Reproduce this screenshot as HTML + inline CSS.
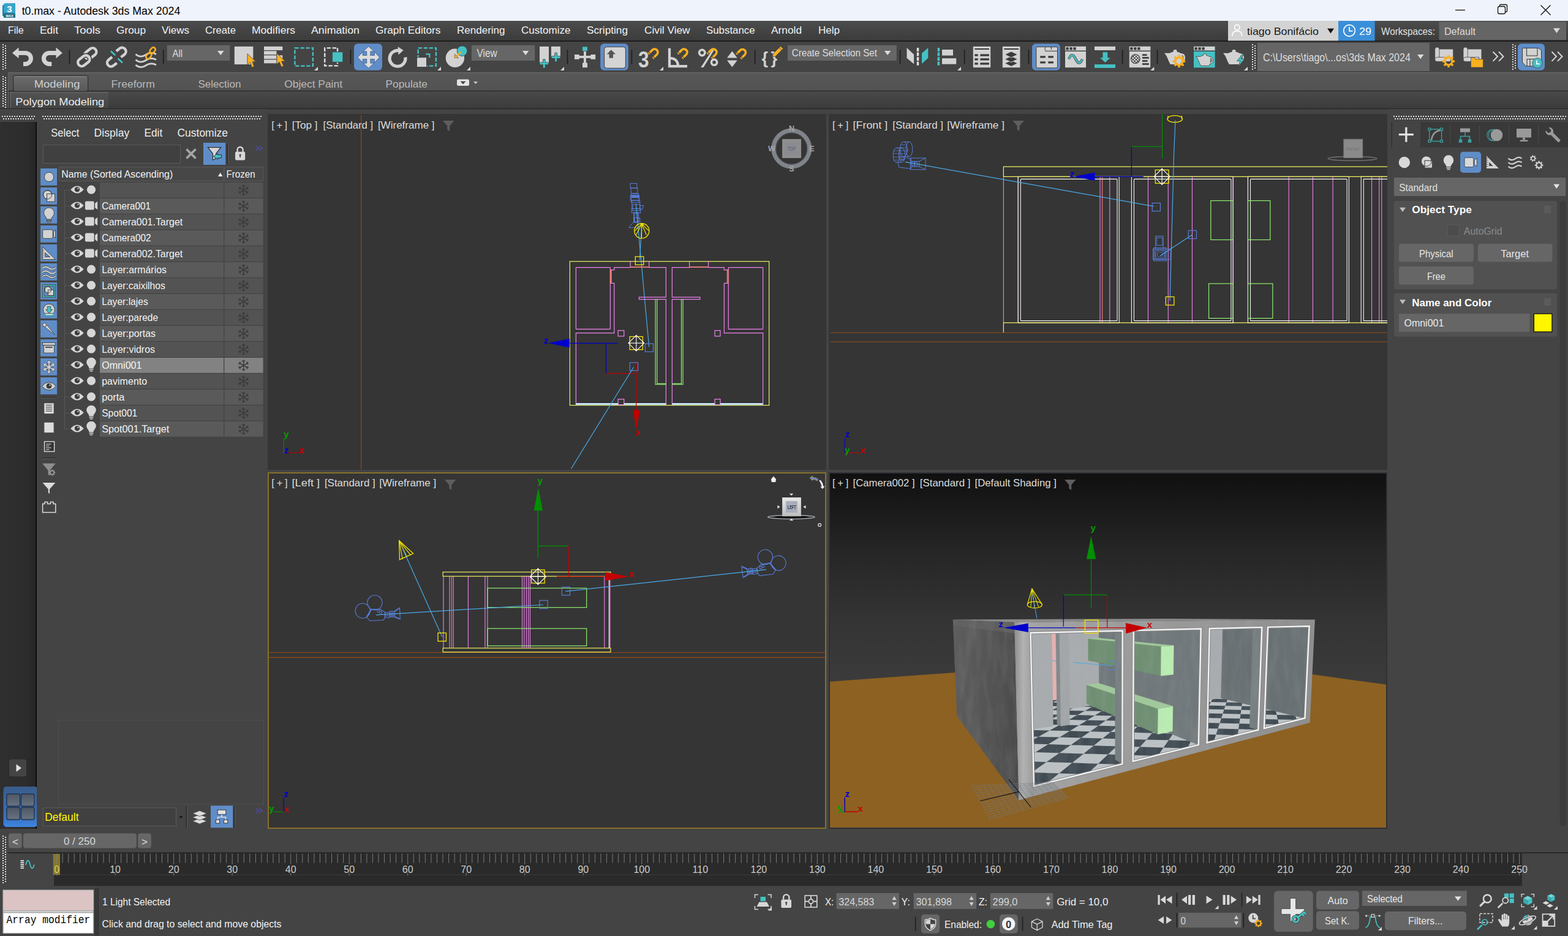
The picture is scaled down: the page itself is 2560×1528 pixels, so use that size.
<!DOCTYPE html>
<html lang="en"><head><meta charset="utf-8"><title>t0.max - Autodesk 3ds Max 2024</title>
<style>
html,body{margin:0;padding:0;background:#444444;overflow:hidden}
body{width:2560px;height:1528px;position:relative;font-family:'Liberation Sans',sans-serif}
.p{position:absolute;overflow:hidden}
.p svg{display:block;position:absolute;left:0;top:0}
svg text{font-family:'Liberation Sans',sans-serif;white-space:pre}
svg text.mono{font-family:'Liberation Mono',monospace}
</style></head><body>
<div id="titlebar" class="p" style="left:0px;top:0px;width:2560px;height:34px;"><svg width="2560" height="34" viewBox="0 0 2560 34"><rect x="0" y="0" width="2560" height="34" fill="#eff3fb"/><path d="M4 9 L9 5.5 L25 5.5 L25 29 L9 29 L4 25.5 Z" fill="#2a7e9a"/><rect x="6" y="5.5" width="19" height="17" rx="1.5" fill="#37a5cc"/><rect x="6" y="21.5" width="19" height="7.5" rx="1" fill="#1f6f8a"/><text x="15.5" y="19.5" font-size="15" fill="#ffffff" font-weight="bold" text-anchor="middle">3</text><text x="15.5" y="27.6" font-size="5.5" fill="#ffffff" textLength="12" lengthAdjust="spacingAndGlyphs" font-weight="bold" text-anchor="middle">MAX</text><text x="35.7" y="24.2" font-size="18" fill="#000000" textLength="258.6" lengthAdjust="spacingAndGlyphs">t0.max - Autodesk 3ds Max 2024</text><line x1="2376" y1="16.5" x2="2392" y2="16.5" stroke="#111" stroke-width="1.3"/><rect x="2445.5" y="10.5" width="12" height="12" rx="2.5" fill="none" stroke="#111" stroke-width="1.3"/><path d="M2448.5 10 L2448.5 9.5 Q2448.5 7.5 2450.5 7.5 L2458.5 7.5 Q2460.5 7.5 2460.5 9.5 L2460.5 17.5 Q2460.5 19.5 2458.5 19.5 L2458 19.5" fill="none" stroke="#111" stroke-width="1.3"/><path d="M2515.5 8.5 L2531.5 24.5 M2531.5 8.5 L2515.5 24.5" fill="none" stroke="#111" stroke-width="1.4"/></svg></div>
<div id="menubar" class="p" style="left:0px;top:34px;width:2560px;height:33px;"><svg width="2560" height="33" viewBox="0 34 2560 33"><defs><linearGradient id="mg" x1="0" y1="0" x2="0" y2="1"><stop offset="0" stop-color="#4c4c4c"/><stop offset="1" stop-color="#3b3b3b"/></linearGradient></defs><rect x="0" y="34" width="2560" height="33" fill="url(#mg)"/><rect x="0" y="66" width="2560" height="1.5" fill="#1e1e1e"/><text x="12.9" y="55" font-size="17" fill="#f2f2f2" textLength="25.7" lengthAdjust="spacingAndGlyphs">File</text><text x="65" y="55" font-size="17" fill="#f2f2f2" textLength="30" lengthAdjust="spacingAndGlyphs">Edit</text><text x="121" y="55" font-size="17" fill="#f2f2f2" textLength="43" lengthAdjust="spacingAndGlyphs">Tools</text><text x="190" y="55" font-size="17" fill="#f2f2f2" textLength="48" lengthAdjust="spacingAndGlyphs">Group</text><text x="264" y="55" font-size="17" fill="#f2f2f2" textLength="45" lengthAdjust="spacingAndGlyphs">Views</text><text x="335" y="55" font-size="17" fill="#f2f2f2" textLength="50" lengthAdjust="spacingAndGlyphs">Create</text><text x="411" y="55" font-size="17" fill="#f2f2f2" textLength="71" lengthAdjust="spacingAndGlyphs">Modifiers</text><text x="508" y="55" font-size="17" fill="#f2f2f2" textLength="79" lengthAdjust="spacingAndGlyphs">Animation</text><text x="613" y="55" font-size="17" fill="#f2f2f2" textLength="106.5" lengthAdjust="spacingAndGlyphs">Graph Editors</text><text x="746" y="55" font-size="17" fill="#f2f2f2" textLength="78.5" lengthAdjust="spacingAndGlyphs">Rendering</text><text x="851" y="55" font-size="17" fill="#f2f2f2" textLength="80.5" lengthAdjust="spacingAndGlyphs">Customize</text><text x="958" y="55" font-size="17" fill="#f2f2f2" textLength="67" lengthAdjust="spacingAndGlyphs">Scripting</text><text x="1052" y="55" font-size="17" fill="#f2f2f2" textLength="74.6" lengthAdjust="spacingAndGlyphs">Civil View</text><text x="1153" y="55" font-size="17" fill="#f2f2f2" textLength="79.6" lengthAdjust="spacingAndGlyphs">Substance</text><text x="1259" y="55" font-size="17" fill="#f2f2f2" textLength="50" lengthAdjust="spacingAndGlyphs">Arnold</text><text x="1336" y="55" font-size="17" fill="#f2f2f2" textLength="35" lengthAdjust="spacingAndGlyphs">Help</text><rect x="2005" y="34" width="180" height="32.5" fill="#d3d3d3"/><circle cx="2019.8" cy="44.6" r="4.2" fill="none" stroke="#fdfdfd" stroke-width="1.7"/><path d="M2011.8 59 Q2011.8 50.6 2019.8 50.6 Q2027.8 50.6 2027.8 59" fill="none" stroke="#fdfdfd" stroke-width="1.7"/><text x="2036" y="57" font-size="17" fill="#1a1a1a" textLength="117" lengthAdjust="spacingAndGlyphs">tiago Bonifácio</text><path d="M2167 46.5 L2178 46.5 L2172.5 54.5 Z" fill="#111"/><rect x="2185" y="34" width="59.6" height="32.5" fill="#3b8fd8"/><circle cx="2203" cy="50" r="9.3" fill="none" stroke="#fff" stroke-width="1.7"/><path d="M2203 44 L2203 50.6 L2208.6 50.6" fill="none" stroke="#fff" stroke-width="1.7"/><text x="2219" y="57" font-size="17" fill="#ffffff" textLength="20" lengthAdjust="spacingAndGlyphs">29</text><text x="2255" y="57" font-size="16.5" fill="#e0e0e0" textLength="88" lengthAdjust="spacingAndGlyphs">Workspaces:</text><rect x="2349.5" y="35.5" width="207.5" height="29.5" fill="#656565"/><text x="2358" y="57" font-size="16.5" fill="#dcdcdc" textLength="51" lengthAdjust="spacingAndGlyphs">Default</text><path d="M2536 46 L2547 46 L2541.5 54 Z" fill="#d8d8d8"/></svg></div>
<div id="toolbar" class="p" style="left:0px;top:67px;width:2560px;height:51px;"><svg width="2560" height="51" viewBox="0 67 2560 51"><rect x="0" y="67" width="2560" height="51" fill="#444444"/><rect x="0" y="66" width="2560" height="2" fill="#1c1c1c"/><line x1="5" y1="72" x2="5" y2="114" stroke="#dcdcdc" stroke-width="2" stroke-dasharray="2 2"/><line x1="9" y1="74" x2="9" y2="114" stroke="#dcdcdc" stroke-width="2" stroke-dasharray="2 2"/><path d="M30 86.4 L41.4 86.4 A9.05 9.05 0 0 1 41.4 104.5 L38 104.5" fill="none" stroke="#d2d2d2" stroke-width="7"/><path d="M20 86.4 L30.5 77.6 L30.5 95.2 Z" fill="#d2d2d2"/><path d="M92 86.4 L80.5 86.4 A9.05 9.05 0 0 0 80.5 104.5 L84.3 104.5" fill="none" stroke="#d2d2d2" stroke-width="7"/><path d="M101.8 86.4 L91.5 77.6 L91.5 95.2 Z" fill="#d2d2d2"/><line x1="113.5" y1="81.3" x2="113.5" y2="104.5" stroke="#1b1b1b" stroke-width="1.5"/><g transform="translate(147.8 87.2) rotate(-38)"><rect x="-10.5" y="-6.25" width="21" height="12.5" rx="6.25" fill="none" stroke="#d2d2d2" stroke-width="4.4"/></g><g transform="translate(136.8 99.3) rotate(-38)"><rect x="-10.5" y="-6.25" width="21" height="12.5" rx="6.25" fill="none" stroke="#444" stroke-width="7.4"/></g><g transform="translate(136.8 99.3) rotate(-38)"><rect x="-10.5" y="-6.25" width="21" height="12.5" rx="6.25" fill="none" stroke="#d2d2d2" stroke-width="4.4"/></g><g transform="translate(184.6 99.8) rotate(-38)"><path d="M3 -6.25 L-4.2 -6.25 A6.25 6.25 0 0 0 -4.2 6.25 L3 6.25" fill="none" stroke="#d2d2d2" stroke-width="4.4"/></g><g transform="translate(196 86.6) rotate(-38)"><path d="M-3 -6.25 L4.2 -6.25 A6.25 6.25 0 0 1 4.2 6.25 L-3 6.25" fill="none" stroke="#d2d2d2" stroke-width="4.4"/></g><line x1="181" y1="83.5" x2="188.3" y2="90.2" stroke="#45c1c4" stroke-width="2.6"/><line x1="192.5" y1="95.5" x2="200" y2="102.5" stroke="#45c1c4" stroke-width="2.6"/><path d="M221.5 88.5 q7 6.5 15.5 1.5 q9 -6.5 18 -1.5" fill="none" stroke="#d2d2d2" stroke-width="2.8"/><path d="M221.5 97.5 q7 6.5 15.5 1.5 q9 -6.5 18 -1.5" fill="none" stroke="#d2d2d2" stroke-width="2.8"/><path d="M221.5 106 q7 6.5 15.5 1.5 q9 -6.5 18 -1.5" fill="none" stroke="#d2d2d2" stroke-width="2.8"/><g transform="translate(242.8 91.2) rotate(-50)"><rect x="-5.25" y="-3.4" width="10.5" height="6.8" rx="3.4" fill="none" stroke="#fbb020" stroke-width="2.6"/></g><g transform="translate(249.2 82.2) rotate(-50)"><rect x="-5.25" y="-3.4" width="10.5" height="6.8" rx="3.4" fill="none" stroke="#fbb020" stroke-width="2.6"/></g><line x1="266.7" y1="81.3" x2="266.7" y2="104.5" stroke="#1b1b1b" stroke-width="1.5"/><rect x="272.8" y="73.8" width="102.5" height="25.2" fill="#666666"/><text x="281.6" y="92.8" font-size="17" fill="#dedede" textLength="16.6" lengthAdjust="spacingAndGlyphs">All</text><path d="M355 82.9 L365.5 82.9 L360.25 90.1 Z" fill="#dcdcdc"/><rect x="382.8" y="75.9" width="30.5" height="29.2" fill="#d2d2d2"/><path d="M403.9 87.7 L403.9 105.68 L408.08 101.85 L411.56 109.97 L415.04 108.46 L411.67 100.69 L417.59 100.69 Z" fill="#fbb020" stroke="#444" stroke-width="0.8"/><rect x="431" y="75.9" width="30.3" height="6.1" fill="#d2d2d2"/><rect x="431" y="83.2" width="20.5" height="5.9" fill="#d2d2d2"/><rect x="431" y="90.3" width="20.5" height="5.9" fill="#d2d2d2"/><rect x="431" y="97.4" width="20.5" height="5.9" fill="#d2d2d2"/><rect x="454" y="90.3" width="7.3" height="5.9" fill="#d2d2d2"/><path d="M451.9 87 L451.9 104.98 L456.08 101.15 L459.56 109.27 L463.04 107.76 L459.67 99.99 L465.59 99.99 Z" fill="#fbb020" stroke="#444" stroke-width="0.8"/><rect x="481.4" y="78.4" width="29.5" height="29.2" fill="none" stroke="#45c1c4" stroke-width="2.4" stroke-dasharray="6.4 2.6"/><path d="M519 109 L519 115 L513 115 Z" fill="#d8d8d8"/><path d="M549 78.4 L530.2 78.4 L530.2 107.4 L551 107.4 L551 102" fill="none" stroke="#e0e0e0" stroke-width="2.4" stroke-dasharray="6.4 2.6"/><line x1="551" y1="78.4" x2="551" y2="84" stroke="#e0e0e0" stroke-width="2.4"/><rect x="542.9" y="85.2" width="16.4" height="15.7" fill="#45c1c4"/><line x1="572.4" y1="81.3" x2="572.4" y2="104.5" stroke="#1b1b1b" stroke-width="1.5"/><rect x="578" y="71.3" width="46" height="43.5" rx="6" fill="#5f8dc8"/><g transform="rotate(0 601.8 93.5)"><path d="M598.7 93.5 L598.7 83.9 L593 83.9 L601.8 75.7 L610.6 83.9 L604.9 83.9 L604.9 93.5 Z" fill="#dcdcdc" stroke="#3d5f8f" stroke-width="0.9"/></g><g transform="rotate(90 601.8 93.5)"><path d="M598.7 93.5 L598.7 83.9 L593 83.9 L601.8 75.7 L610.6 83.9 L604.9 83.9 L604.9 93.5 Z" fill="#dcdcdc" stroke="#3d5f8f" stroke-width="0.9"/></g><g transform="rotate(180 601.8 93.5)"><path d="M598.7 93.5 L598.7 83.9 L593 83.9 L601.8 75.7 L610.6 83.9 L604.9 83.9 L604.9 93.5 Z" fill="#dcdcdc" stroke="#3d5f8f" stroke-width="0.9"/></g><g transform="rotate(270 601.8 93.5)"><path d="M598.7 93.5 L598.7 83.9 L593 83.9 L601.8 75.7 L610.6 83.9 L604.9 83.9 L604.9 93.5 Z" fill="#dcdcdc" stroke="#3d5f8f" stroke-width="0.9"/></g><rect x="599.2" y="89.9" width="5.2" height="7.2" fill="#dcdcdc"/><rect x="598.2" y="90.9" width="7.2" height="5.2" fill="#dcdcdc"/><path d="M655.5 84.2 A12.9 12.9 0 1 0 661.8 93.5" fill="none" stroke="#d2d2d2" stroke-width="5.2"/><path d="M649.6 76.2 L658.6 82 L650.5 89.6 Z" fill="#d2d2d2"/><rect x="682.6" y="78.4" width="29.3" height="29.2" fill="none" stroke="#45c1c4" stroke-width="2.4" stroke-dasharray="6.4 2.6"/><rect x="680" y="93" width="17" height="17" fill="#444"/><rect x="681" y="94.2" width="15" height="14.8" fill="#d2d2d2"/><path d="M695.3 88.3 L701.3 88.3 L701.3 94.3" fill="none" stroke="#45c1c4" stroke-width="2.2"/><path d="M720 109 L720 115 L714 115 Z" fill="#d8d8d8"/><circle cx="742.9" cy="94.8" r="15.2" fill="#d2d2d2"/><circle cx="754.5" cy="83.2" r="8.3" fill="#45c1c4" stroke="#444" stroke-width="0.9"/><line x1="752.8" y1="84.6" x2="745.5" y2="91.7" stroke="#fbb020" stroke-width="2.4"/><path d="M742.2 88.2 L742.2 94.6 L748.8 94.6 Z" fill="#fbb020" stroke="#444" stroke-width="0.6"/><path d="M768 109 L768 115 L762 115 Z" fill="#d8d8d8"/><rect x="769.9" y="73.8" width="103.3" height="25.2" fill="#666666"/><text x="778.5" y="92.9" font-size="17.5" fill="#dedede" textLength="33.2" lengthAdjust="spacingAndGlyphs">View</text><path d="M852.9 82.9 L863.4 82.9 L858.15 90.1 Z" fill="#dcdcdc"/><rect x="881" y="75.9" width="15" height="27.3" fill="#d2d2d2"/><rect x="899.9" y="75.9" width="15" height="17" fill="#d2d2d2"/><line x1="882.7" y1="103.8" x2="893.9" y2="103.8" stroke="#444" stroke-width="4.6" stroke-linecap="round"/><line x1="888.3" y1="98.2" x2="888.3" y2="109.4" stroke="#444" stroke-width="4.6" stroke-linecap="round"/><line x1="882.7" y1="103.8" x2="893.9" y2="103.8" stroke="#45c1c4" stroke-width="3" stroke-linecap="round"/><line x1="888.3" y1="98.2" x2="888.3" y2="109.4" stroke="#45c1c4" stroke-width="3" stroke-linecap="round"/><line x1="902" y1="93.5" x2="913.2" y2="93.5" stroke="#444" stroke-width="4.6" stroke-linecap="round"/><line x1="907.6" y1="87.9" x2="907.6" y2="99.1" stroke="#444" stroke-width="4.6" stroke-linecap="round"/><line x1="902" y1="93.5" x2="913.2" y2="93.5" stroke="#45c1c4" stroke-width="3" stroke-linecap="round"/><line x1="907.6" y1="87.9" x2="907.6" y2="99.1" stroke="#45c1c4" stroke-width="3" stroke-linecap="round"/><path d="M921 109 L921 115 L915 115 Z" fill="#d8d8d8"/><line x1="926.5" y1="81.3" x2="926.5" y2="104.5" stroke="#1b1b1b" stroke-width="1.5"/><rect x="938" y="91" width="34.1" height="3.9" fill="#d2d2d2"/><rect x="953" y="83" width="3.9" height="20" fill="#d2d2d2"/><rect x="938" y="89" width="7.7" height="7.8" fill="#d2d2d2"/><rect x="964.4" y="89" width="7.7" height="7.8" fill="#d2d2d2"/><rect x="951" y="102.6" width="8" height="7.6" fill="#d2d2d2"/><rect x="950.7" y="76" width="8.5" height="7.4" fill="#45c1c4" stroke="#444" stroke-width="0.8"/><rect x="980.2" y="71.3" width="45.6" height="43.5" rx="6" fill="#5f8dc8"/><rect x="986.6" y="76.6" width="34.8" height="34.7" rx="4" fill="#d4d4d4" stroke="#3b3b3b" stroke-width="1"/><path d="M997.8 81.3 L1005 88.4 L1001 88.4 L1001 94.8 L994.6 94.8 L994.6 88.4 L990.7 88.4 Z" fill="#555555"/><line x1="1031.4" y1="81.3" x2="1031.4" y2="104.5" stroke="#1b1b1b" stroke-width="1.5"/><text x="1042" y="110.3" font-size="36" fill="#d2d2d2" textLength="17.6" lengthAdjust="spacingAndGlyphs" font-weight="bold">3</text><g transform="translate(1068 86) rotate(45)"><path d="M-5.2 8 L-5.2 -1 A5.2 5.2 0 0 1 5.2 -1 L5.2 8" fill="none" stroke="#fbb020" stroke-width="3.6"/><line x1="-7" y1="5.6" x2="-3.4" y2="5.6" stroke="#444" stroke-width="1.2"/><line x1="3.4" y1="5.6" x2="7" y2="5.6" stroke="#444" stroke-width="1.2"/></g><path d="M1083 109 L1083 115 L1077 115 Z" fill="#d8d8d8"/><path d="M1093 78.7 L1093 108.2 L1122 108.2" fill="none" stroke="#d2d2d2" stroke-width="4.2"/><path d="M1094 94.8 Q1106.5 95.6 1107.3 108" fill="none" stroke="#d2d2d2" stroke-width="4"/><g transform="translate(1116 86) rotate(45)"><path d="M-5.2 8 L-5.2 -1 A5.2 5.2 0 0 1 5.2 -1 L5.2 8" fill="none" stroke="#fbb020" stroke-width="3.6"/><line x1="-7" y1="5.6" x2="-3.4" y2="5.6" stroke="#444" stroke-width="1.2"/><line x1="3.4" y1="5.6" x2="7" y2="5.6" stroke="#444" stroke-width="1.2"/></g><circle cx="1146.2" cy="86" r="4.6" fill="none" stroke="#d2d2d2" stroke-width="3.6"/><circle cx="1166" cy="101.7" r="4.6" fill="none" stroke="#d2d2d2" stroke-width="3.6"/><path d="M1163.5 80.6 L1166.5 80.6 L1148.6 110 L1144.2 110 Z" fill="#d2d2d2"/><g transform="translate(1164 86) rotate(45)"><path d="M-5.2 8 L-5.2 -1 A5.2 5.2 0 0 1 5.2 -1 L5.2 8" fill="none" stroke="#fbb020" stroke-width="3.6"/><line x1="-7" y1="5.6" x2="-3.4" y2="5.6" stroke="#444" stroke-width="1.2"/><line x1="3.4" y1="5.6" x2="7" y2="5.6" stroke="#444" stroke-width="1.2"/></g><path d="M1187 94.5 L1203.7 94.5 L1195.3 83.6 Z" fill="#d2d2d2"/><path d="M1187 98.6 L1203.7 98.6 L1195.3 109.6 Z" fill="#d2d2d2"/><g transform="translate(1211.5 86.5) rotate(45)"><path d="M-5.2 8 L-5.2 -1 A5.2 5.2 0 0 1 5.2 -1 L5.2 8" fill="none" stroke="#fbb020" stroke-width="3.6"/><line x1="-7" y1="5.6" x2="-3.4" y2="5.6" stroke="#444" stroke-width="1.2"/><line x1="3.4" y1="5.6" x2="7" y2="5.6" stroke="#444" stroke-width="1.2"/></g><line x1="1232.6" y1="81.3" x2="1232.6" y2="104.5" stroke="#1b1b1b" stroke-width="1.5"/><text x="1243.5" y="104.2" font-size="28" fill="#d2d2d2" textLength="10.5" lengthAdjust="spacingAndGlyphs" font-weight="bold">{</text><text x="1258.5" y="104.2" font-size="28" fill="#d2d2d2" textLength="10.5" lengthAdjust="spacingAndGlyphs" font-weight="bold">}</text><g transform="translate(1261 93) rotate(-45)"><path d="M0 0 L4.6 -2.9 L22 -2.9 L22 2.9 L4.6 2.9 Z" fill="#fbb020" stroke="#444" stroke-width="0.7"/><line x1="18.6" y1="-2.9" x2="18.6" y2="2.9" stroke="#444" stroke-width="0.9"/></g><rect x="1285.9" y="73.8" width="177.9" height="25.2" fill="#666666"/><text x="1292.7" y="91.9" font-size="17" fill="#dedede" textLength="139.3" lengthAdjust="spacingAndGlyphs">Create Selection Set</text><path d="M1443.9 82.9 L1454.4 82.9 L1449.15 90.1 Z" fill="#dcdcdc"/><line x1="1469.6" y1="81.3" x2="1469.6" y2="104.5" stroke="#1b1b1b" stroke-width="1.5"/><path d="M1480.5 78 L1492.1 89 L1492.1 104.5 L1480.5 94.8 Z" fill="#d2d2d2"/><line x1="1498.5" y1="78" x2="1498.5" y2="108" stroke="#e0e0e0" stroke-width="3.4" stroke-dasharray="6 1.6"/><path d="M1515.3 78 L1505 87 L1505 104 L1515.3 94.8 Z" fill="#45c1c4"/><line x1="1532.4" y1="78" x2="1532.4" y2="108" stroke="#45c1c4" stroke-width="3.6" stroke-dasharray="6 1.6"/><rect x="1538" y="81" width="18" height="9.6" fill="#d2d2d2"/><rect x="1538" y="95.2" width="23.2" height="9.5" fill="#d2d2d2"/><path d="M1569 109 L1569 115 L1563 115 Z" fill="#d8d8d8"/><line x1="1574.6" y1="81.3" x2="1574.6" y2="104.5" stroke="#1b1b1b" stroke-width="1.5"/><rect x="1588.8" y="75.9" width="28.4" height="34.3" fill="#d2d2d2"/><rect x="1591.3" y="79" width="23.6" height="2" fill="#3a3a3a"/><rect x="1591.3" y="88.4" width="5.4" height="3.3" fill="#3a3a3a"/><rect x="1600.4" y="88.4" width="14.5" height="3.3" fill="#3a3a3a"/><rect x="1591.3" y="95.2" width="5.4" height="3.3" fill="#3a3a3a"/><rect x="1600.4" y="95.2" width="14.5" height="3.3" fill="#3a3a3a"/><rect x="1591.3" y="102.3" width="5.4" height="3.3" fill="#3a3a3a"/><rect x="1600.4" y="102.3" width="14.5" height="3.3" fill="#3a3a3a"/><rect x="1636.8" y="75.9" width="28.6" height="34.3" fill="#d2d2d2"/><rect x="1639.3" y="79" width="23.6" height="2" fill="#3a3a3a"/><path d="M1651 98.4 L1661.5 103.4 L1651 108.4 L1640.5 103.4 Z" fill="#3a3a3a" stroke="#d2d2d2" stroke-width="0.9"/><path d="M1651 91.6 L1661.5 96.6 L1651 101.6 L1640.5 96.6 Z" fill="#3a3a3a" stroke="#d2d2d2" stroke-width="0.9"/><path d="M1651 84 L1661.5 89 L1651 94 L1640.5 89 Z" fill="#3a3a3a" stroke="#d2d2d2" stroke-width="0.9"/><line x1="1679.5" y1="81.3" x2="1679.5" y2="104.5" stroke="#1b1b1b" stroke-width="1.5"/><rect x="1685" y="71.3" width="45.8" height="43.5" rx="6" fill="#5f8dc8"/><rect x="1691.8" y="76.6" width="34.7" height="34.3" rx="2" fill="#d2d2d2" stroke="#3b3b3b" stroke-width="1"/><rect x="1706.2" y="76.6" width="10.2" height="6.6" rx="2" fill="#d2d2d2" stroke="#3b3b3b" stroke-width="1"/><rect x="1716.4" y="76.6" width="10.1" height="6.6" rx="2" fill="#d2d2d2" stroke="#3b3b3b" stroke-width="1"/><rect x="1706.8" y="81" width="19.2" height="3" fill="#d2d2d2"/><line x1="1706.2" y1="83.4" x2="1726.5" y2="83.4" stroke="#3b3b3b" stroke-width="1"/><rect x="1698.2" y="91.3" width="8.6" height="3.2" fill="#3a3a3a"/><rect x="1698.2" y="100.3" width="8.6" height="3.2" fill="#3a3a3a"/><rect x="1711.3" y="91.3" width="8.6" height="3.2" fill="#3a3a3a"/><rect x="1711.3" y="100.3" width="8.6" height="3.2" fill="#3a3a3a"/><rect x="1739" y="75.9" width="34" height="34.3" fill="#d2d2d2"/><rect x="1739" y="75.9" width="34" height="6.7" fill="#d2d2d2"/><rect x="1740.4" y="77.2" width="4.3" height="4.3" fill="#3a3a3a"/><rect x="1746.4" y="77.2" width="4.3" height="4.3" fill="#3a3a3a"/><rect x="1752.4" y="77.2" width="4.3" height="4.3" fill="#3a3a3a"/><rect x="1739" y="82.6" width="34" height="1.4" fill="#3a3a3a"/><path d="M1745 96.5 Q1750 84 1756 96 Q1762 109 1767 96.5" fill="none" stroke="#444" stroke-width="4.2"/><path d="M1745 96.5 Q1750 84 1756 96 Q1762 109 1767 96.5" fill="none" stroke="#45c1c4" stroke-width="2.6"/><rect x="1787" y="75.9" width="34" height="6.1" fill="#d2d2d2"/><rect x="1787" y="105.1" width="34" height="5.8" fill="#45c1c4"/><path d="M1800.5 85.2 L1808.2 85.2 L1808.2 94.2 L1812.7 94.2 L1804.4 102 L1796 94.2 L1800.5 94.2 Z" fill="#45c1c4"/><line x1="1832.6" y1="81.3" x2="1832.6" y2="104.5" stroke="#1b1b1b" stroke-width="1.5"/><rect x="1843.8" y="75.9" width="34.4" height="34.3" fill="#d2d2d2"/><rect x="1843.8" y="75.9" width="34.4" height="6.7" fill="#d2d2d2"/><rect x="1845.2" y="77.2" width="4.3" height="4.3" fill="#3a3a3a"/><rect x="1851.2" y="77.2" width="4.3" height="4.3" fill="#3a3a3a"/><rect x="1857.2" y="77.2" width="4.3" height="4.3" fill="#3a3a3a"/><rect x="1843.8" y="82.6" width="34.4" height="1.4" fill="#3a3a3a"/><circle cx="1853.7" cy="96.1" r="7.3" fill="#e6e6e6" stroke="#3a3a3a" stroke-width="1.1"/><clipPath id="ckc"><circle cx="1853.7" cy="96.1" r="6.8"/></clipPath><g clip-path="url(#ckc)"><rect x="1846.2" y="88.6" width="2.5" height="2.5" fill="#3a3a3a"/><rect x="1846.2" y="93.6" width="2.5" height="2.5" fill="#3a3a3a"/><rect x="1846.2" y="98.6" width="2.5" height="2.5" fill="#3a3a3a"/><rect x="1848.7" y="91.1" width="2.5" height="2.5" fill="#3a3a3a"/><rect x="1848.7" y="96.1" width="2.5" height="2.5" fill="#3a3a3a"/><rect x="1848.7" y="101.1" width="2.5" height="2.5" fill="#3a3a3a"/><rect x="1851.2" y="88.6" width="2.5" height="2.5" fill="#3a3a3a"/><rect x="1851.2" y="93.6" width="2.5" height="2.5" fill="#3a3a3a"/><rect x="1851.2" y="98.6" width="2.5" height="2.5" fill="#3a3a3a"/><rect x="1853.7" y="91.1" width="2.5" height="2.5" fill="#3a3a3a"/><rect x="1853.7" y="96.1" width="2.5" height="2.5" fill="#3a3a3a"/><rect x="1853.7" y="101.1" width="2.5" height="2.5" fill="#3a3a3a"/><rect x="1856.2" y="88.6" width="2.5" height="2.5" fill="#3a3a3a"/><rect x="1856.2" y="93.6" width="2.5" height="2.5" fill="#3a3a3a"/><rect x="1856.2" y="98.6" width="2.5" height="2.5" fill="#3a3a3a"/><rect x="1858.7" y="91.1" width="2.5" height="2.5" fill="#3a3a3a"/><rect x="1858.7" y="96.1" width="2.5" height="2.5" fill="#3a3a3a"/><rect x="1858.7" y="101.1" width="2.5" height="2.5" fill="#3a3a3a"/></g><rect x="1865" y="88.4" width="7.5" height="2.7" fill="#3a3a3a"/><rect x="1865" y="93" width="10.8" height="2.7" fill="#3a3a3a"/><rect x="1865" y="98.2" width="8.5" height="2.7" fill="#3a3a3a"/><rect x="1865" y="103.2" width="10.8" height="2.7" fill="#3a3a3a"/><path d="M1884.3 109 L1884.3 115 L1878.3 115 Z" fill="#d8d8d8"/><line x1="1889.5" y1="81.3" x2="1889.5" y2="104.5" stroke="#1b1b1b" stroke-width="1.5"/><g transform="translate(1901 81) scale(1)"><path d="M0 5.8 L8.8 5.8 Q10.4 4.2 14.6 3.7 Q14 0 17.6 0 Q21.2 0 20.6 3.7 Q24.8 4.2 26.6 6 Q34 6.2 34 13 Q34 19.8 27.6 20.4 Q26.8 22.4 25.6 24 L9.8 24 Q7 19.6 5.4 14.6 Q3.6 9.4 0 5.8 Z M28.6 9.2 Q31.6 9.8 31.6 13 Q31.6 16.6 28.4 17.6 Q29.2 13 28.6 9.2 Z" fill="#d2d2d2" fill-rule="evenodd"/></g><path d="M1935.05 98.26 L1935.05 101.74 L1932.32 101.74 L1931.38 104.02 L1933.31 105.95 L1930.85 108.41 L1928.92 106.48 L1926.64 107.42 L1926.64 110.15 L1923.16 110.15 L1923.16 107.42 L1920.88 106.48 L1918.95 108.41 L1916.49 105.95 L1918.42 104.02 L1917.48 101.74 L1914.75 101.74 L1914.75 98.26 L1917.48 98.26 L1918.42 95.98 L1916.49 94.05 L1918.95 91.59 L1920.88 93.52 L1923.16 92.58 L1923.16 89.85 L1926.64 89.85 L1926.64 92.58 L1928.92 93.52 L1930.85 91.59 L1933.31 94.05 L1931.38 95.98 L1932.32 98.26 Z M1920.5 100 a4.4 4.4 0 1 0 8.8 0 a4.4 4.4 0 1 0 -8.8 0 Z" fill="#fbb020" fill-rule="evenodd"/><rect x="1949" y="75.9" width="34.4" height="34.3" fill="#45c1c4"/><rect x="1949" y="75.9" width="34.4" height="6.7" fill="#d2d2d2"/><rect x="1950.4" y="77.2" width="4.3" height="4.3" fill="#3a3a3a"/><rect x="1956.4" y="77.2" width="4.3" height="4.3" fill="#3a3a3a"/><rect x="1962.4" y="77.2" width="4.3" height="4.3" fill="#3a3a3a"/><rect x="1949" y="82.6" width="34.4" height="1.4" fill="#3a3a3a"/><rect x="1949" y="84" width="34.4" height="26.2" fill="#45c1c4"/><g stroke="#444" stroke-width="1"><g transform="translate(1952.5 87.5) scale(0.83)"><path d="M0 5.8 L8.8 5.8 Q10.4 4.2 14.6 3.7 Q14 0 17.6 0 Q21.2 0 20.6 3.7 Q24.8 4.2 26.6 6 Q34 6.2 34 13 Q34 19.8 27.6 20.4 Q26.8 22.4 25.6 24 L9.8 24 Q7 19.6 5.4 14.6 Q3.6 9.4 0 5.8 Z M28.6 9.2 Q31.6 9.8 31.6 13 Q31.6 16.6 28.4 17.6 Q29.2 13 28.6 9.2 Z" fill="#d2d2d2" fill-rule="evenodd"/></g></g><g transform="translate(1997 81) scale(1)"><path d="M0 5.8 L8.8 5.8 Q10.4 4.2 14.6 3.7 Q14 0 17.6 0 Q21.2 0 20.6 3.7 Q24.8 4.2 26.6 6 Q34 6.2 34 13 Q34 19.8 27.6 20.4 Q26.8 22.4 25.6 24 L9.8 24 Q7 19.6 5.4 14.6 Q3.6 9.4 0 5.8 Z M28.6 9.2 Q31.6 9.8 31.6 13 Q31.6 16.6 28.4 17.6 Q29.2 13 28.6 9.2 Z" fill="#d2d2d2" fill-rule="evenodd"/></g><path d="M2029.5 87.5 L2019.5 99.5 L2025 99.5 L2021.5 109.5 L2032 96 L2026.5 96 L2031 87.5 Z" fill="#45c1c4" stroke="#444" stroke-width="0.8"/><path d="M2037 109 L2037 115 L2031 115 Z" fill="#d8d8d8"/><line x1="2045" y1="72" x2="2045" y2="114" stroke="#dcdcdc" stroke-width="2" stroke-dasharray="2 2"/><line x1="2049" y1="74" x2="2049" y2="114" stroke="#dcdcdc" stroke-width="2" stroke-dasharray="2 2"/><rect x="2052.9" y="70" width="281" height="46" fill="#666666"/><text x="2061.9" y="100" font-size="17.5" fill="#dedede" textLength="240.9" lengthAdjust="spacingAndGlyphs">C:\Users\tiago\...os\3ds Max 2024</text><path d="M2314 89 L2324.5 89 L2319.2 96.2 Z" fill="#dcdcdc"/><rect x="2349.7" y="80.5" width="22.5" height="16" fill="#d2d2d2"/><path d="M2342.7 80.6 q0 -3.6 3.6 -3.6 q3.6 0 3.6 3.6 l0 16 q0 3.6 -3.6 3.6 q-3.6 0 -3.6 -3.6 Z" fill="#d2d2d2" stroke="#444" stroke-width="0.8"/><path d="M2346.3 93.4 q-3.6 0 -3.6 3.4 q0 3.6 3.6 3.6 l22 0 l0 -7 Z" fill="#d2d2d2" stroke="#444" stroke-width="0.8"/><path d="M2375.05 98.27 L2375.05 101.73 L2372.35 101.72 L2371.41 103.98 L2373.33 105.89 L2370.89 108.33 L2368.98 106.41 L2366.72 107.35 L2366.73 110.05 L2363.27 110.05 L2363.28 107.35 L2361.02 106.41 L2359.11 108.33 L2356.67 105.89 L2358.59 103.98 L2357.65 101.72 L2354.95 101.73 L2354.95 98.27 L2357.65 98.28 L2358.59 96.02 L2356.67 94.11 L2359.11 91.67 L2361.02 93.59 L2363.28 92.65 L2363.27 89.95 L2366.73 89.95 L2366.72 92.65 L2368.98 93.59 L2370.89 91.67 L2373.33 94.11 L2371.41 96.02 L2372.35 98.28 Z M2360.6 100 a4.4 4.4 0 1 0 8.8 0 a4.4 4.4 0 1 0 -8.8 0 Z" fill="#fbb020" fill-rule="evenodd"/><rect x="2396" y="80.5" width="22.5" height="16" fill="#d2d2d2"/><path d="M2389 80.6 q0 -3.6 3.6 -3.6 q3.6 0 3.6 3.6 l0 16 q0 3.6 -3.6 3.6 q-3.6 0 -3.6 -3.6 Z" fill="#d2d2d2" stroke="#444" stroke-width="0.8"/><path d="M2392.6 93.4 q-3.6 0 -3.6 3.4 q0 3.6 3.6 3.6 l22 0 l0 -7 Z" fill="#d2d2d2" stroke="#444" stroke-width="0.8"/><path d="M2401.5 110 L2401.5 94 L2407 94 L2408.5 96.5 L2421.4 96.5 L2421.4 110 Z" fill="#fbb020" stroke="#444" stroke-width="0.7"/><path d="M2437.5 84.5 l7.5 7.7 l-7.5 7.7 M2447 84.5 l7.5 7.7 l-7.5 7.7" fill="none" stroke="#d6d6d6" stroke-width="2"/><line x1="2470" y1="72" x2="2470" y2="114" stroke="#dcdcdc" stroke-width="2" stroke-dasharray="2 2"/><line x1="2474" y1="74" x2="2474" y2="114" stroke="#dcdcdc" stroke-width="2" stroke-dasharray="2 2"/><rect x="2478" y="71.3" width="44" height="43.5" rx="6" fill="#5f8dc8"/><path d="M2487 78.5 L2512 78.5 L2516.5 82.5 L2516.5 108 L2491.5 108 L2485.5 102 L2485.5 80 Q2485.5 78.5 2487 78.5 Z" fill="#d2d2d2" stroke="#3b3b3b" stroke-width="1"/><path d="M2492.5 78.5 L2492.5 91 L2510 91 L2510 78.5 M2493 108 L2493 96.5 L2509 96.5 L2509 108 M2498 96.5 L2498 108" fill="none" stroke="#3b3b3b" stroke-width="1.1"/><circle cx="2510" cy="103" r="8.2" fill="#45c1c4" stroke="#444" stroke-width="0.8"/><path d="M2509 98.5 L2509 104.3 L2513.6 104.3" fill="none" stroke="#fff" stroke-width="1.7"/><path d="M2533.5 84.5 l7.5 7.7 l-7.5 7.7 M2543 84.5 l7.5 7.7 l-7.5 7.7" fill="none" stroke="#d6d6d6" stroke-width="2"/></svg></div>
<div id="ribbon" class="p" style="left:0px;top:118px;width:2560px;height:61px;"><svg width="2560" height="61" viewBox="0 118 2560 61"><defs><linearGradient id="rg1" x1="0" y1="0" x2="0" y2="1"><stop offset="0" stop-color="#585858"/><stop offset="1" stop-color="#525252"/></linearGradient><linearGradient id="rg2" x1="0" y1="0" x2="0" y2="1"><stop offset="0" stop-color="#4a4a4a"/><stop offset="1" stop-color="#3b3b3b"/></linearGradient><linearGradient id="rg3" x1="0" y1="0" x2="0" y2="1"><stop offset="0" stop-color="#6c6c6c"/><stop offset="1" stop-color="#585858"/></linearGradient><linearGradient id="rg4" x1="0" y1="0" x2="0" y2="1"><stop offset="0" stop-color="#535353"/><stop offset="1" stop-color="#444444"/></linearGradient></defs><rect x="0" y="118" width="2560" height="60" fill="#444444"/><rect x="13" y="118" width="2547" height="31" fill="url(#rg1)"/><rect x="13" y="118" width="2547" height="1.2" fill="#6a6a6a"/><rect x="13" y="118" width="1.2" height="59" fill="#606060"/><rect x="14" y="148.5" width="2546" height="28.5" fill="url(#rg2)"/><rect x="14" y="147.8" width="2546" height="1.4" fill="#2b2b2b"/><rect x="0" y="176.8" width="2560" height="1.6" fill="#2a2a2a"/><line x1="5" y1="124" x2="5" y2="176" stroke="#dcdcdc" stroke-width="2" stroke-dasharray="2 2"/><line x1="9" y1="126" x2="9" y2="176" stroke="#dcdcdc" stroke-width="2" stroke-dasharray="2 2"/><rect x="21.6" y="123.3" width="122" height="26" rx="3" fill="url(#rg3)" stroke="#303030" stroke-width="1.2"/><rect x="22.8" y="124.4" width="119.6" height="1.1" fill="#868686"/><text x="55.7" y="142.8" font-size="16.5" fill="#cfcfcf" textLength="74.7" lengthAdjust="spacingAndGlyphs">Modeling</text><text x="181.6" y="142.8" font-size="16.5" fill="#b9b9b9" textLength="71.2" lengthAdjust="spacingAndGlyphs">Freeform</text><text x="323.4" y="142.8" font-size="16.5" fill="#b9b9b9" textLength="70.1" lengthAdjust="spacingAndGlyphs">Selection</text><text x="464.2" y="142.8" font-size="16.5" fill="#b9b9b9" textLength="94.8" lengthAdjust="spacingAndGlyphs">Object Paint</text><text x="629.4" y="142.8" font-size="16.5" fill="#b9b9b9" textLength="68.6" lengthAdjust="spacingAndGlyphs">Populate</text><rect x="746" y="129.5" width="20" height="10.5" rx="2.5" fill="#e4e4e4"/><path d="M751.5 132.8 L760.5 132.8 L756 137.6 Z" fill="#444"/><path d="M773 133.2 L780 133.2 L776.5 137 Z" fill="#cfcfcf"/><rect x="16.9" y="150.4" width="160.1" height="26.2" fill="url(#rg4)"/><rect x="16.9" y="150.4" width="160.1" height="1.1" fill="#6b6b6b"/><rect x="16.9" y="150.4" width="1.1" height="26.2" fill="#6b6b6b"/><text x="25.3" y="171.5" font-size="17" fill="#ececec" textLength="144.9" lengthAdjust="spacingAndGlyphs">Polygon Modeling</text></svg></div>
<div id="leftbar" class="p" style="left:0px;top:178px;width:60px;height:1176px;"><svg width="60" height="1176" viewBox="0 178 60 1176"><defs><linearGradient id="lbg" x1="0" y1="0" x2="1" y2="0"><stop offset="0" stop-color="#2f2f2f"/><stop offset="0.75" stop-color="#2c2c2c"/><stop offset="1" stop-color="#252525"/></linearGradient><linearGradient id="vlb" x1="0" y1="0" x2="0" y2="1"><stop offset="0" stop-color="#3a5c8a"/><stop offset="0.75" stop-color="#3a70c0"/><stop offset="1" stop-color="#3d86e0"/></linearGradient><linearGradient id="vlc" x1="0" y1="0" x2="0" y2="1"><stop offset="0" stop-color="#4e5764"/><stop offset="1" stop-color="#677383"/></linearGradient></defs><rect x="0" y="178" width="60" height="22" fill="#444444"/><line x1="3" y1="190" x2="58" y2="190" stroke="#dcdcdc" stroke-width="2" stroke-dasharray="2 2"/><line x1="5" y1="194" x2="56" y2="194" stroke="#dcdcdc" stroke-width="2" stroke-dasharray="2 2"/><rect x="0" y="199" width="60" height="1154" fill="url(#lbg)"/><rect x="58.4" y="199" width="1.6" height="1154" fill="#080808"/><rect x="14.5" y="1239" width="29" height="29" rx="4" fill="#444444" stroke="#2a2a2a" stroke-width="1"/><path d="M26.5 1247.5 L26.5 1260 L35 1253.7 Z" fill="#e2e2e2"/><rect x="5.5" y="1284" width="56" height="66" rx="5" fill="url(#vlb)"/><rect x="11" y="1296" width="21.5" height="20" rx="2.5" fill="url(#vlc)" stroke="#23344c" stroke-width="1.4"/><rect x="11" y="1318" width="21.5" height="20" rx="2.5" fill="url(#vlc)" stroke="#23344c" stroke-width="1.4"/><rect x="34.5" y="1296" width="21.5" height="20" rx="2.5" fill="url(#vlc)" stroke="#23344c" stroke-width="1.4"/><rect x="34.5" y="1318" width="21.5" height="20" rx="2.5" fill="url(#vlc)" stroke="#23344c" stroke-width="1.4"/></svg></div>
<div id="explorer" class="p" style="left:60px;top:178px;width:377px;height:1176px;"><svg width="377" height="1176" viewBox="60 178 377 1176"><rect x="60" y="178" width="377" height="1176" fill="#444444"/><line x1="69" y1="190" x2="428" y2="190" stroke="#dcdcdc" stroke-width="2" stroke-dasharray="2 2"/><line x1="71" y1="194" x2="426" y2="194" stroke="#dcdcdc" stroke-width="2" stroke-dasharray="2 2"/><text x="83.3" y="222.8" font-size="17.5" fill="#ececec" textLength="46.1" lengthAdjust="spacingAndGlyphs">Select</text><text x="153.6" y="222.8" font-size="17.5" fill="#ececec" textLength="57.6" lengthAdjust="spacingAndGlyphs">Display</text><text x="235.5" y="222.8" font-size="17.5" fill="#ececec" textLength="29.7" lengthAdjust="spacingAndGlyphs">Edit</text><text x="289.5" y="222.8" font-size="17.5" fill="#ececec" textLength="82.5" lengthAdjust="spacingAndGlyphs">Customize</text><rect x="70.5" y="236.7" width="224" height="29.8" fill="#404040" stroke="#5a5a5a" stroke-width="1"/><path d="M304.5 243.5 L319.5 258.5 M319.5 243.5 L304.5 258.5" fill="none" stroke="#a4a4a4" stroke-width="3.8"/><rect x="332" y="233" width="36.2" height="36" fill="#5f8dc8"/><path d="M339.4 240.6 L360.6 240.6 L352.6 250.8 L352.6 258.6 L347.4 261.2 L347.4 250.8 Z" fill="#d6d6d6" stroke="#2e2e2e" stroke-width="1.2"/><path d="M348.4 255.4 L355.6 250.6 L355.6 252.8 L361.6 252.8 L361.6 257.8 L355.6 257.8 L355.6 260.2 Z" fill="#45c1c4" stroke="#2e2e2e" stroke-width="1"/><line x1="371.3" y1="235" x2="371.3" y2="268" stroke="#262626" stroke-width="1.4"/><line x1="372.7" y1="235" x2="372.7" y2="268" stroke="#5c5c5c" stroke-width="1"/><rect x="384" y="247.8" width="16.2" height="13.6" rx="1.8" fill="#d8d8d8"/><path d="M387.6 248 L387.6 244.5 A4.5 4.5 0 0 1 396.6 244.5 L396.6 248" fill="none" stroke="#d8d8d8" stroke-width="2.4"/><circle cx="392.1" cy="253" r="1.6" fill="#444"/><rect x="391.3" y="253" width="1.6" height="4.2" fill="#444"/><path d="M418 238.5 l4.3 3.7 l-4.3 3.7 M423.6 238.5 l4.3 3.7 l-4.3 3.7" fill="none" stroke="#4a4a92" stroke-width="2.2"/><rect x="96.6" y="272.6" width="268.4" height="23" fill="#474747" stroke="#5b5b5b" stroke-width="1"/><rect x="366.3" y="272.6" width="63" height="23" fill="#474747" stroke="#5b5b5b" stroke-width="1"/><text x="100.2" y="290" font-size="16.5" fill="#f2f2f2" textLength="182" lengthAdjust="spacingAndGlyphs">Name (Sorted Ascending)</text><path d="M356 288 L363.4 288 L359.7 281.8 Z" fill="#f0f0f0"/><text x="369.6" y="290" font-size="16.5" fill="#f2f2f2" textLength="47" lengthAdjust="spacingAndGlyphs">Frozen</text><rect x="163" y="298" width="202" height="24.8" fill="#535353"/><rect x="366.3" y="298" width="63.3" height="24.8" fill="#535353"/><line x1="105.5" y1="310.5" x2="114" y2="310.5" stroke="#6e6e6e" stroke-width="1" stroke-dasharray="1 1.5"/><path d="M115.3 309.5 Q126 297.29 136.7 309.5 Q126 321.71 115.3 309.5 Z" fill="#d6d6d6"/><circle cx="126" cy="309.3" r="4.1" fill="#3c3c3c"/><circle cx="127.5" cy="307.9" r="1.15" fill="#d6d6d6"/><circle cx="149" cy="309.7" r="7.1" fill="#d6d6d6"/><line x1="397.6" y1="301.5" x2="397.6" y2="319.5" stroke="#3d3d3d" stroke-width="1.5"/><line x1="397.6" y1="316.08" x2="395.28" y2="318.57" stroke="#3d3d3d" stroke-width="1.35"/><line x1="397.6" y1="316.08" x2="399.92" y2="318.57" stroke="#3d3d3d" stroke-width="1.35"/><line x1="397.6" y1="304.92" x2="399.92" y2="302.43" stroke="#3d3d3d" stroke-width="1.35"/><line x1="397.6" y1="304.92" x2="395.28" y2="302.43" stroke="#3d3d3d" stroke-width="1.35"/><line x1="405.39" y1="306" x2="389.81" y2="315" stroke="#3d3d3d" stroke-width="1.5"/><line x1="392.77" y1="313.29" x2="389.45" y2="312.53" stroke="#3d3d3d" stroke-width="1.35"/><line x1="392.77" y1="313.29" x2="391.77" y2="316.54" stroke="#3d3d3d" stroke-width="1.35"/><line x1="402.43" y1="307.71" x2="405.75" y2="308.47" stroke="#3d3d3d" stroke-width="1.35"/><line x1="402.43" y1="307.71" x2="403.43" y2="304.46" stroke="#3d3d3d" stroke-width="1.35"/><line x1="405.39" y1="315" x2="389.81" y2="306" stroke="#3d3d3d" stroke-width="1.5"/><line x1="392.77" y1="307.71" x2="391.77" y2="304.46" stroke="#3d3d3d" stroke-width="1.35"/><line x1="392.77" y1="307.71" x2="389.45" y2="308.47" stroke="#3d3d3d" stroke-width="1.35"/><line x1="402.43" y1="313.29" x2="403.43" y2="316.54" stroke="#3d3d3d" stroke-width="1.35"/><line x1="402.43" y1="313.29" x2="405.75" y2="312.53" stroke="#3d3d3d" stroke-width="1.35"/><rect x="163" y="324" width="202" height="24.8" fill="#5a5a5a"/><rect x="366.3" y="324" width="63.3" height="24.8" fill="#5a5a5a"/><line x1="105.5" y1="336.5" x2="114" y2="336.5" stroke="#6e6e6e" stroke-width="1" stroke-dasharray="1 1.5"/><path d="M115.3 335.5 Q126 323.29 136.7 335.5 Q126 347.71 115.3 335.5 Z" fill="#d6d6d6"/><circle cx="126" cy="335.3" r="4.1" fill="#3c3c3c"/><circle cx="127.5" cy="333.9" r="1.15" fill="#d6d6d6"/><rect x="138.9" y="328.6" width="14.8" height="13.8" rx="2.2" fill="#d6d6d6"/><path d="M155.1 331.9 L159.2 328.7 L159.2 342.3 L155.1 339.1 Z" fill="#d6d6d6"/><text x="166.2" y="342" font-size="17" fill="#f4f4f4" textLength="79.8" lengthAdjust="spacingAndGlyphs">Camera001</text><line x1="397.6" y1="327.5" x2="397.6" y2="345.5" stroke="#3d3d3d" stroke-width="1.5"/><line x1="397.6" y1="342.08" x2="395.28" y2="344.57" stroke="#3d3d3d" stroke-width="1.35"/><line x1="397.6" y1="342.08" x2="399.92" y2="344.57" stroke="#3d3d3d" stroke-width="1.35"/><line x1="397.6" y1="330.92" x2="399.92" y2="328.43" stroke="#3d3d3d" stroke-width="1.35"/><line x1="397.6" y1="330.92" x2="395.28" y2="328.43" stroke="#3d3d3d" stroke-width="1.35"/><line x1="405.39" y1="332" x2="389.81" y2="341" stroke="#3d3d3d" stroke-width="1.5"/><line x1="392.77" y1="339.29" x2="389.45" y2="338.53" stroke="#3d3d3d" stroke-width="1.35"/><line x1="392.77" y1="339.29" x2="391.77" y2="342.54" stroke="#3d3d3d" stroke-width="1.35"/><line x1="402.43" y1="333.71" x2="405.75" y2="334.47" stroke="#3d3d3d" stroke-width="1.35"/><line x1="402.43" y1="333.71" x2="403.43" y2="330.46" stroke="#3d3d3d" stroke-width="1.35"/><line x1="405.39" y1="341" x2="389.81" y2="332" stroke="#3d3d3d" stroke-width="1.5"/><line x1="392.77" y1="333.71" x2="391.77" y2="330.46" stroke="#3d3d3d" stroke-width="1.35"/><line x1="392.77" y1="333.71" x2="389.45" y2="334.47" stroke="#3d3d3d" stroke-width="1.35"/><line x1="402.43" y1="339.29" x2="403.43" y2="342.54" stroke="#3d3d3d" stroke-width="1.35"/><line x1="402.43" y1="339.29" x2="405.75" y2="338.53" stroke="#3d3d3d" stroke-width="1.35"/><rect x="163" y="350" width="202" height="24.8" fill="#535353"/><rect x="366.3" y="350" width="63.3" height="24.8" fill="#535353"/><line x1="105.5" y1="362.5" x2="114" y2="362.5" stroke="#6e6e6e" stroke-width="1" stroke-dasharray="1 1.5"/><path d="M115.3 361.5 Q126 349.29 136.7 361.5 Q126 373.71 115.3 361.5 Z" fill="#d6d6d6"/><circle cx="126" cy="361.3" r="4.1" fill="#3c3c3c"/><circle cx="127.5" cy="359.9" r="1.15" fill="#d6d6d6"/><rect x="138.9" y="354.6" width="14.8" height="13.8" rx="2.2" fill="#d6d6d6"/><path d="M155.1 357.9 L159.2 354.7 L159.2 368.3 L155.1 365.1 Z" fill="#d6d6d6"/><text x="166.2" y="368" font-size="17" fill="#f4f4f4" textLength="132" lengthAdjust="spacingAndGlyphs">Camera001.Target</text><line x1="397.6" y1="353.5" x2="397.6" y2="371.5" stroke="#3d3d3d" stroke-width="1.5"/><line x1="397.6" y1="368.08" x2="395.28" y2="370.57" stroke="#3d3d3d" stroke-width="1.35"/><line x1="397.6" y1="368.08" x2="399.92" y2="370.57" stroke="#3d3d3d" stroke-width="1.35"/><line x1="397.6" y1="356.92" x2="399.92" y2="354.43" stroke="#3d3d3d" stroke-width="1.35"/><line x1="397.6" y1="356.92" x2="395.28" y2="354.43" stroke="#3d3d3d" stroke-width="1.35"/><line x1="405.39" y1="358" x2="389.81" y2="367" stroke="#3d3d3d" stroke-width="1.5"/><line x1="392.77" y1="365.29" x2="389.45" y2="364.53" stroke="#3d3d3d" stroke-width="1.35"/><line x1="392.77" y1="365.29" x2="391.77" y2="368.54" stroke="#3d3d3d" stroke-width="1.35"/><line x1="402.43" y1="359.71" x2="405.75" y2="360.47" stroke="#3d3d3d" stroke-width="1.35"/><line x1="402.43" y1="359.71" x2="403.43" y2="356.46" stroke="#3d3d3d" stroke-width="1.35"/><line x1="405.39" y1="367" x2="389.81" y2="358" stroke="#3d3d3d" stroke-width="1.5"/><line x1="392.77" y1="359.71" x2="391.77" y2="356.46" stroke="#3d3d3d" stroke-width="1.35"/><line x1="392.77" y1="359.71" x2="389.45" y2="360.47" stroke="#3d3d3d" stroke-width="1.35"/><line x1="402.43" y1="365.29" x2="403.43" y2="368.54" stroke="#3d3d3d" stroke-width="1.35"/><line x1="402.43" y1="365.29" x2="405.75" y2="364.53" stroke="#3d3d3d" stroke-width="1.35"/><rect x="163" y="376" width="202" height="24.8" fill="#5a5a5a"/><rect x="366.3" y="376" width="63.3" height="24.8" fill="#5a5a5a"/><line x1="105.5" y1="388.5" x2="114" y2="388.5" stroke="#6e6e6e" stroke-width="1" stroke-dasharray="1 1.5"/><path d="M115.3 387.5 Q126 375.29 136.7 387.5 Q126 399.71 115.3 387.5 Z" fill="#d6d6d6"/><circle cx="126" cy="387.3" r="4.1" fill="#3c3c3c"/><circle cx="127.5" cy="385.9" r="1.15" fill="#d6d6d6"/><rect x="138.9" y="380.6" width="14.8" height="13.8" rx="2.2" fill="#d6d6d6"/><path d="M155.1 383.9 L159.2 380.7 L159.2 394.3 L155.1 391.1 Z" fill="#d6d6d6"/><text x="166.2" y="394" font-size="17" fill="#f4f4f4" textLength="80.5" lengthAdjust="spacingAndGlyphs">Camera002</text><line x1="397.6" y1="379.5" x2="397.6" y2="397.5" stroke="#3d3d3d" stroke-width="1.5"/><line x1="397.6" y1="394.08" x2="395.28" y2="396.57" stroke="#3d3d3d" stroke-width="1.35"/><line x1="397.6" y1="394.08" x2="399.92" y2="396.57" stroke="#3d3d3d" stroke-width="1.35"/><line x1="397.6" y1="382.92" x2="399.92" y2="380.43" stroke="#3d3d3d" stroke-width="1.35"/><line x1="397.6" y1="382.92" x2="395.28" y2="380.43" stroke="#3d3d3d" stroke-width="1.35"/><line x1="405.39" y1="384" x2="389.81" y2="393" stroke="#3d3d3d" stroke-width="1.5"/><line x1="392.77" y1="391.29" x2="389.45" y2="390.53" stroke="#3d3d3d" stroke-width="1.35"/><line x1="392.77" y1="391.29" x2="391.77" y2="394.54" stroke="#3d3d3d" stroke-width="1.35"/><line x1="402.43" y1="385.71" x2="405.75" y2="386.47" stroke="#3d3d3d" stroke-width="1.35"/><line x1="402.43" y1="385.71" x2="403.43" y2="382.46" stroke="#3d3d3d" stroke-width="1.35"/><line x1="405.39" y1="393" x2="389.81" y2="384" stroke="#3d3d3d" stroke-width="1.5"/><line x1="392.77" y1="385.71" x2="391.77" y2="382.46" stroke="#3d3d3d" stroke-width="1.35"/><line x1="392.77" y1="385.71" x2="389.45" y2="386.47" stroke="#3d3d3d" stroke-width="1.35"/><line x1="402.43" y1="391.29" x2="403.43" y2="394.54" stroke="#3d3d3d" stroke-width="1.35"/><line x1="402.43" y1="391.29" x2="405.75" y2="390.53" stroke="#3d3d3d" stroke-width="1.35"/><rect x="163" y="402" width="202" height="24.8" fill="#535353"/><rect x="366.3" y="402" width="63.3" height="24.8" fill="#535353"/><line x1="105.5" y1="414.5" x2="114" y2="414.5" stroke="#6e6e6e" stroke-width="1" stroke-dasharray="1 1.5"/><path d="M115.3 413.5 Q126 401.29 136.7 413.5 Q126 425.71 115.3 413.5 Z" fill="#d6d6d6"/><circle cx="126" cy="413.3" r="4.1" fill="#3c3c3c"/><circle cx="127.5" cy="411.9" r="1.15" fill="#d6d6d6"/><rect x="138.9" y="406.6" width="14.8" height="13.8" rx="2.2" fill="#d6d6d6"/><path d="M155.1 409.9 L159.2 406.7 L159.2 420.3 L155.1 417.1 Z" fill="#d6d6d6"/><text x="166.2" y="420" font-size="17" fill="#f4f4f4" textLength="132" lengthAdjust="spacingAndGlyphs">Camera002.Target</text><line x1="397.6" y1="405.5" x2="397.6" y2="423.5" stroke="#3d3d3d" stroke-width="1.5"/><line x1="397.6" y1="420.08" x2="395.28" y2="422.57" stroke="#3d3d3d" stroke-width="1.35"/><line x1="397.6" y1="420.08" x2="399.92" y2="422.57" stroke="#3d3d3d" stroke-width="1.35"/><line x1="397.6" y1="408.92" x2="399.92" y2="406.43" stroke="#3d3d3d" stroke-width="1.35"/><line x1="397.6" y1="408.92" x2="395.28" y2="406.43" stroke="#3d3d3d" stroke-width="1.35"/><line x1="405.39" y1="410" x2="389.81" y2="419" stroke="#3d3d3d" stroke-width="1.5"/><line x1="392.77" y1="417.29" x2="389.45" y2="416.53" stroke="#3d3d3d" stroke-width="1.35"/><line x1="392.77" y1="417.29" x2="391.77" y2="420.54" stroke="#3d3d3d" stroke-width="1.35"/><line x1="402.43" y1="411.71" x2="405.75" y2="412.47" stroke="#3d3d3d" stroke-width="1.35"/><line x1="402.43" y1="411.71" x2="403.43" y2="408.46" stroke="#3d3d3d" stroke-width="1.35"/><line x1="405.39" y1="419" x2="389.81" y2="410" stroke="#3d3d3d" stroke-width="1.5"/><line x1="392.77" y1="411.71" x2="391.77" y2="408.46" stroke="#3d3d3d" stroke-width="1.35"/><line x1="392.77" y1="411.71" x2="389.45" y2="412.47" stroke="#3d3d3d" stroke-width="1.35"/><line x1="402.43" y1="417.29" x2="403.43" y2="420.54" stroke="#3d3d3d" stroke-width="1.35"/><line x1="402.43" y1="417.29" x2="405.75" y2="416.53" stroke="#3d3d3d" stroke-width="1.35"/><rect x="163" y="428" width="202" height="24.8" fill="#5a5a5a"/><rect x="366.3" y="428" width="63.3" height="24.8" fill="#5a5a5a"/><line x1="105.5" y1="440.5" x2="114" y2="440.5" stroke="#6e6e6e" stroke-width="1" stroke-dasharray="1 1.5"/><path d="M115.3 439.5 Q126 427.29 136.7 439.5 Q126 451.71 115.3 439.5 Z" fill="#d6d6d6"/><circle cx="126" cy="439.3" r="4.1" fill="#3c3c3c"/><circle cx="127.5" cy="437.9" r="1.15" fill="#d6d6d6"/><circle cx="149" cy="439.7" r="7.1" fill="#d6d6d6"/><text x="166.2" y="446" font-size="17" fill="#f4f4f4" textLength="105.7" lengthAdjust="spacingAndGlyphs">Layer:armários</text><line x1="397.6" y1="431.5" x2="397.6" y2="449.5" stroke="#3d3d3d" stroke-width="1.5"/><line x1="397.6" y1="446.08" x2="395.28" y2="448.57" stroke="#3d3d3d" stroke-width="1.35"/><line x1="397.6" y1="446.08" x2="399.92" y2="448.57" stroke="#3d3d3d" stroke-width="1.35"/><line x1="397.6" y1="434.92" x2="399.92" y2="432.43" stroke="#3d3d3d" stroke-width="1.35"/><line x1="397.6" y1="434.92" x2="395.28" y2="432.43" stroke="#3d3d3d" stroke-width="1.35"/><line x1="405.39" y1="436" x2="389.81" y2="445" stroke="#3d3d3d" stroke-width="1.5"/><line x1="392.77" y1="443.29" x2="389.45" y2="442.53" stroke="#3d3d3d" stroke-width="1.35"/><line x1="392.77" y1="443.29" x2="391.77" y2="446.54" stroke="#3d3d3d" stroke-width="1.35"/><line x1="402.43" y1="437.71" x2="405.75" y2="438.47" stroke="#3d3d3d" stroke-width="1.35"/><line x1="402.43" y1="437.71" x2="403.43" y2="434.46" stroke="#3d3d3d" stroke-width="1.35"/><line x1="405.39" y1="445" x2="389.81" y2="436" stroke="#3d3d3d" stroke-width="1.5"/><line x1="392.77" y1="437.71" x2="391.77" y2="434.46" stroke="#3d3d3d" stroke-width="1.35"/><line x1="392.77" y1="437.71" x2="389.45" y2="438.47" stroke="#3d3d3d" stroke-width="1.35"/><line x1="402.43" y1="443.29" x2="403.43" y2="446.54" stroke="#3d3d3d" stroke-width="1.35"/><line x1="402.43" y1="443.29" x2="405.75" y2="442.53" stroke="#3d3d3d" stroke-width="1.35"/><rect x="163" y="454" width="202" height="24.8" fill="#535353"/><rect x="366.3" y="454" width="63.3" height="24.8" fill="#535353"/><line x1="105.5" y1="466.5" x2="114" y2="466.5" stroke="#6e6e6e" stroke-width="1" stroke-dasharray="1 1.5"/><path d="M115.3 465.5 Q126 453.29 136.7 465.5 Q126 477.71 115.3 465.5 Z" fill="#d6d6d6"/><circle cx="126" cy="465.3" r="4.1" fill="#3c3c3c"/><circle cx="127.5" cy="463.9" r="1.15" fill="#d6d6d6"/><circle cx="149" cy="465.7" r="7.1" fill="#d6d6d6"/><text x="166.2" y="472" font-size="17" fill="#f4f4f4" textLength="103.7" lengthAdjust="spacingAndGlyphs">Layer:caixilhos</text><line x1="397.6" y1="457.5" x2="397.6" y2="475.5" stroke="#3d3d3d" stroke-width="1.5"/><line x1="397.6" y1="472.08" x2="395.28" y2="474.57" stroke="#3d3d3d" stroke-width="1.35"/><line x1="397.6" y1="472.08" x2="399.92" y2="474.57" stroke="#3d3d3d" stroke-width="1.35"/><line x1="397.6" y1="460.92" x2="399.92" y2="458.43" stroke="#3d3d3d" stroke-width="1.35"/><line x1="397.6" y1="460.92" x2="395.28" y2="458.43" stroke="#3d3d3d" stroke-width="1.35"/><line x1="405.39" y1="462" x2="389.81" y2="471" stroke="#3d3d3d" stroke-width="1.5"/><line x1="392.77" y1="469.29" x2="389.45" y2="468.53" stroke="#3d3d3d" stroke-width="1.35"/><line x1="392.77" y1="469.29" x2="391.77" y2="472.54" stroke="#3d3d3d" stroke-width="1.35"/><line x1="402.43" y1="463.71" x2="405.75" y2="464.47" stroke="#3d3d3d" stroke-width="1.35"/><line x1="402.43" y1="463.71" x2="403.43" y2="460.46" stroke="#3d3d3d" stroke-width="1.35"/><line x1="405.39" y1="471" x2="389.81" y2="462" stroke="#3d3d3d" stroke-width="1.5"/><line x1="392.77" y1="463.71" x2="391.77" y2="460.46" stroke="#3d3d3d" stroke-width="1.35"/><line x1="392.77" y1="463.71" x2="389.45" y2="464.47" stroke="#3d3d3d" stroke-width="1.35"/><line x1="402.43" y1="469.29" x2="403.43" y2="472.54" stroke="#3d3d3d" stroke-width="1.35"/><line x1="402.43" y1="469.29" x2="405.75" y2="468.53" stroke="#3d3d3d" stroke-width="1.35"/><rect x="163" y="480" width="202" height="24.8" fill="#5a5a5a"/><rect x="366.3" y="480" width="63.3" height="24.8" fill="#5a5a5a"/><line x1="105.5" y1="492.5" x2="114" y2="492.5" stroke="#6e6e6e" stroke-width="1" stroke-dasharray="1 1.5"/><path d="M115.3 491.5 Q126 479.29 136.7 491.5 Q126 503.71 115.3 491.5 Z" fill="#d6d6d6"/><circle cx="126" cy="491.3" r="4.1" fill="#3c3c3c"/><circle cx="127.5" cy="489.9" r="1.15" fill="#d6d6d6"/><circle cx="149" cy="491.7" r="7.1" fill="#d6d6d6"/><text x="166.2" y="498" font-size="17" fill="#f4f4f4" textLength="75.6" lengthAdjust="spacingAndGlyphs">Layer:lajes</text><line x1="397.6" y1="483.5" x2="397.6" y2="501.5" stroke="#3d3d3d" stroke-width="1.5"/><line x1="397.6" y1="498.08" x2="395.28" y2="500.57" stroke="#3d3d3d" stroke-width="1.35"/><line x1="397.6" y1="498.08" x2="399.92" y2="500.57" stroke="#3d3d3d" stroke-width="1.35"/><line x1="397.6" y1="486.92" x2="399.92" y2="484.43" stroke="#3d3d3d" stroke-width="1.35"/><line x1="397.6" y1="486.92" x2="395.28" y2="484.43" stroke="#3d3d3d" stroke-width="1.35"/><line x1="405.39" y1="488" x2="389.81" y2="497" stroke="#3d3d3d" stroke-width="1.5"/><line x1="392.77" y1="495.29" x2="389.45" y2="494.53" stroke="#3d3d3d" stroke-width="1.35"/><line x1="392.77" y1="495.29" x2="391.77" y2="498.54" stroke="#3d3d3d" stroke-width="1.35"/><line x1="402.43" y1="489.71" x2="405.75" y2="490.47" stroke="#3d3d3d" stroke-width="1.35"/><line x1="402.43" y1="489.71" x2="403.43" y2="486.46" stroke="#3d3d3d" stroke-width="1.35"/><line x1="405.39" y1="497" x2="389.81" y2="488" stroke="#3d3d3d" stroke-width="1.5"/><line x1="392.77" y1="489.71" x2="391.77" y2="486.46" stroke="#3d3d3d" stroke-width="1.35"/><line x1="392.77" y1="489.71" x2="389.45" y2="490.47" stroke="#3d3d3d" stroke-width="1.35"/><line x1="402.43" y1="495.29" x2="403.43" y2="498.54" stroke="#3d3d3d" stroke-width="1.35"/><line x1="402.43" y1="495.29" x2="405.75" y2="494.53" stroke="#3d3d3d" stroke-width="1.35"/><rect x="163" y="506" width="202" height="24.8" fill="#535353"/><rect x="366.3" y="506" width="63.3" height="24.8" fill="#535353"/><line x1="105.5" y1="518.5" x2="114" y2="518.5" stroke="#6e6e6e" stroke-width="1" stroke-dasharray="1 1.5"/><path d="M115.3 517.5 Q126 505.29 136.7 517.5 Q126 529.71 115.3 517.5 Z" fill="#d6d6d6"/><circle cx="126" cy="517.3" r="4.1" fill="#3c3c3c"/><circle cx="127.5" cy="515.9" r="1.15" fill="#d6d6d6"/><circle cx="149" cy="517.7" r="7.1" fill="#d6d6d6"/><text x="166.2" y="524" font-size="17" fill="#f4f4f4" textLength="92" lengthAdjust="spacingAndGlyphs">Layer:parede</text><line x1="397.6" y1="509.5" x2="397.6" y2="527.5" stroke="#3d3d3d" stroke-width="1.5"/><line x1="397.6" y1="524.08" x2="395.28" y2="526.57" stroke="#3d3d3d" stroke-width="1.35"/><line x1="397.6" y1="524.08" x2="399.92" y2="526.57" stroke="#3d3d3d" stroke-width="1.35"/><line x1="397.6" y1="512.92" x2="399.92" y2="510.43" stroke="#3d3d3d" stroke-width="1.35"/><line x1="397.6" y1="512.92" x2="395.28" y2="510.43" stroke="#3d3d3d" stroke-width="1.35"/><line x1="405.39" y1="514" x2="389.81" y2="523" stroke="#3d3d3d" stroke-width="1.5"/><line x1="392.77" y1="521.29" x2="389.45" y2="520.53" stroke="#3d3d3d" stroke-width="1.35"/><line x1="392.77" y1="521.29" x2="391.77" y2="524.54" stroke="#3d3d3d" stroke-width="1.35"/><line x1="402.43" y1="515.71" x2="405.75" y2="516.47" stroke="#3d3d3d" stroke-width="1.35"/><line x1="402.43" y1="515.71" x2="403.43" y2="512.46" stroke="#3d3d3d" stroke-width="1.35"/><line x1="405.39" y1="523" x2="389.81" y2="514" stroke="#3d3d3d" stroke-width="1.5"/><line x1="392.77" y1="515.71" x2="391.77" y2="512.46" stroke="#3d3d3d" stroke-width="1.35"/><line x1="392.77" y1="515.71" x2="389.45" y2="516.47" stroke="#3d3d3d" stroke-width="1.35"/><line x1="402.43" y1="521.29" x2="403.43" y2="524.54" stroke="#3d3d3d" stroke-width="1.35"/><line x1="402.43" y1="521.29" x2="405.75" y2="520.53" stroke="#3d3d3d" stroke-width="1.35"/><rect x="163" y="532" width="202" height="24.8" fill="#5a5a5a"/><rect x="366.3" y="532" width="63.3" height="24.8" fill="#5a5a5a"/><line x1="105.5" y1="544.5" x2="114" y2="544.5" stroke="#6e6e6e" stroke-width="1" stroke-dasharray="1 1.5"/><path d="M115.3 543.5 Q126 531.29 136.7 543.5 Q126 555.71 115.3 543.5 Z" fill="#d6d6d6"/><circle cx="126" cy="543.3" r="4.1" fill="#3c3c3c"/><circle cx="127.5" cy="541.9" r="1.15" fill="#d6d6d6"/><circle cx="149" cy="543.7" r="7.1" fill="#d6d6d6"/><text x="166.2" y="550" font-size="17" fill="#f4f4f4" textLength="87.6" lengthAdjust="spacingAndGlyphs">Layer:portas</text><line x1="397.6" y1="535.5" x2="397.6" y2="553.5" stroke="#3d3d3d" stroke-width="1.5"/><line x1="397.6" y1="550.08" x2="395.28" y2="552.57" stroke="#3d3d3d" stroke-width="1.35"/><line x1="397.6" y1="550.08" x2="399.92" y2="552.57" stroke="#3d3d3d" stroke-width="1.35"/><line x1="397.6" y1="538.92" x2="399.92" y2="536.43" stroke="#3d3d3d" stroke-width="1.35"/><line x1="397.6" y1="538.92" x2="395.28" y2="536.43" stroke="#3d3d3d" stroke-width="1.35"/><line x1="405.39" y1="540" x2="389.81" y2="549" stroke="#3d3d3d" stroke-width="1.5"/><line x1="392.77" y1="547.29" x2="389.45" y2="546.53" stroke="#3d3d3d" stroke-width="1.35"/><line x1="392.77" y1="547.29" x2="391.77" y2="550.54" stroke="#3d3d3d" stroke-width="1.35"/><line x1="402.43" y1="541.71" x2="405.75" y2="542.47" stroke="#3d3d3d" stroke-width="1.35"/><line x1="402.43" y1="541.71" x2="403.43" y2="538.46" stroke="#3d3d3d" stroke-width="1.35"/><line x1="405.39" y1="549" x2="389.81" y2="540" stroke="#3d3d3d" stroke-width="1.5"/><line x1="392.77" y1="541.71" x2="391.77" y2="538.46" stroke="#3d3d3d" stroke-width="1.35"/><line x1="392.77" y1="541.71" x2="389.45" y2="542.47" stroke="#3d3d3d" stroke-width="1.35"/><line x1="402.43" y1="547.29" x2="403.43" y2="550.54" stroke="#3d3d3d" stroke-width="1.35"/><line x1="402.43" y1="547.29" x2="405.75" y2="546.53" stroke="#3d3d3d" stroke-width="1.35"/><rect x="163" y="558" width="202" height="24.8" fill="#535353"/><rect x="366.3" y="558" width="63.3" height="24.8" fill="#535353"/><line x1="105.5" y1="570.5" x2="114" y2="570.5" stroke="#6e6e6e" stroke-width="1" stroke-dasharray="1 1.5"/><path d="M115.3 569.5 Q126 557.29 136.7 569.5 Q126 581.71 115.3 569.5 Z" fill="#d6d6d6"/><circle cx="126" cy="569.3" r="4.1" fill="#3c3c3c"/><circle cx="127.5" cy="567.9" r="1.15" fill="#d6d6d6"/><circle cx="149" cy="569.7" r="7.1" fill="#d6d6d6"/><text x="166.2" y="576" font-size="17" fill="#f4f4f4" textLength="86.8" lengthAdjust="spacingAndGlyphs">Layer:vidros</text><line x1="397.6" y1="561.5" x2="397.6" y2="579.5" stroke="#3d3d3d" stroke-width="1.5"/><line x1="397.6" y1="576.08" x2="395.28" y2="578.57" stroke="#3d3d3d" stroke-width="1.35"/><line x1="397.6" y1="576.08" x2="399.92" y2="578.57" stroke="#3d3d3d" stroke-width="1.35"/><line x1="397.6" y1="564.92" x2="399.92" y2="562.43" stroke="#3d3d3d" stroke-width="1.35"/><line x1="397.6" y1="564.92" x2="395.28" y2="562.43" stroke="#3d3d3d" stroke-width="1.35"/><line x1="405.39" y1="566" x2="389.81" y2="575" stroke="#3d3d3d" stroke-width="1.5"/><line x1="392.77" y1="573.29" x2="389.45" y2="572.53" stroke="#3d3d3d" stroke-width="1.35"/><line x1="392.77" y1="573.29" x2="391.77" y2="576.54" stroke="#3d3d3d" stroke-width="1.35"/><line x1="402.43" y1="567.71" x2="405.75" y2="568.47" stroke="#3d3d3d" stroke-width="1.35"/><line x1="402.43" y1="567.71" x2="403.43" y2="564.46" stroke="#3d3d3d" stroke-width="1.35"/><line x1="405.39" y1="575" x2="389.81" y2="566" stroke="#3d3d3d" stroke-width="1.5"/><line x1="392.77" y1="567.71" x2="391.77" y2="564.46" stroke="#3d3d3d" stroke-width="1.35"/><line x1="392.77" y1="567.71" x2="389.45" y2="568.47" stroke="#3d3d3d" stroke-width="1.35"/><line x1="402.43" y1="573.29" x2="403.43" y2="576.54" stroke="#3d3d3d" stroke-width="1.35"/><line x1="402.43" y1="573.29" x2="405.75" y2="572.53" stroke="#3d3d3d" stroke-width="1.35"/><rect x="163" y="584" width="202" height="24.8" fill="#828282"/><rect x="366.3" y="584" width="63.3" height="24.8" fill="#828282"/><line x1="105.5" y1="596.5" x2="114" y2="596.5" stroke="#6e6e6e" stroke-width="1" stroke-dasharray="1 1.5"/><path d="M115.3 595.5 Q126 583.29 136.7 595.5 Q126 607.71 115.3 595.5 Z" fill="#d6d6d6"/><circle cx="126" cy="595.3" r="4.1" fill="#3c3c3c"/><circle cx="127.5" cy="593.9" r="1.15" fill="#d6d6d6"/><path d="M143.5 597.1 A7.8 7.8 0 1 1 154.5 597.1 Q152.6 599.2 152.4 601.4 L145.6 601.4 Q145.4 599.2 143.5 597.1 Z" fill="#d6d6d6"/><rect x="145.6" y="602.5" width="6.8" height="1.5" fill="#d6d6d6"/><rect x="146.4" y="604.9" width="5.2" height="1.5" rx="0.7" fill="#d6d6d6"/><text x="166.2" y="602" font-size="17" fill="#f4f4f4" textLength="65.3" lengthAdjust="spacingAndGlyphs">Omni001</text><line x1="397.6" y1="587.5" x2="397.6" y2="605.5" stroke="#3d3d3d" stroke-width="1.5"/><line x1="397.6" y1="602.08" x2="395.28" y2="604.57" stroke="#3d3d3d" stroke-width="1.35"/><line x1="397.6" y1="602.08" x2="399.92" y2="604.57" stroke="#3d3d3d" stroke-width="1.35"/><line x1="397.6" y1="590.92" x2="399.92" y2="588.43" stroke="#3d3d3d" stroke-width="1.35"/><line x1="397.6" y1="590.92" x2="395.28" y2="588.43" stroke="#3d3d3d" stroke-width="1.35"/><line x1="405.39" y1="592" x2="389.81" y2="601" stroke="#3d3d3d" stroke-width="1.5"/><line x1="392.77" y1="599.29" x2="389.45" y2="598.53" stroke="#3d3d3d" stroke-width="1.35"/><line x1="392.77" y1="599.29" x2="391.77" y2="602.54" stroke="#3d3d3d" stroke-width="1.35"/><line x1="402.43" y1="593.71" x2="405.75" y2="594.47" stroke="#3d3d3d" stroke-width="1.35"/><line x1="402.43" y1="593.71" x2="403.43" y2="590.46" stroke="#3d3d3d" stroke-width="1.35"/><line x1="405.39" y1="601" x2="389.81" y2="592" stroke="#3d3d3d" stroke-width="1.5"/><line x1="392.77" y1="593.71" x2="391.77" y2="590.46" stroke="#3d3d3d" stroke-width="1.35"/><line x1="392.77" y1="593.71" x2="389.45" y2="594.47" stroke="#3d3d3d" stroke-width="1.35"/><line x1="402.43" y1="599.29" x2="403.43" y2="602.54" stroke="#3d3d3d" stroke-width="1.35"/><line x1="402.43" y1="599.29" x2="405.75" y2="598.53" stroke="#3d3d3d" stroke-width="1.35"/><rect x="163" y="610" width="202" height="24.8" fill="#535353"/><rect x="366.3" y="610" width="63.3" height="24.8" fill="#535353"/><line x1="105.5" y1="622.5" x2="114" y2="622.5" stroke="#6e6e6e" stroke-width="1" stroke-dasharray="1 1.5"/><path d="M115.3 621.5 Q126 609.29 136.7 621.5 Q126 633.71 115.3 621.5 Z" fill="#d6d6d6"/><circle cx="126" cy="621.3" r="4.1" fill="#3c3c3c"/><circle cx="127.5" cy="619.9" r="1.15" fill="#d6d6d6"/><circle cx="149" cy="621.7" r="7.1" fill="#d6d6d6"/><text x="166.2" y="628" font-size="17" fill="#f4f4f4" textLength="74" lengthAdjust="spacingAndGlyphs">pavimento</text><line x1="397.6" y1="613.5" x2="397.6" y2="631.5" stroke="#3d3d3d" stroke-width="1.5"/><line x1="397.6" y1="628.08" x2="395.28" y2="630.57" stroke="#3d3d3d" stroke-width="1.35"/><line x1="397.6" y1="628.08" x2="399.92" y2="630.57" stroke="#3d3d3d" stroke-width="1.35"/><line x1="397.6" y1="616.92" x2="399.92" y2="614.43" stroke="#3d3d3d" stroke-width="1.35"/><line x1="397.6" y1="616.92" x2="395.28" y2="614.43" stroke="#3d3d3d" stroke-width="1.35"/><line x1="405.39" y1="618" x2="389.81" y2="627" stroke="#3d3d3d" stroke-width="1.5"/><line x1="392.77" y1="625.29" x2="389.45" y2="624.53" stroke="#3d3d3d" stroke-width="1.35"/><line x1="392.77" y1="625.29" x2="391.77" y2="628.54" stroke="#3d3d3d" stroke-width="1.35"/><line x1="402.43" y1="619.71" x2="405.75" y2="620.47" stroke="#3d3d3d" stroke-width="1.35"/><line x1="402.43" y1="619.71" x2="403.43" y2="616.46" stroke="#3d3d3d" stroke-width="1.35"/><line x1="405.39" y1="627" x2="389.81" y2="618" stroke="#3d3d3d" stroke-width="1.5"/><line x1="392.77" y1="619.71" x2="391.77" y2="616.46" stroke="#3d3d3d" stroke-width="1.35"/><line x1="392.77" y1="619.71" x2="389.45" y2="620.47" stroke="#3d3d3d" stroke-width="1.35"/><line x1="402.43" y1="625.29" x2="403.43" y2="628.54" stroke="#3d3d3d" stroke-width="1.35"/><line x1="402.43" y1="625.29" x2="405.75" y2="624.53" stroke="#3d3d3d" stroke-width="1.35"/><rect x="163" y="636" width="202" height="24.8" fill="#5a5a5a"/><rect x="366.3" y="636" width="63.3" height="24.8" fill="#5a5a5a"/><line x1="105.5" y1="648.5" x2="114" y2="648.5" stroke="#6e6e6e" stroke-width="1" stroke-dasharray="1 1.5"/><path d="M115.3 647.5 Q126 635.29 136.7 647.5 Q126 659.71 115.3 647.5 Z" fill="#d6d6d6"/><circle cx="126" cy="647.3" r="4.1" fill="#3c3c3c"/><circle cx="127.5" cy="645.9" r="1.15" fill="#d6d6d6"/><circle cx="149" cy="647.7" r="7.1" fill="#d6d6d6"/><text x="166.2" y="654" font-size="17" fill="#f4f4f4" textLength="37.1" lengthAdjust="spacingAndGlyphs">porta</text><line x1="397.6" y1="639.5" x2="397.6" y2="657.5" stroke="#3d3d3d" stroke-width="1.5"/><line x1="397.6" y1="654.08" x2="395.28" y2="656.57" stroke="#3d3d3d" stroke-width="1.35"/><line x1="397.6" y1="654.08" x2="399.92" y2="656.57" stroke="#3d3d3d" stroke-width="1.35"/><line x1="397.6" y1="642.92" x2="399.92" y2="640.43" stroke="#3d3d3d" stroke-width="1.35"/><line x1="397.6" y1="642.92" x2="395.28" y2="640.43" stroke="#3d3d3d" stroke-width="1.35"/><line x1="405.39" y1="644" x2="389.81" y2="653" stroke="#3d3d3d" stroke-width="1.5"/><line x1="392.77" y1="651.29" x2="389.45" y2="650.53" stroke="#3d3d3d" stroke-width="1.35"/><line x1="392.77" y1="651.29" x2="391.77" y2="654.54" stroke="#3d3d3d" stroke-width="1.35"/><line x1="402.43" y1="645.71" x2="405.75" y2="646.47" stroke="#3d3d3d" stroke-width="1.35"/><line x1="402.43" y1="645.71" x2="403.43" y2="642.46" stroke="#3d3d3d" stroke-width="1.35"/><line x1="405.39" y1="653" x2="389.81" y2="644" stroke="#3d3d3d" stroke-width="1.5"/><line x1="392.77" y1="645.71" x2="391.77" y2="642.46" stroke="#3d3d3d" stroke-width="1.35"/><line x1="392.77" y1="645.71" x2="389.45" y2="646.47" stroke="#3d3d3d" stroke-width="1.35"/><line x1="402.43" y1="651.29" x2="403.43" y2="654.54" stroke="#3d3d3d" stroke-width="1.35"/><line x1="402.43" y1="651.29" x2="405.75" y2="650.53" stroke="#3d3d3d" stroke-width="1.35"/><rect x="163" y="662" width="202" height="24.8" fill="#535353"/><rect x="366.3" y="662" width="63.3" height="24.8" fill="#535353"/><line x1="105.5" y1="674.5" x2="114" y2="674.5" stroke="#6e6e6e" stroke-width="1" stroke-dasharray="1 1.5"/><path d="M115.3 673.5 Q126 661.29 136.7 673.5 Q126 685.71 115.3 673.5 Z" fill="#d6d6d6"/><circle cx="126" cy="673.3" r="4.1" fill="#3c3c3c"/><circle cx="127.5" cy="671.9" r="1.15" fill="#d6d6d6"/><path d="M143.5 675.1 A7.8 7.8 0 1 1 154.5 675.1 Q152.6 677.2 152.4 679.4 L145.6 679.4 Q145.4 677.2 143.5 675.1 Z" fill="#d6d6d6"/><rect x="145.6" y="680.5" width="6.8" height="1.5" fill="#d6d6d6"/><rect x="146.4" y="682.9" width="5.2" height="1.5" rx="0.7" fill="#d6d6d6"/><text x="166.2" y="680" font-size="17" fill="#f4f4f4" textLength="58.1" lengthAdjust="spacingAndGlyphs">Spot001</text><line x1="397.6" y1="665.5" x2="397.6" y2="683.5" stroke="#3d3d3d" stroke-width="1.5"/><line x1="397.6" y1="680.08" x2="395.28" y2="682.57" stroke="#3d3d3d" stroke-width="1.35"/><line x1="397.6" y1="680.08" x2="399.92" y2="682.57" stroke="#3d3d3d" stroke-width="1.35"/><line x1="397.6" y1="668.92" x2="399.92" y2="666.43" stroke="#3d3d3d" stroke-width="1.35"/><line x1="397.6" y1="668.92" x2="395.28" y2="666.43" stroke="#3d3d3d" stroke-width="1.35"/><line x1="405.39" y1="670" x2="389.81" y2="679" stroke="#3d3d3d" stroke-width="1.5"/><line x1="392.77" y1="677.29" x2="389.45" y2="676.53" stroke="#3d3d3d" stroke-width="1.35"/><line x1="392.77" y1="677.29" x2="391.77" y2="680.54" stroke="#3d3d3d" stroke-width="1.35"/><line x1="402.43" y1="671.71" x2="405.75" y2="672.47" stroke="#3d3d3d" stroke-width="1.35"/><line x1="402.43" y1="671.71" x2="403.43" y2="668.46" stroke="#3d3d3d" stroke-width="1.35"/><line x1="405.39" y1="679" x2="389.81" y2="670" stroke="#3d3d3d" stroke-width="1.5"/><line x1="392.77" y1="671.71" x2="391.77" y2="668.46" stroke="#3d3d3d" stroke-width="1.35"/><line x1="392.77" y1="671.71" x2="389.45" y2="672.47" stroke="#3d3d3d" stroke-width="1.35"/><line x1="402.43" y1="677.29" x2="403.43" y2="680.54" stroke="#3d3d3d" stroke-width="1.35"/><line x1="402.43" y1="677.29" x2="405.75" y2="676.53" stroke="#3d3d3d" stroke-width="1.35"/><rect x="163" y="688" width="202" height="24.8" fill="#5a5a5a"/><rect x="366.3" y="688" width="63.3" height="24.8" fill="#5a5a5a"/><line x1="105.5" y1="700.5" x2="114" y2="700.5" stroke="#6e6e6e" stroke-width="1" stroke-dasharray="1 1.5"/><path d="M115.3 699.5 Q126 687.29 136.7 699.5 Q126 711.71 115.3 699.5 Z" fill="#d6d6d6"/><circle cx="126" cy="699.3" r="4.1" fill="#3c3c3c"/><circle cx="127.5" cy="697.9" r="1.15" fill="#d6d6d6"/><path d="M143.5 701.1 A7.8 7.8 0 1 1 154.5 701.1 Q152.6 703.2 152.4 705.4 L145.6 705.4 Q145.4 703.2 143.5 701.1 Z" fill="#d6d6d6"/><rect x="145.6" y="706.5" width="6.8" height="1.5" fill="#d6d6d6"/><rect x="146.4" y="708.9" width="5.2" height="1.5" rx="0.7" fill="#d6d6d6"/><text x="166.2" y="706" font-size="17" fill="#f4f4f4" textLength="110.1" lengthAdjust="spacingAndGlyphs">Spot001.Target</text><line x1="397.6" y1="691.5" x2="397.6" y2="709.5" stroke="#3d3d3d" stroke-width="1.5"/><line x1="397.6" y1="706.08" x2="395.28" y2="708.57" stroke="#3d3d3d" stroke-width="1.35"/><line x1="397.6" y1="706.08" x2="399.92" y2="708.57" stroke="#3d3d3d" stroke-width="1.35"/><line x1="397.6" y1="694.92" x2="399.92" y2="692.43" stroke="#3d3d3d" stroke-width="1.35"/><line x1="397.6" y1="694.92" x2="395.28" y2="692.43" stroke="#3d3d3d" stroke-width="1.35"/><line x1="405.39" y1="696" x2="389.81" y2="705" stroke="#3d3d3d" stroke-width="1.5"/><line x1="392.77" y1="703.29" x2="389.45" y2="702.53" stroke="#3d3d3d" stroke-width="1.35"/><line x1="392.77" y1="703.29" x2="391.77" y2="706.54" stroke="#3d3d3d" stroke-width="1.35"/><line x1="402.43" y1="697.71" x2="405.75" y2="698.47" stroke="#3d3d3d" stroke-width="1.35"/><line x1="402.43" y1="697.71" x2="403.43" y2="694.46" stroke="#3d3d3d" stroke-width="1.35"/><line x1="405.39" y1="705" x2="389.81" y2="696" stroke="#3d3d3d" stroke-width="1.5"/><line x1="392.77" y1="697.71" x2="391.77" y2="694.46" stroke="#3d3d3d" stroke-width="1.35"/><line x1="392.77" y1="697.71" x2="389.45" y2="698.47" stroke="#3d3d3d" stroke-width="1.35"/><line x1="402.43" y1="703.29" x2="403.43" y2="706.54" stroke="#3d3d3d" stroke-width="1.35"/><line x1="402.43" y1="703.29" x2="405.75" y2="702.53" stroke="#3d3d3d" stroke-width="1.35"/><line x1="105.5" y1="310" x2="105.5" y2="700.5" stroke="#6a6a6a" stroke-width="1" stroke-dasharray="1 1"/><rect x="66.1" y="275" width="27" height="27.8" fill="#5f8dc8"/><rect x="66.1" y="306" width="27" height="27.8" fill="#5f8dc8"/><rect x="66.1" y="337" width="27" height="27.8" fill="#5f8dc8"/><rect x="66.1" y="368" width="27" height="27.8" fill="#5f8dc8"/><rect x="66.1" y="399" width="27" height="27.8" fill="#5f8dc8"/><rect x="66.1" y="430" width="27" height="27.8" fill="#5f8dc8"/><rect x="66.1" y="461" width="27" height="27.8" fill="#5f8dc8"/><rect x="66.1" y="492" width="27" height="27.8" fill="#5f8dc8"/><rect x="66.1" y="523" width="27" height="27.8" fill="#5f8dc8"/><rect x="66.1" y="554" width="27" height="27.8" fill="#5f8dc8"/><rect x="66.1" y="585" width="27" height="27.8" fill="#5f8dc8"/><rect x="66.1" y="616" width="27" height="27.8" fill="#5f8dc8"/><circle cx="80" cy="288.9" r="7.7" fill="#d2d2d2" stroke="#3a3a3a" stroke-width="0.9"/><circle cx="77.6" cy="317.9" r="7" fill="#d2d2d2" stroke="#3a3a3a" stroke-width="0.9"/><rect x="76.6" y="316.4" width="12.8" height="12.8" fill="#d2d2d2" stroke="#3a3a3a" stroke-width="0.9"/><circle cx="77.6" cy="317.9" r="7" fill="none" stroke="#3a3a3a" stroke-width="0.9"/><g stroke="#3a3a3a" stroke-width="0.8" transform="translate(-6.4 -27.79) scale(1.08)"><path d="M74.5 352.9 A7.8 7.8 0 1 1 85.5 352.9 Q83.6 355 83.4 357.2 L76.6 357.2 Q76.4 355 74.5 352.9 Z" fill="#d2d2d2"/><rect x="76.6" y="358.3" width="6.8" height="1.5" fill="#d2d2d2"/><rect x="77.4" y="360.7" width="5.2" height="1.5" rx="0.7" fill="#d2d2d2"/></g><g stroke="#3a3a3a" stroke-width="0.9"><rect x="69.6" y="374.9" width="16.6" height="14.4" rx="2.4" fill="#d2d2d2"/><path d="M87.4 378.4 L90.6 375.2 L90.6 389 L87.4 385.8 Z" fill="#d2d2d2"/></g><path d="M69.2 402.8 L69.2 423.6 L90.4 423.6 Z M73.6 412.5 L73.6 419.4 L81.5 419.4 Z" fill="#d2d2d2" stroke="#3a3a3a" stroke-width="0.9" fill-rule="evenodd"/><line x1="69.4" y1="408" x2="71.6" y2="408" stroke="#3a3a3a" stroke-width="0.8"/><line x1="69.4" y1="411" x2="71.6" y2="411" stroke="#3a3a3a" stroke-width="0.8"/><line x1="69.4" y1="414" x2="71.6" y2="414" stroke="#3a3a3a" stroke-width="0.8"/><line x1="69.4" y1="417" x2="71.6" y2="417" stroke="#3a3a3a" stroke-width="0.8"/><line x1="69.4" y1="420" x2="71.6" y2="420" stroke="#3a3a3a" stroke-width="0.8"/><path d="M69 438 q5 -4.6 11 -0.4 q6 4.2 11 -0.6" fill="none" stroke="#3a3a3a" stroke-width="3.4"/><path d="M69 438 q5 -4.6 11 -0.4 q6 4.2 11 -0.6" fill="none" stroke="#d2d2d2" stroke-width="2"/><path d="M69 444.8 q5 -4.6 11 -0.4 q6 4.2 11 -0.6" fill="none" stroke="#3a3a3a" stroke-width="3.4"/><path d="M69 444.8 q5 -4.6 11 -0.4 q6 4.2 11 -0.6" fill="none" stroke="#d2d2d2" stroke-width="2"/><path d="M69 451.6 q5 -4.6 11 -0.4 q6 4.2 11 -0.6" fill="none" stroke="#3a3a3a" stroke-width="3.4"/><path d="M69 451.6 q5 -4.6 11 -0.4 q6 4.2 11 -0.6" fill="none" stroke="#d2d2d2" stroke-width="2"/><rect x="70.8" y="465.7" width="18.6" height="18.6" fill="none" stroke="#3a3a3a" stroke-width="3.2"/><rect x="70.8" y="465.7" width="18.6" height="18.6" fill="none" stroke="#45c1c4" stroke-width="1.6"/><circle cx="78.2" cy="473" r="5.2" fill="#d2d2d2" stroke="#3a3a3a" stroke-width="0.8"/><rect x="78.4" y="473.2" width="9" height="9" fill="#d2d2d2" stroke="#3a3a3a" stroke-width="0.8"/><circle cx="78.2" cy="473" r="5.2" fill="none" stroke="#3a3a3a" stroke-width="0.8"/><circle cx="80" cy="505.6" r="9.4" fill="#d2d2d2" stroke="#3a3a3a" stroke-width="0.9"/><rect x="73.6" y="511.6" width="13" height="4.2" fill="#d2d2d2" stroke="#3a3a3a" stroke-width="0.8"/><path d="M74 511.2 V515 H86.4 V511.2" fill="none" stroke="#45c1c4" stroke-width="1.6"/><path d="M77.4 500.2 L82.8 500.2 L82.8 505.6 L85.6 505.6 L80.1 511.4 L74.6 505.6 L77.4 505.6 Z" fill="#45c1c4" stroke="#3a3a3a" stroke-width="0.8"/><circle cx="72.6" cy="530.3" r="3" fill="#d2d2d2" stroke="#3a3a3a" stroke-width="0.8"/><path d="M73.4 534 L76.8 530.6 L89.8 546.8 Z" fill="#d2d2d2" stroke="#3a3a3a" stroke-width="0.8"/><rect x="69.5" y="559.6" width="21" height="3.7" fill="#d2d2d2" stroke="#3a3a3a" stroke-width="0.8"/><rect x="71.5" y="563.9" width="17" height="12.2" fill="#d2d2d2" stroke="#3a3a3a" stroke-width="0.8"/><rect x="74.2" y="566" width="11.4" height="1.7" fill="#3a3a3a"/><line x1="80" y1="588.6" x2="80" y2="609.8" stroke="#3a3a3a" stroke-width="3.4"/><line x1="80" y1="605.77" x2="77.68" y2="608.26" stroke="#3a3a3a" stroke-width="3.06"/><line x1="80" y1="605.77" x2="82.32" y2="608.26" stroke="#3a3a3a" stroke-width="3.06"/><line x1="80" y1="592.63" x2="82.32" y2="590.14" stroke="#3a3a3a" stroke-width="3.06"/><line x1="80" y1="592.63" x2="77.68" y2="590.14" stroke="#3a3a3a" stroke-width="3.06"/><line x1="89.18" y1="593.9" x2="70.82" y2="604.5" stroke="#3a3a3a" stroke-width="3.4"/><line x1="74.31" y1="602.49" x2="71" y2="601.72" stroke="#3a3a3a" stroke-width="3.06"/><line x1="74.31" y1="602.49" x2="73.31" y2="605.74" stroke="#3a3a3a" stroke-width="3.06"/><line x1="85.69" y1="595.91" x2="89" y2="596.68" stroke="#3a3a3a" stroke-width="3.06"/><line x1="85.69" y1="595.91" x2="86.69" y2="592.66" stroke="#3a3a3a" stroke-width="3.06"/><line x1="89.18" y1="604.5" x2="70.82" y2="593.9" stroke="#3a3a3a" stroke-width="3.4"/><line x1="74.31" y1="595.91" x2="73.31" y2="592.66" stroke="#3a3a3a" stroke-width="3.06"/><line x1="74.31" y1="595.91" x2="71" y2="596.68" stroke="#3a3a3a" stroke-width="3.06"/><line x1="85.69" y1="602.49" x2="86.69" y2="605.74" stroke="#3a3a3a" stroke-width="3.06"/><line x1="85.69" y1="602.49" x2="89" y2="601.72" stroke="#3a3a3a" stroke-width="3.06"/><line x1="80" y1="589" x2="80" y2="609.4" stroke="#d2d2d2" stroke-width="2"/><line x1="80" y1="605.52" x2="77.68" y2="608.01" stroke="#d2d2d2" stroke-width="1.8"/><line x1="80" y1="605.52" x2="82.32" y2="608.01" stroke="#d2d2d2" stroke-width="1.8"/><line x1="80" y1="592.88" x2="82.32" y2="590.39" stroke="#d2d2d2" stroke-width="1.8"/><line x1="80" y1="592.88" x2="77.68" y2="590.39" stroke="#d2d2d2" stroke-width="1.8"/><line x1="88.83" y1="594.1" x2="71.17" y2="604.3" stroke="#d2d2d2" stroke-width="2"/><line x1="74.52" y1="602.36" x2="71.21" y2="601.6" stroke="#d2d2d2" stroke-width="1.8"/><line x1="74.52" y1="602.36" x2="73.53" y2="605.61" stroke="#d2d2d2" stroke-width="1.8"/><line x1="85.48" y1="596.04" x2="88.79" y2="596.8" stroke="#d2d2d2" stroke-width="1.8"/><line x1="85.48" y1="596.04" x2="86.47" y2="592.79" stroke="#d2d2d2" stroke-width="1.8"/><line x1="88.83" y1="604.3" x2="71.17" y2="594.1" stroke="#d2d2d2" stroke-width="2"/><line x1="74.52" y1="596.04" x2="73.53" y2="592.79" stroke="#d2d2d2" stroke-width="1.8"/><line x1="74.52" y1="596.04" x2="71.21" y2="596.8" stroke="#d2d2d2" stroke-width="1.8"/><line x1="85.48" y1="602.36" x2="86.47" y2="605.61" stroke="#d2d2d2" stroke-width="1.8"/><line x1="85.48" y1="602.36" x2="88.79" y2="601.6" stroke="#d2d2d2" stroke-width="1.8"/><path d="M68.44 630.4 Q80 617.21 91.56 630.4 Q80 643.59 68.44 630.4 Z" fill="#d2d2d2" stroke="#3a3a3a" stroke-width="1"/><circle cx="80" cy="630.18" r="4.43" fill="#3a3a3a"/><circle cx="81.62" cy="628.67" r="1.24" fill="#d2d2d2"/><rect x="71.9" y="657.9" width="16.2" height="17.8" fill="#dcdcdc" stroke="#3a3a3a" stroke-width="0.8"/><line x1="74.8" y1="661.4" x2="85" y2="661.4" stroke="#3a3a3a" stroke-width="1.1"/><line x1="74.8" y1="664.6" x2="85" y2="664.6" stroke="#3a3a3a" stroke-width="1.1"/><line x1="74.8" y1="667.8" x2="85" y2="667.8" stroke="#3a3a3a" stroke-width="1.1"/><line x1="74.8" y1="671" x2="85" y2="671" stroke="#3a3a3a" stroke-width="1.1"/><rect x="71.9" y="689.2" width="16.2" height="17.5" fill="#dcdcdc" stroke="#3a3a3a" stroke-width="0.8"/><rect x="72.6" y="720.9" width="16" height="16.2" fill="#333" stroke="#dcdcdc" stroke-width="1.4"/><line x1="75" y1="725" x2="83.6" y2="725" stroke="#dcdcdc" stroke-width="1.1"/><line x1="75" y1="728" x2="80.6" y2="728" stroke="#dcdcdc" stroke-width="1.1"/><line x1="75" y1="731" x2="83.6" y2="731" stroke="#dcdcdc" stroke-width="1.1"/><line x1="75" y1="734" x2="80.6" y2="734" stroke="#dcdcdc" stroke-width="1.1"/><path d="M69.2 756.6 L90.8 756.6 L81.2 768 L81.2 776.5 L78.6 774.5 L78.6 768 Z" fill="#8e8e8e"/><path d="M90.13 770.62 L90.13 772.38 L88.75 772.38 L88.27 773.53 L89.25 774.5 L88 775.75 L87.03 774.77 L85.88 775.25 L85.88 776.63 L84.12 776.63 L84.12 775.25 L82.97 774.77 L82 775.75 L80.75 774.5 L81.73 773.53 L81.25 772.38 L79.87 772.38 L79.87 770.62 L81.25 770.62 L81.73 769.47 L80.75 768.5 L82 767.25 L82.97 768.23 L84.12 767.75 L84.12 766.37 L85.88 766.37 L85.88 767.75 L87.03 768.23 L88 767.25 L89.25 768.5 L88.27 769.47 L88.75 770.62 Z M82.8 771.5 a2.2 2.2 0 1 0 4.4 0 a2.2 2.2 0 1 0 -4.4 0 Z" fill="#9a9a9a" fill-rule="evenodd"/><path d="M69.5 788 L90.4 788 L81 798.5 L81 806 L78.8 804.4 L78.8 798.5 Z" fill="#dcdcdc"/><path d="M69.6 836.4 V822.6 H73 V819.6 H77.6 V822.6 H82.4 V819.6 H87 V822.6 H90.8 V836.4 Z" fill="none" stroke="#dcdcdc" stroke-width="1.5"/><line x1="68" y1="648.6" x2="91" y2="648.6" stroke="#2c2c2c" stroke-width="1.3"/><line x1="68" y1="649.9" x2="91" y2="649.9" stroke="#5c5c5c" stroke-width="1"/><line x1="68" y1="747.7" x2="91" y2="747.7" stroke="#2c2c2c" stroke-width="1.3"/><line x1="68" y1="749" x2="91" y2="749" stroke="#5c5c5c" stroke-width="1"/><rect x="95.5" y="1176" width="335" height="137" fill="none" stroke="#4e4e4e" stroke-width="1"/><rect x="70.5" y="1318.8" width="217" height="29.5" fill="#404040" stroke="#5c5c5c" stroke-width="1"/><text x="73.2" y="1339.8" font-size="17.8" fill="#fff700" textLength="55.3" lengthAdjust="spacingAndGlyphs">Default</text><path d="M292.5 1332.5 L298.5 1332.5 L295.5 1336 Z" fill="#101010"/><line x1="304.3" y1="1316.5" x2="304.3" y2="1351" stroke="#262626" stroke-width="1.4"/><line x1="305.7" y1="1316.5" x2="305.7" y2="1351" stroke="#5c5c5c" stroke-width="1"/><path d="M326 1335.9 L337.5 1340.5 L326 1345.1 L314.5 1340.5 Z" fill="#dcdcdc" stroke="#444" stroke-width="0.8"/><path d="M326 1329.7 L337.5 1334.3 L326 1338.9 L314.5 1334.3 Z" fill="#dcdcdc" stroke="#444" stroke-width="0.8"/><path d="M326 1323.4 L337.5 1328 L326 1332.6 L314.5 1328 Z" fill="#dcdcdc" stroke="#444" stroke-width="0.8"/><rect x="344" y="1315.2" width="36.2" height="36" fill="#5f8dc8"/><rect x="355.2" y="1322.2" width="13.6" height="7.5" fill="#e2e2e2" stroke="#333" stroke-width="0.9"/><path d="M362 1330 L362 1334 M355.5 1338.5 L355.5 1334 L368.5 1334 L368.5 1338.5" fill="none" stroke="#e2e2e2" stroke-width="1.5"/><rect x="352.3" y="1338.3" width="6.3" height="5.6" fill="#e2e2e2" stroke="#333" stroke-width="0.9"/><rect x="365.5" y="1338.3" width="6.3" height="5.6" fill="#e2e2e2" stroke="#333" stroke-width="0.9"/><line x1="382.3" y1="1316.5" x2="382.3" y2="1351" stroke="#262626" stroke-width="1.4"/><line x1="383.7" y1="1316.5" x2="383.7" y2="1351" stroke="#5c5c5c" stroke-width="1"/><path d="M418 1319.8 l4.3 3.7 l-4.3 3.7 M423.6 1319.8 l4.3 3.7 l-4.3 3.7" fill="none" stroke="#4a4a92" stroke-width="2.2"/></svg></div>
<div id="vp_top" class="p" style="left:437px;top:186px;width:912px;height:581px;"><svg width="912" height="581" viewBox="437 186 912 581"><rect x="437" y="186" width="912" height="581" fill="#353535"/><line x1="589.7" y1="188" x2="589.7" y2="766" stroke="#9a4e14" stroke-width="1.1"/><text x="443.2" y="210" font-size="16.5" fill="#dcdcdc" textLength="26" lengthAdjust="spacing">[+]</text><text x="476.7" y="210" font-size="16.5" fill="#dcdcdc" textLength="41.8" lengthAdjust="spacingAndGlyphs">[Top ]</text><text x="527.6" y="210" font-size="16.5" fill="#dcdcdc" textLength="81.5" lengthAdjust="spacingAndGlyphs">[Standard ]</text><text x="616.9" y="210" font-size="16.5" fill="#dcdcdc" textLength="92.7" lengthAdjust="spacingAndGlyphs">[Wireframe ]</text><path d="M723 197 L741.5 197 L734.2 205.6 L734.2 214 L730.3 211.4 L730.3 205.6 Z" fill="#5e5e5e"/><circle cx="1292.3" cy="242.5" r="29.45" fill="none" stroke="#80848a" stroke-width="7"/><circle cx="1292.3" cy="242.5" r="25.3" fill="none" stroke="#4c5058" stroke-width="0.9"/><rect x="1277.1" y="227" width="30.9" height="31" fill="#8e8e8e"/><rect x="1283" y="233.3" width="18.8" height="18.4" fill="#898b93"/><text x="1292.5" y="245.8" font-size="9.5" fill="#595d69" textLength="12.8" lengthAdjust="spacingAndGlyphs" text-anchor="middle">TOP</text><text x="1292.5" y="214.2" font-size="12.5" fill="#a4a4a4" font-weight="bold" text-anchor="middle">N</text><text x="1292.5" y="279.8" font-size="12.5" fill="#a4a4a4" font-weight="bold" text-anchor="middle">S</text><text x="1260" y="247.2" font-size="12.5" fill="#a4a4a4" font-weight="bold" text-anchor="middle">W</text><text x="1325.5" y="247.2" font-size="12.5" fill="#a4a4a4" font-weight="bold" text-anchor="middle">E</text><rect x="1029.08" y="299.42" width="10.79" height="7.55" fill="none" stroke="#587cd8" stroke-width="1"/><rect x="1030.16" y="306.97" width="10.79" height="8.63" fill="none" stroke="#587cd8" stroke-width="1"/><rect x="1030.7" y="316.13" width="11.86" height="2.7" fill="none" stroke="#587cd8" stroke-width="1"/><rect x="1029.08" y="318.83" width="14.56" height="8.09" fill="none" stroke="#587cd8" stroke-width="1"/><rect x="1030.7" y="320.99" width="12.4" height="9.71" fill="none" stroke="#587cd8" stroke-width="1"/><rect x="1031.77" y="327.46" width="12.94" height="12.94" fill="none" stroke="#587cd8" stroke-width="1"/><rect x="1032.85" y="333.93" width="11.86" height="9.71" fill="none" stroke="#587cd8" stroke-width="1"/><rect x="1031.24" y="340.4" width="14.56" height="7.01" fill="none" stroke="#587cd8" stroke-width="1"/><rect x="1034.47" y="346.88" width="8.09" height="16.18" fill="none" stroke="#587cd8" stroke-width="1"/><rect x="1036.09" y="347.95" width="4.85" height="14.02" fill="none" stroke="#587cd8" stroke-width="1"/><rect x="1035.55" y="355.5" width="9.17" height="7.01" fill="none" stroke="#587cd8" stroke-width="1"/><rect x="1030.7" y="319.37" width="11.86" height="3.24" fill="#587cd8" stroke="#587cd8" stroke-width="1"/><path d="M1044.72 335.55 L1050.65 335.55 L1049.03 341.48 L1045.26 342.02 Z" fill="none" stroke="#587cd8" stroke-width="1"/><path d="M1033.61 363.05 L1026.38 371.68 L1040.4 371.68" fill="none" stroke="#587cd8" stroke-width="1"/><path d="M1045.58 363.05 L1051.19 368.45" fill="none" stroke="#587cd8" stroke-width="1"/><path d="M1038.25 332.85 L1059.7 566.4" fill="none" stroke="#4aaae8" stroke-width="1.2"/><path d="M1047.74 366.29 L1044.5 424.54" fill="none" stroke="#4aaae8" stroke-width="1.2"/><circle cx="1047.74" cy="376.86" r="12.1" fill="none" stroke="#f5e500" stroke-width="1.3"/><line x1="1047.74" y1="365.43" x2="1036.09" y2="377.08" stroke="#f5e500" stroke-width="1.2"/><line x1="1047.74" y1="365.43" x2="1038.79" y2="383.01" stroke="#f5e500" stroke-width="1.2"/><line x1="1047.74" y1="365.43" x2="1047.41" y2="388.4" stroke="#f5e500" stroke-width="1.2"/><line x1="1047.74" y1="365.43" x2="1055.5" y2="383.55" stroke="#f5e500" stroke-width="1.2"/><line x1="1047.74" y1="365.43" x2="1059.6" y2="377.08" stroke="#f5e500" stroke-width="1.2"/><line x1="1047.74" y1="365.43" x2="1051.19" y2="366.29" stroke="#f5e500" stroke-width="1.2"/><rect x="1037.3" y="418.9" width="13.4" height="13.4" fill="none" stroke="#f5e500" stroke-width="1.3"/><rect x="930.37" y="426.74" width="325.27" height="234.86" fill="none" stroke="#f0f060" stroke-width="1.2"/><rect x="940.37" y="436.56" width="56.03" height="100.78" rx="0.8" fill="none" stroke="#ee82ee" stroke-width="1.2"/><rect x="1189.24" y="436.56" width="56.39" height="100.78" rx="0.8" fill="none" stroke="#ee82ee" stroke-width="1.2"/><path d="M997.31 440.56 L1002.77 440.56 L1002.77 436.56 L1029.15 436.56 L1029.15 426.74" fill="none" stroke="#ee82ee" stroke-width="1.2"/><path d="M1059.71 426.74 L1059.71 436.56 L1087.36 436.56 L1087.36 485.13 L1043.34 485.13 L1043.34 488.59 L1087.36 488.59 L1087.36 661.05" fill="none" stroke="#ee82ee" stroke-width="1.2"/><path d="M940.37 661.05 L940.37 543.71 L1002.77 543.71 L1002.77 462.39 L997.31 462.39" fill="none" stroke="#ee82ee" stroke-width="1.2"/><path d="M1097.37 661.05 L1097.37 488.59 L1142.85 488.59 L1142.85 485.13 L1097.37 485.13 L1097.37 436.56 L1125.57 436.56 L1125.57 426.74" fill="none" stroke="#ee82ee" stroke-width="1.2"/><path d="M1156.49 426.74 L1156.49 436.56 L1182.32 436.56 L1182.32 440.56 L1187.78 440.56" fill="none" stroke="#ee82ee" stroke-width="1.2"/><path d="M1187.78 462.39 L1182.32 462.39 L1182.32 543.71 L1245.63 543.71 L1245.63 661.05" fill="none" stroke="#ee82ee" stroke-width="1.2"/><rect x="1009.14" y="539.53" width="9.64" height="9.28" fill="none" stroke="#ee82ee" stroke-width="1.2"/><rect x="1167.04" y="539.53" width="8.91" height="9.28" fill="none" stroke="#ee82ee" stroke-width="1.2"/><rect x="1009.14" y="651.59" width="9.64" height="9.1" fill="none" stroke="#ee82ee" stroke-width="1.2"/><rect x="1167.04" y="651.59" width="8.91" height="9.1" fill="none" stroke="#ee82ee" stroke-width="1.2"/><line x1="1029.15" y1="436.01" x2="1059.71" y2="436.01" stroke="#f58080" stroke-width="1.8"/><line x1="1125.57" y1="436.01" x2="1156.49" y2="436.01" stroke="#f58080" stroke-width="1.8"/><rect x="996.41" y="440.56" width="1.64" height="21.83" fill="#f58080" stroke="#f58080" stroke-width="1.2"/><rect x="1187.42" y="440.56" width="1.82" height="21.83" fill="none" stroke="#f58080" stroke-width="1.2"/><path d="M1070.08 488.59 L1070.08 627.76 L1087.36 627.76" fill="none" stroke="#90ee70" stroke-width="1.2"/><path d="M1072.81 488.59 L1072.81 626.3 L1087.36 626.3" fill="none" stroke="#90ee70" stroke-width="1.2"/><path d="M1115.02 488.59 L1115.02 627.76 L1097.37 627.76" fill="none" stroke="#90ee70" stroke-width="1.2"/><path d="M1112.47 488.59 L1112.47 626.3 L1097.37 626.3" fill="none" stroke="#90ee70" stroke-width="1.2"/><line x1="940.37" y1="658.5" x2="1009.14" y2="658.5" stroke="#8ec8f0" stroke-width="1"/><line x1="940.37" y1="659.59" x2="1009.14" y2="659.59" stroke="#ffffff" stroke-width="1.5"/><line x1="940.37" y1="660.68" x2="1009.14" y2="660.68" stroke="#8ec8f0" stroke-width="1"/><line x1="1018.78" y1="658.5" x2="1087.36" y2="658.5" stroke="#8ec8f0" stroke-width="1"/><line x1="1018.78" y1="659.59" x2="1087.36" y2="659.59" stroke="#ffffff" stroke-width="1.5"/><line x1="1018.78" y1="660.68" x2="1087.36" y2="660.68" stroke="#8ec8f0" stroke-width="1"/><line x1="1097.37" y1="658.5" x2="1167.04" y2="658.5" stroke="#8ec8f0" stroke-width="1"/><line x1="1097.37" y1="659.59" x2="1167.04" y2="659.59" stroke="#ffffff" stroke-width="1.5"/><line x1="1097.37" y1="660.68" x2="1167.04" y2="660.68" stroke="#8ec8f0" stroke-width="1"/><line x1="1175.96" y1="658.5" x2="1245.63" y2="658.5" stroke="#8ec8f0" stroke-width="1"/><line x1="1175.96" y1="659.59" x2="1245.63" y2="659.59" stroke="#ffffff" stroke-width="1.5"/><line x1="1175.96" y1="660.68" x2="1245.63" y2="660.68" stroke="#8ec8f0" stroke-width="1"/><line x1="930.37" y1="560.45" x2="1008.78" y2="560.45" stroke="#0000c8" stroke-width="1.2"/><path d="M989.49 560.45 L989.49 609.56" fill="none" stroke="#0000c8" stroke-width="1.2"/><path d="M989.49 609.56 L1038.79 609.56" fill="none" stroke="#c00000" stroke-width="1.2"/><line x1="1038.79" y1="590.1" x2="1038.79" y2="669.23" stroke="#c00000" stroke-width="1.2"/><path d="M895 560.1 L930.2 567.4 L930.2 552.8 Z" fill="#0000cc"/><path d="M1039 701.6 L1044.8 669.2 L1033.2 669.2 Z" fill="#c00000"/><text x="891.5" y="561" font-size="15" fill="#0000c8" font-weight="bold" text-anchor="middle">z</text><text x="1041.4" y="710.5" font-size="15" fill="#c80000" font-weight="bold" text-anchor="middle">x</text><rect x="1028.2" y="549.5" width="21.2" height="21.2" fill="none" stroke="#f5e500" stroke-width="1.3"/><path d="M1038.8 547.3 L1051.6 560.1 L1038.8 572.9 L1026 560.1 Z" fill="none" stroke="#ffffff" stroke-width="1.1"/><line x1="1026" y1="560.1" x2="1051.6" y2="560.1" stroke="#ffffff" stroke-width="1.1"/><line x1="1038.8" y1="547.3" x2="1038.8" y2="572.9" stroke="#ffffff" stroke-width="1.1"/><rect x="1053.4" y="561" width="13.2" height="13.2" fill="none" stroke="#587cd8" stroke-width="1.2"/><rect x="1028.4" y="591.9" width="13.2" height="13.2" fill="none" stroke="#587cd8" stroke-width="1.2"/><line x1="1034.6" y1="599.2" x2="932.6" y2="765" stroke="#4aaae8" stroke-width="1.2"/><line x1="463.2" y1="715.8" x2="463.2" y2="739.2" stroke="#009000" stroke-width="1.1"/><line x1="463.2" y1="739.2" x2="488.6" y2="739.2" stroke="#c00000" stroke-width="1.1"/><text x="467.5" y="714" font-size="15" fill="#00a000" font-weight="bold" text-anchor="middle">y</text><text x="467.5" y="739.5" font-size="15" fill="#0000c8" font-weight="bold" text-anchor="middle">z</text><text x="492" y="739.5" font-size="15" fill="#c80000" font-weight="bold" text-anchor="middle">x</text></svg></div>
<div id="vp_front" class="p" style="left:1353px;top:186px;width:912px;height:581px;"><svg width="912" height="581" viewBox="1353 186 912 581"><rect x="1353" y="186" width="912" height="581" fill="#353535"/><text x="1359" y="210" font-size="16.5" fill="#dcdcdc" textLength="26.3" lengthAdjust="spacing">[+]</text><text x="1392.6" y="210" font-size="16.5" fill="#dcdcdc" textLength="56.6" lengthAdjust="spacingAndGlyphs">[Front ]</text><text x="1457.2" y="210" font-size="16.5" fill="#dcdcdc" textLength="82.9" lengthAdjust="spacingAndGlyphs">[Standard ]</text><text x="1546.2" y="210" font-size="16.5" fill="#dcdcdc" textLength="93.8" lengthAdjust="spacingAndGlyphs">[Wireframe ]</text><path d="M1653.3 197 L1671.8 197 L1664.5 205.6 L1664.5 214 L1660.6 211.4 L1660.6 205.6 Z" fill="#5e5e5e"/><line x1="1355.36" y1="543.06" x2="2264.64" y2="543.06" stroke="#9a4e14" stroke-width="1.1"/><line x1="1355.36" y1="558.02" x2="2264.64" y2="558.02" stroke="#9a4e14" stroke-width="1.1"/><line x1="1638.37" y1="288.35" x2="1638.37" y2="526.89" stroke="#ee82ee" stroke-width="1.1"/><line x1="1662.23" y1="288.35" x2="1662.23" y2="526.89" stroke="#ee82ee" stroke-width="1.1"/><line x1="1796.05" y1="288.35" x2="1796.05" y2="526.89" stroke="#ee82ee" stroke-width="1.1"/><line x1="1811.82" y1="288.35" x2="1811.82" y2="526.89" stroke="#ee82ee" stroke-width="1.1"/><line x1="1874.49" y1="288.35" x2="1874.49" y2="526.89" stroke="#ee82ee" stroke-width="1.1"/><line x1="1907.24" y1="288.35" x2="1907.24" y2="526.89" stroke="#ee82ee" stroke-width="1.1"/><line x1="1946.45" y1="288.35" x2="1946.45" y2="526.89" stroke="#ee82ee" stroke-width="1.1"/><line x1="2013.16" y1="288.35" x2="2013.16" y2="526.89" stroke="#ee82ee" stroke-width="1.1"/><line x1="2037.42" y1="288.35" x2="2037.42" y2="526.89" stroke="#ee82ee" stroke-width="1.1"/><line x1="2104.13" y1="288.35" x2="2104.13" y2="526.89" stroke="#ee82ee" stroke-width="1.1"/><line x1="2143.35" y1="288.35" x2="2143.35" y2="526.89" stroke="#ee82ee" stroke-width="1.1"/><line x1="2176.1" y1="288.35" x2="2176.1" y2="526.89" stroke="#ee82ee" stroke-width="1.1"/><line x1="2239.57" y1="288.35" x2="2239.57" y2="526.89" stroke="#ee82ee" stroke-width="1.1"/><line x1="2251.7" y1="288.35" x2="2251.7" y2="526.89" stroke="#ee82ee" stroke-width="1.1"/><line x1="2255.74" y1="288.35" x2="2255.74" y2="526.89" stroke="#ee82ee" stroke-width="1.1"/><line x1="1799.69" y1="288.35" x2="1799.69" y2="526.89" stroke="#f58080" stroke-width="1.1"/><rect x="1662.23" y="288.35" width="164.96" height="238.54" fill="none" stroke="#f4f4f4" stroke-width="1.1"/><rect x="1666.27" y="292.4" width="157.68" height="231.26" rx="1" fill="none" stroke="#f4f4f4" stroke-width="1.1"/><rect x="1847.4" y="288.35" width="165.76" height="238.54" fill="none" stroke="#f4f4f4" stroke-width="1.1"/><rect x="1851.44" y="292.4" width="158.49" height="231.26" rx="1" fill="none" stroke="#f4f4f4" stroke-width="1.1"/><rect x="2037.42" y="288.35" width="164.96" height="238.54" fill="none" stroke="#f4f4f4" stroke-width="1.1"/><rect x="2041.46" y="292.4" width="157.68" height="231.26" rx="1" fill="none" stroke="#f4f4f4" stroke-width="1.1"/><path d="M2265.85 288.35 L2222.19 288.35 L2222.19 526.89 L2265.85 526.89" fill="none" stroke="#f4f4f4" stroke-width="1.1"/><path d="M2265.85 292.4 L2226.23 292.4 L2226.23 523.66 L2265.85 523.66" fill="none" stroke="#f4f4f4" stroke-width="1.1"/><path d="M2265.85 272.18 L1638.37 272.18 L1638.37 288.35 L2265.85 288.35" fill="none" stroke="#f0f060" stroke-width="1.2"/><path d="M2265.85 526.89 L1638.37 526.89 L1638.37 542.66" fill="none" stroke="#f0f060" stroke-width="1.2"/><rect x="1976.78" y="327.57" width="36.39" height="63.88" fill="none" stroke="#90ee70" stroke-width="1.2"/><rect x="2037.42" y="327.57" width="36.39" height="63.88" fill="none" stroke="#90ee70" stroke-width="1.2"/><rect x="1973.54" y="463.01" width="39.62" height="56.6" fill="none" stroke="#90ee70" stroke-width="1.2"/><rect x="2037.42" y="463.01" width="40.43" height="56.6" fill="none" stroke="#90ee70" stroke-width="1.2"/><line x1="1897.53" y1="186.06" x2="1897.53" y2="258.84" stroke="#009000" stroke-width="1.2"/><line x1="1847.4" y1="239.43" x2="1897.53" y2="239.43" stroke="#009000" stroke-width="1.2"/><line x1="1847.4" y1="239.43" x2="1847.4" y2="288.35" stroke="#0000c8" stroke-width="1.2"/><line x1="1784.73" y1="288.35" x2="1866.81" y2="288.35" stroke="#0000c8" stroke-width="1.2"/><path d="M1752.39 288.35 L1787.56 294.95 L1787.56 281.75 Z" fill="#0000cc"/><text x="1750.37" y="289.16" font-size="15" fill="#0000c8" font-weight="bold" text-anchor="middle">z</text><rect x="1886.23" y="277.45" width="21.8" height="21.8" fill="none" stroke="#f5e500" stroke-width="1.3"/><path d="M1897.13 275.35 L1910.13 288.35 L1897.13 301.35 L1884.13 288.35 Z" fill="none" stroke="#ffffff" stroke-width="1.1"/><line x1="1884.13" y1="288.35" x2="1910.13" y2="288.35" stroke="#ffffff" stroke-width="1.1"/><line x1="1897.13" y1="275.35" x2="1897.13" y2="301.35" stroke="#ffffff" stroke-width="1.1"/><ellipse cx="1918.15" cy="194.15" rx="12.2" ry="5.6" fill="none" stroke="#f5e500" stroke-width="1.3"/><line x1="1906.83" y1="188.89" x2="1906.83" y2="194.15" stroke="#f5e500" stroke-width="1.2"/><line x1="1929.47" y1="188.89" x2="1929.47" y2="194.15" stroke="#f5e500" stroke-width="1.2"/><path d="M1918.96 196.17 L1916.53 252.77 L1910.07 491.31" fill="none" stroke="#4aaae8" stroke-width="1.2"/><rect x="1903.27" y="484.51" width="13.6" height="13.6" fill="none" stroke="#f5e500" stroke-width="1.3"/><ellipse cx="1484.49" cy="243.56" rx="5.31" ry="12.06" fill="none" stroke="#587cd8" stroke-width="1"/><ellipse cx="1475.32" cy="243.56" rx="5.98" ry="12.06" fill="none" stroke="#587cd8" stroke-width="1"/><line x1="1475.32" y1="231.5" x2="1484.49" y2="231.5" stroke="#587cd8" stroke-width="1"/><line x1="1475.32" y1="255.62" x2="1484.49" y2="255.62" stroke="#587cd8" stroke-width="1"/><line x1="1481.79" y1="242.11" x2="1481.79" y2="247.9" stroke="#587cd8" stroke-width="1"/><ellipse cx="1463.74" cy="253.21" rx="5.6" ry="12.06" fill="none" stroke="#587cd8" stroke-width="1"/><ellipse cx="1472.42" cy="253.21" rx="5.31" ry="11.58" fill="none" stroke="#587cd8" stroke-width="1"/><line x1="1463.74" y1="241.15" x2="1472.42" y2="241.63" stroke="#587cd8" stroke-width="1"/><line x1="1463.74" y1="265.27" x2="1472.42" y2="264.79" stroke="#587cd8" stroke-width="1"/><line x1="1470.01" y1="236.32" x2="1478.21" y2="236.32" stroke="#587cd8" stroke-width="0.8"/><line x1="1470.01" y1="241.15" x2="1478.21" y2="241.15" stroke="#587cd8" stroke-width="0.8"/><line x1="1470.01" y1="245.97" x2="1478.21" y2="245.97" stroke="#587cd8" stroke-width="0.8"/><line x1="1470.01" y1="250.8" x2="1478.21" y2="250.8" stroke="#587cd8" stroke-width="0.8"/><line x1="1458.43" y1="245.97" x2="1466.63" y2="245.97" stroke="#587cd8" stroke-width="0.8"/><line x1="1458.43" y1="250.8" x2="1466.63" y2="250.8" stroke="#587cd8" stroke-width="0.8"/><line x1="1458.43" y1="256.59" x2="1466.63" y2="256.59" stroke="#587cd8" stroke-width="0.8"/><line x1="1458.43" y1="261.41" x2="1466.63" y2="261.41" stroke="#587cd8" stroke-width="0.8"/><path d="M1466.15 266.24 L1467.6 272.99 L1486.42 275.4 L1486.42 259.48 L1479.66 257.55" fill="none" stroke="#587cd8" stroke-width="1"/><ellipse cx="1472.91" cy="258.52" rx="4.34" ry="3.09" fill="none" stroke="#587cd8" stroke-width="1"/><ellipse cx="1473.39" cy="258.71" rx="2.7" ry="1.74" fill="none" stroke="#587cd8" stroke-width="1"/><rect x="1486.42" y="258.03" width="24.61" height="18.82" fill="none" stroke="#587cd8" stroke-width="1"/><rect x="1488.35" y="263.34" width="12.55" height="8.69" fill="none" stroke="#587cd8" stroke-width="1"/><line x1="1486.42" y1="258.03" x2="1488.35" y2="263.34" stroke="#587cd8" stroke-width="1"/><line x1="1511.03" y1="258.03" x2="1500.89" y2="263.34" stroke="#587cd8" stroke-width="1"/><line x1="1486.42" y1="276.85" x2="1488.35" y2="272.03" stroke="#587cd8" stroke-width="1"/><line x1="1511.03" y1="276.85" x2="1500.89" y2="272.03" stroke="#587cd8" stroke-width="1"/><ellipse cx="1491.24" cy="267.2" rx="2.9" ry="3.67" fill="none" stroke="#587cd8" stroke-width="1"/><ellipse cx="1495.1" cy="267.68" rx="2.9" ry="3.67" fill="none" stroke="#587cd8" stroke-width="1"/><line x1="1477.73" y1="264.31" x2="1883.79" y2="336.87" stroke="#4aaae8" stroke-width="1.2"/><rect x="1881.23" y="331.48" width="13.2" height="13.2" fill="none" stroke="#587cd8" stroke-width="1.2"/><rect x="1886.62" y="385.39" width="12.53" height="21.02" fill="none" stroke="#587cd8" stroke-width="1"/><rect x="1888.23" y="388.22" width="9.7" height="12.13" fill="none" stroke="#587cd8" stroke-width="1"/><rect x="1883.79" y="404.39" width="20.22" height="21.43" fill="none" stroke="#587cd8" stroke-width="1"/><rect x="1885.81" y="408.43" width="16.17" height="14.15" fill="none" stroke="#587cd8" stroke-width="1"/><rect x="1882.57" y="406.41" width="28.3" height="17.38" fill="none" stroke="#587cd8" stroke-width="1"/><circle cx="1893.89" cy="415.71" r="4.5" fill="none" stroke="#587cd8" stroke-width="1"/><circle cx="1893.89" cy="415.71" r="7.5" fill="none" stroke="#587cd8" stroke-width="1"/><line x1="1893.89" y1="417.73" x2="1946.45" y2="383.36" stroke="#4aaae8" stroke-width="1.2"/><rect x="1940.26" y="376.36" width="13.2" height="13.2" fill="none" stroke="#587cd8" stroke-width="1.2"/><ellipse cx="2208.04" cy="258.84" rx="40" ry="3.4" fill="none" stroke="#6e6e6e" stroke-width="1.6"/><rect x="2193.89" y="227.3" width="30.73" height="30.32" fill="#8a8a8a" stroke="#7c7c7c" stroke-width="1"/><text x="2209.25" y="245.9" font-size="7.5" fill="#6c7078" textLength="22" lengthAdjust="spacingAndGlyphs" text-anchor="middle">FRONT</text><line x1="1379.22" y1="715.7" x2="1379.22" y2="739.15" stroke="#0000c8" stroke-width="1.1"/><line x1="1379.22" y1="739.15" x2="1404.69" y2="739.15" stroke="#c00000" stroke-width="1.1"/><text x="1383.26" y="714.49" font-size="15" fill="#0000c8" font-weight="bold" text-anchor="middle">z</text><text x="1383.26" y="739.55" font-size="15" fill="#00a000" font-weight="bold" text-anchor="middle">y</text><text x="1408.73" y="739.55" font-size="15" fill="#c80000" font-weight="bold" text-anchor="middle">x</text></svg></div>
<div id="vp_left" class="p" style="left:437px;top:771px;width:912px;height:582px;"><svg width="912" height="582" viewBox="437 771 912 582"><rect x="437" y="771" width="912" height="582" fill="#86712a"/><rect x="439" y="773" width="908" height="578" fill="#353535"/><text x="443.3" y="794.4" font-size="16.5" fill="#dcdcdc" textLength="26.3" lengthAdjust="spacing">[+]</text><text x="476.5" y="794.4" font-size="16.5" fill="#dcdcdc" textLength="45.7" lengthAdjust="spacingAndGlyphs">[Left ]</text><text x="529.9" y="794.4" font-size="16.5" fill="#dcdcdc" textLength="82.9" lengthAdjust="spacingAndGlyphs">[Standard ]</text><text x="619.2" y="794.4" font-size="16.5" fill="#dcdcdc" textLength="93" lengthAdjust="spacingAndGlyphs">[Wireframe ]</text><path d="M726 783 L744.5 783 L737.2 791.6 L737.2 800 L733.3 797.4 L733.3 791.6 Z" fill="#5e5e5e"/><line x1="438.9" y1="1065.28" x2="1347.07" y2="1065.28" stroke="#9a4e14" stroke-width="1.1"/><line x1="438.9" y1="1073.37" x2="1347.07" y2="1073.37" stroke="#9a4e14" stroke-width="1.1"/><rect x="723.15" y="933.87" width="273.75" height="6.87" fill="none" stroke="#f0f060" stroke-width="1.2"/><rect x="723.15" y="1058.01" width="273.75" height="6.47" fill="none" stroke="#f0f060" stroke-width="1.2"/><line x1="723.96" y1="940.74" x2="723.96" y2="1058.01" stroke="#ee82ee" stroke-width="1.1"/><line x1="734.07" y1="940.74" x2="734.07" y2="1058.01" stroke="#ee82ee" stroke-width="1.1"/><line x1="740.14" y1="940.74" x2="740.14" y2="1058.01" stroke="#ee82ee" stroke-width="1.1"/><line x1="764.4" y1="940.74" x2="764.4" y2="1058.01" stroke="#ee82ee" stroke-width="1.1"/><line x1="791.89" y1="940.74" x2="791.89" y2="1058.01" stroke="#ee82ee" stroke-width="1.1"/><line x1="795.94" y1="940.74" x2="795.94" y2="1058.01" stroke="#ee82ee" stroke-width="1.1"/><line x1="852.55" y1="940.74" x2="852.55" y2="1058.01" stroke="#ee82ee" stroke-width="1.1"/><line x1="855.78" y1="940.74" x2="855.78" y2="1058.01" stroke="#ee82ee" stroke-width="1.1"/><line x1="859.42" y1="940.74" x2="859.42" y2="1058.01" stroke="#ee82ee" stroke-width="1.1"/><line x1="862.66" y1="940.74" x2="862.66" y2="1058.01" stroke="#ee82ee" stroke-width="1.1"/><line x1="865.49" y1="940.74" x2="865.49" y2="1058.01" stroke="#ee82ee" stroke-width="1.1"/><line x1="986.79" y1="940.74" x2="986.79" y2="1058.01" stroke="#ee82ee" stroke-width="1.1"/><line x1="996.09" y1="940.74" x2="996.09" y2="1058.01" stroke="#ee82ee" stroke-width="1.1"/><line x1="737.31" y1="940.74" x2="737.31" y2="1058.01" stroke="#f58080" stroke-width="1.1"/><line x1="994.47" y1="940.74" x2="994.47" y2="1058.01" stroke="#ffffff" stroke-width="1.2"/><rect x="795.94" y="960.15" width="161.74" height="31.54" fill="none" stroke="#90ee70" stroke-width="1.2"/><rect x="795.94" y="1026.06" width="161.74" height="28.3" fill="none" stroke="#90ee70" stroke-width="1.2"/><line x1="878.43" y1="832.78" x2="878.43" y2="910.42" stroke="#009000" stroke-width="1.2"/><line x1="878.43" y1="891.41" x2="928.16" y2="891.41" stroke="#009000" stroke-width="1.2"/><line x1="928.16" y1="891.41" x2="928.16" y2="941.15" stroke="#c00000" stroke-width="1.2"/><line x1="909.16" y1="941.15" x2="988" y2="941.15" stroke="#c00000" stroke-width="1.2"/><path d="M878.83 796.39 L871.63 833.59 L886.03 833.59 Z" fill="#009000"/><path d="M1026.82 941.15 L988 933.95 L988 948.35 Z" fill="#c40000"/><text x="881.66" y="789.52" font-size="15" fill="#00a000" font-weight="bold" text-anchor="middle">y</text><text x="1031.27" y="941.55" font-size="15" fill="#c80000" font-weight="bold" text-anchor="middle">x</text><rect x="867.63" y="930.35" width="21.6" height="21.6" fill="none" stroke="#f5e500" stroke-width="1.3"/><path d="M878.43 928.15 L891.43 941.15 L878.43 954.15 L865.43 941.15 Z" fill="none" stroke="#ffffff" stroke-width="1.1"/><line x1="865.43" y1="941.15" x2="891.43" y2="941.15" stroke="#ffffff" stroke-width="1.1"/><line x1="878.43" y1="928.15" x2="878.43" y2="954.15" stroke="#ffffff" stroke-width="1.1"/><path d="M651.58 882.52 L674.63 903.54 L652.39 913.65 Z" fill="none" stroke="#f5e500" stroke-width="1.3"/><path d="M651.58 882.52 L664.52 909.61" fill="none" stroke="#f5e500" stroke-width="1.2"/><path d="M651.58 882.52 L657.25 912.84" fill="none" stroke="#f5e500" stroke-width="1.2"/><path d="M651.58 882.52 L670.59 906.37" fill="none" stroke="#f5e500" stroke-width="1.2"/><line x1="657.25" y1="895.46" x2="721.94" y2="1039.81" stroke="#4aaae8" stroke-width="1.2"/><rect x="715.04" y="1033.31" width="13.4" height="13.4" fill="none" stroke="#f5e500" stroke-width="1.3"/><g transform="translate(613.1 1004.3) rotate(-3.45) scale(1 1) rotate(3.45)"><circle cx="-1.2" cy="-20.5" r="12.1" fill="none" stroke="#587cd8" stroke-width="1.1"/><circle cx="-20.9" cy="-7.2" r="12.1" fill="none" stroke="#587cd8" stroke-width="1.1"/><path d="M-14.5 3.2 L-9.2 9.2 L12.9 8 L15.3 4 L15.3 -4.8 L8 -9.7 L-6.8 -9.7 Z" fill="none" stroke="#587cd8" stroke-width="1.1"/><line x1="-6.8" y1="-9.7" x2="-14.5" y2="3.2" stroke="#587cd8" stroke-width="2"/><circle cx="4.8" cy="-6.4" r="2.1" fill="none" stroke="#587cd8" stroke-width="1"/><circle cx="8.8" cy="-4.8" r="2.1" fill="none" stroke="#587cd8" stroke-width="1"/><rect x="15.3" y="-4.8" width="8" height="8.8" fill="none" stroke="#587cd8" stroke-width="1"/><rect x="23.3" y="-6.4" width="8.1" height="9.2" fill="none" stroke="#587cd8" stroke-width="1"/><line x1="15.3" y1="-2" x2="31.4" y2="-2.6" stroke="#587cd8" stroke-width="1"/><line x1="15.3" y1="1.4" x2="31.4" y2="0.4" stroke="#587cd8" stroke-width="1"/><line x1="26" y1="-6.4" x2="26" y2="2.8" stroke="#587cd8" stroke-width="1"/><line x1="28.6" y1="-6.4" x2="28.6" y2="2.8" stroke="#587cd8" stroke-width="1"/><path d="M31.4 -6.4 L39.4 -12.1 L40.2 6.4 L31.4 2.8 Z" fill="none" stroke="#587cd8" stroke-width="1.1"/><line x1="31.4" y1="-6.4" x2="38" y2="-11" stroke="#587cd8" stroke-width="2"/><line x1="31.4" y1="2.8" x2="39" y2="5.8" stroke="#587cd8" stroke-width="2"/></g><line x1="613.98" y1="1003.82" x2="886.92" y2="987.25" stroke="#4aaae8" stroke-width="1.2"/><rect x="880.92" y="980.24" width="13.2" height="13.2" fill="none" stroke="#587cd8" stroke-width="1.2"/><g transform="translate(1251.64 929.83) rotate(-6.2) scale(-1 1) rotate(3.45)"><circle cx="-1.2" cy="-20.5" r="12.1" fill="none" stroke="#587cd8" stroke-width="1.1"/><circle cx="-20.9" cy="-7.2" r="12.1" fill="none" stroke="#587cd8" stroke-width="1.1"/><path d="M-14.5 3.2 L-9.2 9.2 L12.9 8 L15.3 4 L15.3 -4.8 L8 -9.7 L-6.8 -9.7 Z" fill="none" stroke="#587cd8" stroke-width="1.1"/><line x1="-6.8" y1="-9.7" x2="-14.5" y2="3.2" stroke="#587cd8" stroke-width="2"/><circle cx="4.8" cy="-6.4" r="2.1" fill="none" stroke="#587cd8" stroke-width="1"/><circle cx="8.8" cy="-4.8" r="2.1" fill="none" stroke="#587cd8" stroke-width="1"/><rect x="15.3" y="-4.8" width="8" height="8.8" fill="none" stroke="#587cd8" stroke-width="1"/><rect x="23.3" y="-6.4" width="8.1" height="9.2" fill="none" stroke="#587cd8" stroke-width="1"/><line x1="15.3" y1="-2" x2="31.4" y2="-2.6" stroke="#587cd8" stroke-width="1"/><line x1="15.3" y1="1.4" x2="31.4" y2="0.4" stroke="#587cd8" stroke-width="1"/><line x1="26" y1="-6.4" x2="26" y2="2.8" stroke="#587cd8" stroke-width="1"/><line x1="28.6" y1="-6.4" x2="28.6" y2="2.8" stroke="#587cd8" stroke-width="1"/><path d="M31.4 -6.4 L39.4 -12.1 L40.2 6.4 L31.4 2.8 Z" fill="none" stroke="#587cd8" stroke-width="1.1"/><line x1="31.4" y1="-6.4" x2="38" y2="-11" stroke="#587cd8" stroke-width="2"/><line x1="31.4" y1="2.8" x2="39" y2="5.8" stroke="#587cd8" stroke-width="2"/></g><line x1="1250.83" y1="929.83" x2="923.31" y2="965.41" stroke="#4aaae8" stroke-width="1.2"/><rect x="917.31" y="958.41" width="13.2" height="13.2" fill="none" stroke="#587cd8" stroke-width="1.2"/><defs><linearGradient id="vcg" x1="0" y1="0" x2="0" y2="1"><stop offset="0" stop-color="#e6e6e6"/><stop offset="1" stop-color="#bebebe"/></linearGradient></defs><ellipse cx="1291.9" cy="844.3" rx="28" ry="2.4" fill="#141414"/><ellipse cx="1291.9" cy="844.1" rx="38.6" ry="3.1" fill="none" stroke="#cfd5de" stroke-width="1"/><rect x="1277.1" y="812.1" width="30.8" height="30.7" fill="url(#vcg)"/><rect x="1283" y="818" width="19" height="18.9" fill="#a9aebb"/><text x="1292.7" y="831" font-size="9.2" fill="#2e3140" textLength="13.8" lengthAdjust="spacingAndGlyphs" font-weight="bold" text-anchor="middle">LEFT</text><path d="M1269.43 824.7 L1273.48 827.53 L1269.43 830.36 Z" fill="#e8e8e8"/><path d="M1315.53 824.7 L1311.48 827.53 L1315.53 830.36 Z" fill="#e8e8e8"/><path d="M1288.84 805.69 L1295.31 805.69 L1292.08 808.93 Z" fill="#e8e8e8"/><path d="M1288.84 849.77 L1295.31 849.77 L1292.08 846.53 Z" fill="#e8e8e8"/><path d="M1258.92 782.24 L1262.96 777.39 L1267.01 782.24 L1266.2 787.09 L1259.73 787.09 Z" fill="#f0f0f0"/><circle cx="1338.17" cy="857.04" r="2.4" fill="none" stroke="#e8e8e8" stroke-width="1.2"/><path d="M1322.3 780.5 l3.8 -3.4 l0.2 2 q6 0.4 9.5 3.6 l-1.6 2.2 q-3.4 -2.4 -7.9 -2.6 l0 2.2 Z" fill="#5b7ed0" stroke="#f6c63a" stroke-width="1" stroke-dasharray="1.4 1"/><path d="M1337.2 784.6 l2.6 -1.2 q4 5.4 4.6 10.6 l2.2 -0.3 l-3.6 4.6 l-3.6 -3.6 l2.2 -0.4 q-1 -5 -4.4 -9.7 Z" fill="#f0f0f8"/><line x1="463.16" y1="1301.83" x2="463.16" y2="1325.28" stroke="#0000c8" stroke-width="1.1"/><line x1="446.17" y1="1325.28" x2="463.16" y2="1325.28" stroke="#009000" stroke-width="1.1"/><text x="467.2" y="1300.62" font-size="15" fill="#0000c8" font-weight="bold" text-anchor="middle">z</text><text x="443.34" y="1325.28" font-size="15" fill="#00a000" font-weight="bold" text-anchor="middle">y</text><text x="467.6" y="1325.69" font-size="15" fill="#c80000" font-weight="bold" text-anchor="middle">x</text></svg></div>
<div id="vp_cam" class="p" style="left:1353px;top:771px;width:912px;height:582px;"><svg width="912" height="582" viewBox="1353 771 912 582"><defs><linearGradient id="cbg" x1="0" y1="0" x2="0" y2="1"><stop offset="0" stop-color="#101010"/><stop offset="0.2" stop-color="#242424"/><stop offset="0.4" stop-color="#333333"/><stop offset="0.58" stop-color="#3b3b3b"/><stop offset="1" stop-color="#3b3b3b"/></linearGradient></defs><rect x="1353" y="771" width="912" height="582" fill="#2f3136"/><rect x="1355" y="773" width="908" height="578" fill="url(#cbg)"/><path d="M1355 1112.8 L1450 1105.8 L1559 1098 Q1850 1082 2143.3 1101.1 L2200 1108.9 L2263 1117.6 L2263 1351 L1355 1351 Z" fill="#8d6122"/><defs><clipPath id="wclip"><path d="M1682.56 1033.19 L1832.78 1029.54 L1832.43 1247.24 L1687.84 1283.52 Z" fill="#000"/><path d="M1850.65 1029.11 L1960.83 1026.43 L1956.86 1216.01 L1849.73 1242.89 Z" fill="#000"/><path d="M1974.79 1026.09 L2060.35 1024.01 L2054.33 1191.54 L1970.49 1212.59 Z" fill="#000"/><path d="M2070.02 1023.77 L2137.65 1022.13 L2130.49 1172.43 L2063.83 1189.16 Z" fill="#000"/></clipPath><filter id="blr" x="-5%" y="-5%" width="110%" height="110%"><feGaussianBlur stdDeviation="0.5"/></filter></defs><g clip-path="url(#wclip)"><path d="M1579.08 1160.92 L1908.29 1118.95 L2130.49 1172.43 L1687.84 1283.52 Z" fill="#bcc2c5" stroke="#bcc2c5" stroke-width="0.6"/><path d="M1675.95 1305.28 L1704.63 1282.23 L1753.43 1284.07 L1728.64 1307.45Z M1656.49 1280.42 L1684.34 1260.92 L1729.21 1262.48 L1704.63 1282.23Z M1753.43 1284.07 L1774.64 1264.06 L1820.65 1265.67 L1802.89 1285.93Z M1640.02 1259.38 L1666.96 1242.67 L1708.49 1244.02 L1684.34 1260.92Z M1729.21 1262.48 L1750.5 1245.37 L1793.01 1246.75 L1774.64 1264.06Z M1820.65 1265.67 L1836.01 1248.14 L1879.52 1249.55 L1867.24 1267.29Z M1625.91 1241.34 L1651.91 1226.87 L1690.56 1228.04 L1666.96 1242.67Z M1708.49 1244.02 L1729.63 1229.22 L1769.13 1230.41 L1750.5 1245.37Z M1793.01 1246.75 L1809.05 1231.62 L1849.42 1232.84 L1836.01 1248.14Z M1879.52 1249.55 L1890.23 1234.07 L1931.5 1235.32 L1923.55 1250.97Z M1613.67 1225.71 L1638.75 1213.05 L1674.9 1214.07 L1651.91 1226.87Z M1690.56 1228.04 L1711.41 1215.11 L1748.29 1216.15 L1729.63 1229.22Z M1769.13 1230.41 L1785.55 1217.21 L1823.2 1218.28 L1809.05 1231.62Z M1849.42 1232.84 L1861.23 1219.35 L1899.66 1220.44 L1890.23 1234.07Z M1931.5 1235.32 L1938.5 1221.54 L1977.74 1222.66 L1973.23 1236.58Z M1602.97 1212.03 L1627.15 1200.86 L1661.09 1201.77 L1638.75 1213.05Z M1674.9 1214.07 L1695.36 1202.68 L1729.96 1203.61 L1711.41 1215.11Z M1748.29 1216.15 L1764.88 1204.54 L1800.15 1205.48 L1785.55 1217.21Z M1823.2 1218.28 L1835.76 1206.43 L1871.72 1207.39 L1861.23 1219.35Z M1899.66 1220.44 L1908.03 1208.36 L1944.7 1209.34 L1938.5 1221.54Z M1977.74 1222.66 L1981.73 1210.32 L2019.13 1211.32 L2017.39 1223.78Z M1593.53 1199.97 L1616.84 1190.04 L1648.84 1190.84 L1627.15 1200.86Z M1661.09 1201.77 L1681.12 1191.66 L1713.69 1192.48 L1695.36 1202.68Z M1729.96 1203.61 L1746.56 1193.31 L1779.74 1194.14 L1764.88 1204.54Z M1800.15 1205.48 L1813.21 1194.99 L1846.99 1195.84 L1835.76 1206.43Z M1871.72 1207.39 L1881.09 1196.7 L1915.5 1197.57 L1908.03 1208.36Z M1944.7 1209.34 L1950.23 1198.44 L1985.29 1199.32 L1981.73 1210.32Z M2019.13 1211.32 L2020.68 1200.22 L2056.41 1201.12 L2056.91 1212.33Z M1585.13 1189.24 L1607.62 1180.35 L1637.88 1181.08 L1616.84 1190.04Z M1648.84 1190.84 L1668.4 1181.81 L1699.17 1182.54 L1681.12 1191.66Z M1713.69 1192.48 L1730.21 1183.28 L1761.52 1184.03 L1746.56 1193.31Z M1779.74 1194.14 L1793.1 1184.78 L1824.96 1185.55 L1813.21 1194.99Z M1846.99 1195.84 L1857.09 1186.31 L1889.51 1187.09 L1881.09 1196.7Z M1915.5 1197.57 L1922.21 1187.87 L1955.2 1188.66 L1950.23 1198.44Z M1985.29 1199.32 L1988.49 1189.45 L2022.07 1190.25 L2020.68 1200.22Z M2056.41 1201.12 L2055.96 1191.06 L2090.15 1191.88 L2092.47 1202.03Z M1577.62 1179.64 L1599.33 1171.64 L1628.03 1172.3 L1607.62 1180.35Z M1637.88 1181.08 L1656.96 1172.95 L1686.13 1173.61 L1668.4 1181.81Z M1699.17 1182.54 L1715.53 1174.28 L1745.18 1174.95 L1730.21 1183.28Z M1761.52 1184.03 L1775.07 1175.63 L1805.2 1176.32 L1793.1 1184.78Z M1824.96 1185.55 L1835.59 1177 L1866.23 1177.7 L1857.09 1186.31Z M1889.51 1187.09 L1897.12 1178.4 L1928.28 1179.11 L1922.21 1187.87Z M1955.2 1188.66 L1959.69 1179.82 L1991.38 1180.54 L1988.49 1189.45Z M2022.07 1190.25 L2023.33 1181.26 L2055.55 1182 L2055.96 1191.06Z M2090.15 1191.88 L2088.06 1182.73 L2120.84 1183.48 L2124.65 1192.7Z M1570.86 1171 L1591.83 1163.77 L1619.12 1164.36 L1599.33 1171.64Z M1628.03 1172.3 L1646.62 1164.95 L1674.34 1165.55 L1656.96 1172.95Z M1686.13 1173.61 L1702.27 1166.15 L1730.42 1166.76 L1715.53 1174.28Z M1745.18 1174.95 L1758.79 1167.37 L1787.38 1167.99 L1775.07 1175.63Z M1805.2 1176.32 L1816.2 1168.61 L1845.25 1169.24 L1835.59 1177Z M1866.23 1177.7 L1874.52 1169.87 L1904.03 1170.51 L1897.12 1178.4Z M1928.28 1179.11 L1933.78 1171.15 L1963.77 1171.8 L1959.69 1179.82Z M1991.38 1180.54 L1993.99 1172.46 L2024.47 1173.11 L2023.33 1181.26Z M2055.55 1182 L2055.19 1173.78 L2086.16 1174.45 L2088.06 1182.73Z M2120.84 1183.48 L2117.39 1175.12 L2148.87 1175.8 L2153.9 1184.23Z M1564.74 1163.18 L1585.01 1156.61 L1611.03 1157.14 L1591.83 1163.77Z M1619.12 1164.36 L1637.24 1157.68 L1663.64 1158.23 L1646.62 1164.95Z M1674.34 1165.55 L1690.24 1158.78 L1717.04 1159.33 L1702.27 1166.15Z M1730.42 1166.76 L1744.04 1159.89 L1771.24 1160.45 L1758.79 1167.37Z M1787.38 1167.99 L1798.64 1161.01 L1826.25 1161.58 L1816.2 1168.61Z M1845.25 1169.24 L1854.07 1162.16 L1882.1 1162.73 L1874.52 1169.87Z M1904.03 1170.51 L1910.34 1163.32 L1938.8 1163.9 L1933.78 1171.15Z M1963.77 1171.8 L1967.48 1164.49 L1996.38 1165.09 L1993.99 1172.46Z M2024.47 1173.11 L2025.5 1165.69 L2054.85 1166.3 L2055.19 1173.78Z M2086.16 1174.45 L2084.43 1166.91 L2114.25 1167.52 L2117.39 1175.12Z M1611.03 1157.14 L1628.68 1151.06 L1653.89 1151.55 L1637.24 1157.68Z M1663.64 1158.23 L1679.28 1152.05 L1704.85 1152.56 L1690.24 1158.78Z M1717.04 1159.33 L1730.6 1153.07 L1756.53 1153.58 L1744.04 1159.89Z M1771.24 1160.45 L1782.65 1154.09 L1808.96 1154.61 L1798.64 1161.01Z M1826.25 1161.58 L1835.46 1155.13 L1862.15 1155.66 L1854.07 1162.16Z M1882.1 1162.73 L1889.03 1156.19 L1916.12 1156.72 L1910.34 1163.32Z M1938.8 1163.9 L1943.4 1157.26 L1970.88 1157.8 L1967.48 1164.49Z M1996.38 1165.09 L1998.56 1158.35 L2026.45 1158.9 L2025.5 1165.69Z M2054.85 1166.3 L2054.55 1159.45 L2082.86 1160.01 L2084.43 1166.91Z M1653.89 1151.55 L1669.24 1145.9 L1693.69 1146.36 L1679.28 1152.05Z M1704.85 1152.56 L1718.3 1146.83 L1743.08 1147.3 L1730.6 1153.07Z M1756.53 1153.58 L1768.04 1147.77 L1793.16 1148.24 L1782.65 1154.09Z M1808.96 1154.61 L1818.46 1148.72 L1843.93 1149.2 L1835.46 1155.13Z M1862.15 1155.66 L1869.58 1149.69 L1895.42 1150.17 L1889.03 1156.19Z M1916.12 1156.72 L1921.43 1150.67 L1947.62 1151.16 L1943.4 1157.26Z M1970.88 1157.8 L1974 1151.66 L2000.57 1152.16 L1998.56 1158.35Z M2026.45 1158.9 L2027.32 1152.67 L2054.27 1153.17 L2054.55 1159.45Z M1693.69 1146.36 L1707.01 1141.1 L1730.74 1141.53 L1718.3 1146.83Z M1743.08 1147.3 L1754.63 1141.96 L1778.67 1142.4 L1768.04 1147.77Z M1793.16 1148.24 L1802.87 1142.84 L1827.23 1143.28 L1818.46 1148.72Z M1843.93 1149.2 L1851.76 1143.72 L1876.45 1144.17 L1869.58 1149.69Z M1895.42 1150.17 L1901.3 1144.62 L1926.32 1145.08 L1921.43 1150.67Z M1947.62 1151.16 L1951.52 1145.53 L1976.88 1145.99 L1974 1151.66Z M2000.57 1152.16 L2002.41 1146.46 L2028.12 1146.92 L2027.32 1152.67Z M1730.74 1141.53 L1742.28 1136.62 L1765.33 1137.02 L1754.63 1141.96Z M1778.67 1142.4 L1788.52 1137.42 L1811.87 1137.83 L1802.87 1142.84Z M1827.23 1143.28 L1835.36 1138.24 L1859 1138.65 L1851.76 1143.72Z M1876.45 1144.17 L1882.8 1139.07 L1906.75 1139.48 L1901.3 1144.62Z M1926.32 1145.08 L1930.86 1139.9 L1955.12 1140.33 L1951.52 1145.53Z M1976.88 1145.99 L1979.54 1140.75 L2004.12 1141.18 L2002.41 1146.46Z M1765.33 1137.02 L1775.27 1132.42 L1797.68 1132.8 L1788.52 1137.42Z M1811.87 1137.83 L1820.22 1133.18 L1842.91 1133.56 L1835.36 1138.24Z M1859 1138.65 L1865.73 1133.94 L1888.7 1134.33 L1882.8 1139.07Z M1906.75 1139.48 L1911.81 1134.71 L1935.06 1135.1 L1930.86 1139.9Z M1955.12 1140.33 L1958.46 1135.5 L1982.01 1135.89 L1979.54 1140.75Z M1797.68 1132.8 L1806.21 1128.49 L1828.01 1128.84 L1820.22 1133.18Z M1842.91 1133.56 L1849.94 1129.2 L1872 1129.56 L1865.73 1133.94Z M1888.7 1134.33 L1894.19 1129.91 L1916.52 1130.28 L1911.81 1134.71Z M1935.06 1135.1 L1938.98 1130.64 L1961.57 1131 L1958.46 1135.5Z M1828.01 1128.84 L1835.28 1124.8 L1856.5 1125.13 L1849.94 1129.2Z M1872 1129.56 L1877.85 1125.46 L1899.32 1125.8 L1894.19 1129.91Z M1916.52 1130.28 L1920.91 1126.13 L1942.63 1126.47 L1938.98 1130.64Z M1856.5 1125.13 L1862.64 1121.32 L1883.32 1121.63 L1877.85 1125.46Z M1899.32 1125.8 L1904.11 1121.94 L1925.02 1122.26 L1920.91 1126.13Z M1883.32 1121.63 L1888.45 1118.04 L1908.6 1118.33 L1904.11 1121.94Z" fill="#404c52" filter="url(#blr)"/><path d="M1884.3 1122.01 L1908.29 1118.95 L1909.64 1017.11 L1885.3 1017.41 Z" fill="#9da1a3" stroke="#9da1a3" stroke-width="0.6"/><path d="M1908.29 1118.95 L1934.79 1125.33 L1936.65 1017.7 L1909.64 1017.11 Z" fill="#687073" stroke="#687073" stroke-width="0.6"/><path d="M1858.98 1125.24 L1884.3 1122.01 L1885.3 1017.41 L1859.59 1017.73 Z" fill="#9da1a3" stroke="#9da1a3" stroke-width="0.6"/><path d="M1934.79 1125.33 L1964.49 1132.48 L1966.98 1018.37 L1936.65 1017.7 Z" fill="#687073" stroke="#687073" stroke-width="0.6"/><path d="M1832.2 1128.65 L1858.98 1125.24 L1859.59 1017.73 L1832.38 1018.06 Z" fill="#9da1a3" stroke="#9da1a3" stroke-width="0.6"/><path d="M1855.57 1125.67 L1873.11 1130.72 L1873.99 1018.24 L1856.12 1017.77 Z" fill="#70787b" stroke="#70787b" stroke-width="0.6"/><path d="M1802.65 1132.42 L1832.2 1128.65 L1832.38 1018.06 L1802.32 1018.43 Z" fill="#e8b1b1" stroke="#e8b1b1" stroke-width="0.6"/><path d="M1964.49 1132.48 L1998 1140.54 L2001.28 1019.13 L1966.98 1018.37 Z" fill="#687073" stroke="#687073" stroke-width="0.6"/><path d="M1873.11 1130.72 L1892.21 1136.21 L1893.48 1018.76 L1873.99 1018.24 Z" fill="#70787b" stroke="#70787b" stroke-width="0.6"/><path d="M1774.08 1136.06 L1802.65 1132.42 L1802.32 1018.43 L1773.22 1018.79 Z" fill="#9da1a3" stroke="#9da1a3" stroke-width="0.6"/><path d="M1974.82 1142.34 L1992.94 1139.33 L1996.1 1019.01 L1977.71 1019.31 Z" fill="#a8acae" stroke="#a8acae" stroke-width="0.6"/><path d="M1892.21 1136.21 L1913.08 1142.22 L1914.8 1019.32 L1893.48 1018.76 Z" fill="#70787b" stroke="#70787b" stroke-width="0.6"/><path d="M1998 1140.54 L2036.1 1149.71 L2040.38 1019.99 L2001.28 1019.13 Z" fill="#687073" stroke="#687073" stroke-width="0.6"/><path d="M1733.25 1141.26 L1763.54 1137.4 L1762.48 1018.93 L1731.58 1019.31 Z" fill="#9da1a3" stroke="#9da1a3" stroke-width="0.6"/><path d="M1763.54 1137.4 L1776.08 1142.5 L1775.21 1019.41 L1762.48 1018.93 Z" fill="#70787b" stroke="#70787b" stroke-width="0.6"/><path d="M1955.85 1145.5 L1974.82 1142.34 L1977.71 1019.31 L1958.44 1019.62 Z" fill="#a8acae" stroke="#a8acae" stroke-width="0.6"/><path d="M1697.62 1145.81 L1733.25 1141.26 L1731.58 1019.31 L1695.21 1019.76 Z" fill="#e8b1b1" stroke="#e8b1b1" stroke-width="0.6"/><path d="M1829.81 1144.69 L1853.14 1141.34 L1853.72 1019.26 L1829.95 1019.59 Z" fill="#a8acae" stroke="#a8acae" stroke-width="0.6"/><path d="M1913.08 1142.22 L1935.99 1148.8 L1938.24 1019.94 L1914.8 1019.32 Z" fill="#70787b" stroke="#70787b" stroke-width="0.6"/><path d="M1935.99 1148.8 L1955.85 1145.5 L1958.44 1019.62 L1938.24 1019.94 Z" fill="#a8acae" stroke="#a8acae" stroke-width="0.6"/><path d="M2036.1 1149.71 L2079.82 1160.24 L2085.35 1020.98 L2040.38 1019.99 Z" fill="#687073" stroke="#687073" stroke-width="0.6"/><path d="M1660.77 1150.5 L1697.62 1145.81 L1695.21 1019.76 L1657.53 1020.22 Z" fill="#9da1a3" stroke="#9da1a3" stroke-width="0.6"/><path d="M1776.08 1142.5 L1789.64 1148.01 L1789 1019.93 L1775.21 1019.41 Z" fill="#70787b" stroke="#70787b" stroke-width="0.6"/><path d="M1935.99 1148.8 L1942.6 1147.7 L1944.97 1019.83 L1938.24 1019.94 Z" fill="#a8acae" stroke="#a8acae" stroke-width="0.6"/><path d="M1930.34 1147.18 L1935.99 1148.8 L1938.24 1019.94 L1932.46 1019.79 Z" fill="#70787b" stroke="#70787b" stroke-width="0.6"/><path d="M1805.29 1148.22 L1829.81 1144.69 L1829.95 1019.59 L1804.96 1019.94 Z" fill="#a8acae" stroke="#a8acae" stroke-width="0.6"/><path d="M1621.34 1155.53 L1660.77 1150.5 L1657.53 1020.22 L1617.18 1020.72 Z" fill="#9da1a3" stroke="#9da1a3" stroke-width="0.6"/><path d="M1579.08 1160.92 L1621.34 1155.53 L1617.18 1020.72 L1573.85 1021.26 Z" fill="#9da1a3" stroke="#9da1a3" stroke-width="0.6"/><path d="M1917.33 1150.19 L1925.55 1152.67 L1927.66 1020.32 L1919.24 1020.08 Z" fill="#80888a" stroke="#80888a" stroke-width="0.6"/><path d="M1925.55 1152.67 L1934.39 1151.18 L1936.66 1020.17 L1927.66 1020.32 Z" fill="#a2a6a8" stroke="#a2a6a8" stroke-width="0.6"/><path d="M1656.69 1151.02 L1667.82 1158.51 L1664.55 1020.99 L1653.36 1020.27 Z" fill="#70787b" stroke="#70787b" stroke-width="0.6"/><path d="M2079.82 1160.24 L2130.49 1172.43 L2137.65 1022.13 L2085.35 1020.98 Z" fill="#687073" stroke="#687073" stroke-width="0.6"/><path d="M1789.64 1148.01 L1804.35 1153.99 L1803.98 1020.49 L1789 1019.93 Z" fill="#70787b" stroke="#70787b" stroke-width="0.6"/><path d="M1768.57 1153.5 L1794.1 1149.83 L1793.54 1020.1 L1767.47 1020.46 Z" fill="#a8acae" stroke="#a8acae" stroke-width="0.6"/><path d="M1741.7 1157.36 L1768.57 1153.5 L1767.47 1020.46 L1740.01 1020.84 Z" fill="#a8acae" stroke="#a8acae" stroke-width="0.6"/><path d="M1739.72 1156.37 L1741.7 1157.36 L1740.01 1020.84 L1738 1020.75 Z" fill="#70787b" stroke="#70787b" stroke-width="0.6"/><path d="M1804.35 1153.99 L1820.35 1160.5 L1820.32 1021.11 L1803.98 1020.49 Z" fill="#70787b" stroke="#70787b" stroke-width="0.6"/><path d="M1667.82 1158.51 L1680.17 1166.82 L1677 1021.78 L1664.55 1020.99 Z" fill="#70787b" stroke="#70787b" stroke-width="0.6"/><path d="M1820.35 1160.5 L1837.84 1167.61 L1838.2 1021.79 L1820.32 1021.11 Z" fill="#70787b" stroke="#70787b" stroke-width="0.6"/><path d="M1680.17 1166.82 L1693.95 1176.1 L1690.92 1022.67 L1677 1021.78 Z" fill="#70787b" stroke="#70787b" stroke-width="0.6"/><path d="M1837.84 1167.61 L1857.03 1175.41 L1857.85 1022.53 L1838.2 1021.79 Z" fill="#70787b" stroke="#70787b" stroke-width="0.6"/><path d="M1693.95 1176.1 L1709.43 1186.51 L1706.59 1023.67 L1690.92 1022.67 Z" fill="#70787b" stroke="#70787b" stroke-width="0.6"/><path d="M1857.03 1175.41 L1878.17 1184.01 L1879.56 1023.35 L1857.85 1022.53 Z" fill="#70787b" stroke="#70787b" stroke-width="0.6"/><path d="M1726.03 1181.65 L1732.03 1185.36 L1729.78 1023.55 L1723.67 1023.19 Z" fill="#80888a" stroke="#80888a" stroke-width="0.6"/><path d="M1732.03 1185.36 L1746.29 1182.95 L1744.42 1023.31 L1729.78 1023.55 Z" fill="#a2a6a8" stroke="#a2a6a8" stroke-width="0.6"/><path d="M1709.43 1186.51 L1719.15 1184.89 L1716.59 1023.51 L1706.59 1023.67 Z" fill="#a8acae" stroke="#a8acae" stroke-width="0.6"/><path d="M1686.73 1190.29 L1719.15 1184.89 L1716.59 1023.51 L1683.25 1024.04 Z" fill="#a8acae" stroke="#a8acae" stroke-width="0.6"/><path d="M1878.17 1184.01 L1901.58 1193.53 L1903.66 1024.26 L1879.56 1023.35 Z" fill="#70787b" stroke="#70787b" stroke-width="0.6"/><path d="M1652.29 1196.02 L1686.73 1190.29 L1683.25 1024.04 L1647.78 1024.61 Z" fill="#a8acae" stroke="#a8acae" stroke-width="0.6"/><path d="M1612.92 1199.07 L1615.63 1202.12 L1609.96 1025.22 L1607.27 1024.93 Z" fill="#70787b" stroke="#70787b" stroke-width="0.6"/><path d="M1615.63 1202.12 L1652.29 1196.02 L1647.78 1024.61 L1609.96 1025.22 Z" fill="#a8acae" stroke="#a8acae" stroke-width="0.6"/><path d="M1901.58 1193.53 L1927.65 1204.13 L1930.58 1025.28 L1903.66 1024.26 Z" fill="#70787b" stroke="#70787b" stroke-width="0.6"/><path d="M1927.65 1204.13 L1956.86 1216.01 L1960.83 1026.43 L1930.58 1025.28 Z" fill="#70787b" stroke="#70787b" stroke-width="0.6"/><path d="M1956.86 1216.01 L1970.49 1212.59 L1974.79 1026.09 L1960.83 1026.43 Z" fill="#a8acae" stroke="#a8acae" stroke-width="0.6"/><path d="M1774.14 1148.8 L1890.53 1198.62 L1890.97 1156.93 L1773.91 1117.76 Z" fill="#6f8f72" stroke="#6f8f72" stroke-width="0.6"/><path d="M1890.53 1198.62 L1914.23 1193.56 L1914.81 1152.94 L1890.97 1156.93 Z" fill="#baeeb3" stroke="#baeeb3" stroke-width="0.6"/><path d="M1773.91 1117.76 L1793.95 1115.56 L1914.81 1152.94 L1890.97 1156.93 Z" fill="#a0c99b" stroke="#a0c99b" stroke-width="0.6"/><path d="M1776.85 1077.97 L1895.42 1103.19 L1895.96 1055.02 L1776.61 1042.33 Z" fill="#6f8f72" stroke="#6f8f72" stroke-width="0.6"/><path d="M1895.42 1103.19 L1915.55 1101.01 L1916.23 1053.91 L1895.96 1055.02 Z" fill="#baeeb3" stroke="#baeeb3" stroke-width="0.6"/><path d="M1776.61 1042.33 L1793.63 1041.73 L1916.23 1053.91 L1895.96 1055.02 Z" fill="#a0c99b" stroke="#a0c99b" stroke-width="0.6"/><path d="M1831.77 1246.83 L1849.06 1242.51 L1849.96 1029.07 L1832.1 1029.5 Z" fill="#a2a6a8" stroke="#a2a6a8" stroke-width="0.6"/><path d="M1820.79 1240.06 L1831.77 1246.83 L1832.1 1029.5 L1820.75 1028.84 Z" fill="#767e81" stroke="#767e81" stroke-width="0.6"/><path d="M2053.54 1191.31 L2063.04 1188.93 L2069.21 1023.75 L2059.54 1023.98 Z" fill="#a2a6a8" stroke="#a2a6a8" stroke-width="0.6"/><path d="M2040.19 1187.28 L2053.54 1191.31 L2059.54 1023.98 L2045.72 1023.6 Z" fill="#767e81" stroke="#767e81" stroke-width="0.6"/></g><defs><linearGradient id="lwg" x1="0" y1="0" x2="1" y2="0.25"><stop offset="0" stop-color="#5e5e5e"/><stop offset="0.5" stop-color="#565656"/><stop offset="1" stop-color="#4c4c4c"/></linearGradient><linearGradient id="cpg" x1="0" y1="0" x2="1" y2="0"><stop offset="0" stop-color="#8e8e8e"/><stop offset="0.45" stop-color="#b2b2b2"/><stop offset="1" stop-color="#9a9a9a"/></linearGradient><linearGradient id="ffg" x1="0" y1="0" x2="1" y2="0"><stop offset="0" stop-color="#a4a4a4"/><stop offset="1" stop-color="#8e8e8e"/></linearGradient></defs><path d="M1562.11 1168.78 L1663.49 1305.93 L1656.24 1015.67 L1555.8 1011.51 Z" fill="url(#lwg)"/><path d="M1556.19 1021.16 L1656.69 1033.82 L1656.24 1015.67 L1555.8 1011.51 Z" fill="#646464" opacity="0.7"/><path d="M1555.8 1011.51 L1910.98 1009.99 L2146.84 1011.58 L1656.24 1015.67 Z" fill="#8a8a8a"/><path d="M1663.49 1305.93 L2138.61 1179.83 L2146.84 1011.58 L1656.24 1015.67Z M1682.56 1033.19 L1832.78 1029.54 L1832.43 1247.24 L1687.84 1283.52Z M1850.65 1029.11 L1960.83 1026.43 L1956.86 1216.01 L1849.73 1242.89Z M1974.79 1026.09 L2060.35 1024.01 L2054.33 1191.54 L1970.49 1212.59Z M2070.02 1023.77 L2137.65 1022.13 L2130.49 1172.43 L2063.83 1189.16Z" fill="url(#ffg)" fill-rule="evenodd"/><path d="M1663.49 1305.93 L1688.17 1299.38 L1682.18 1015.45 L1656.24 1015.67 Z" fill="url(#cpg)"/><defs><filter id="wtex" x="0" y="0" width="100%" height="100%"><feTurbulence type="fractalNoise" baseFrequency="0.09 0.018" numOctaves="3" seed="7"/><feColorMatrix type="matrix" values="0 0 0 0 0.5  0 0 0 0 0.5  0 0 0 0 0.5  1.6 0 0 0 -0.55"/></filter><clipPath id="extclip"><path d="M1562.11 1168.78 L1663.49 1305.93 L2138.61 1179.83 L2146.84 1011.58 L1555.8 1011.51 Z" fill="#000"/></clipPath></defs><g clip-path="url(#extclip)" opacity="0.16"><rect x="1555.8" y="1011.51" width="591.04" height="294.42" filter="url(#wtex)"/></g><path d="M1682.56 1033.19 L1832.78 1029.54 L1832.43 1247.24 L1687.84 1283.52 Z" fill="none" stroke="#8c8c8c" stroke-width="4.4" stroke-linejoin="miter"/><path d="M1682.56 1033.19 L1832.78 1029.54 L1832.43 1247.24 L1687.84 1283.52 Z" fill="none" stroke="#f8f8f8" stroke-width="2.2" stroke-linejoin="miter"/><path d="M1850.65 1029.11 L1960.83 1026.43 L1956.86 1216.01 L1849.73 1242.89 Z" fill="none" stroke="#8c8c8c" stroke-width="4.4" stroke-linejoin="miter"/><path d="M1850.65 1029.11 L1960.83 1026.43 L1956.86 1216.01 L1849.73 1242.89 Z" fill="none" stroke="#f8f8f8" stroke-width="2.2" stroke-linejoin="miter"/><path d="M1974.79 1026.09 L2060.35 1024.01 L2054.33 1191.54 L1970.49 1212.59 Z" fill="none" stroke="#8c8c8c" stroke-width="4.4" stroke-linejoin="miter"/><path d="M1974.79 1026.09 L2060.35 1024.01 L2054.33 1191.54 L1970.49 1212.59 Z" fill="none" stroke="#f8f8f8" stroke-width="2.2" stroke-linejoin="miter"/><path d="M2070.02 1023.77 L2137.65 1022.13 L2130.49 1172.43 L2063.83 1189.16 Z" fill="none" stroke="#8c8c8c" stroke-width="4.4" stroke-linejoin="miter"/><path d="M2070.02 1023.77 L2137.65 1022.13 L2130.49 1172.43 L2063.83 1189.16 Z" fill="none" stroke="#f8f8f8" stroke-width="2.2" stroke-linejoin="miter"/><g opacity="0.85"><line x1="1586.87" y1="1282.58" x2="1616.19" y2="1337.79" stroke="#767c84" stroke-width="0.7"/><line x1="1586.87" y1="1282.58" x2="1718.31" y2="1277.2" stroke="#767c84" stroke-width="0.7"/><line x1="1596.26" y1="1282.19" x2="1625.33" y2="1335.24" stroke="#767c84" stroke-width="0.7"/><line x1="1588.97" y1="1286.52" x2="1720.16" y2="1278.98" stroke="#767c84" stroke-width="0.7"/><line x1="1605.65" y1="1281.81" x2="1634.48" y2="1332.69" stroke="#767c84" stroke-width="0.7"/><line x1="1591.06" y1="1290.46" x2="1722.01" y2="1280.76" stroke="#767c84" stroke-width="0.7"/><line x1="1615.04" y1="1281.42" x2="1643.62" y2="1330.15" stroke="#767c84" stroke-width="0.7"/><line x1="1593.16" y1="1294.41" x2="1723.86" y2="1282.54" stroke="#767c84" stroke-width="0.7"/><line x1="1624.43" y1="1281.04" x2="1652.77" y2="1327.6" stroke="#767c84" stroke-width="0.7"/><line x1="1595.25" y1="1298.35" x2="1725.71" y2="1284.32" stroke="#767c84" stroke-width="0.7"/><line x1="1633.82" y1="1280.66" x2="1661.91" y2="1325.05" stroke="#767c84" stroke-width="0.7"/><line x1="1597.34" y1="1302.3" x2="1727.56" y2="1286.1" stroke="#767c84" stroke-width="0.7"/><line x1="1643.2" y1="1280.27" x2="1671.06" y2="1322.5" stroke="#767c84" stroke-width="0.7"/><line x1="1599.44" y1="1306.24" x2="1729.41" y2="1287.88" stroke="#767c84" stroke-width="0.7"/><line x1="1652.59" y1="1279.89" x2="1680.2" y2="1319.96" stroke="#767c84" stroke-width="0.7"/><line x1="1601.53" y1="1310.18" x2="1731.26" y2="1289.66" stroke="#767c84" stroke-width="0.7"/><line x1="1661.98" y1="1279.5" x2="1689.34" y2="1317.41" stroke="#767c84" stroke-width="0.7"/><line x1="1603.63" y1="1314.13" x2="1733.11" y2="1291.44" stroke="#767c84" stroke-width="0.7"/><line x1="1671.37" y1="1279.12" x2="1698.49" y2="1314.86" stroke="#767c84" stroke-width="0.7"/><line x1="1605.72" y1="1318.07" x2="1734.96" y2="1293.22" stroke="#767c84" stroke-width="0.7"/><line x1="1680.76" y1="1278.74" x2="1707.63" y2="1312.31" stroke="#767c84" stroke-width="0.7"/><line x1="1607.81" y1="1322.01" x2="1736.81" y2="1295" stroke="#767c84" stroke-width="0.7"/><line x1="1690.15" y1="1278.35" x2="1716.78" y2="1309.76" stroke="#767c84" stroke-width="0.7"/><line x1="1609.91" y1="1325.96" x2="1738.66" y2="1296.78" stroke="#767c84" stroke-width="0.7"/><line x1="1699.53" y1="1277.97" x2="1725.92" y2="1307.22" stroke="#767c84" stroke-width="0.7"/><line x1="1612" y1="1329.9" x2="1740.51" y2="1298.56" stroke="#767c84" stroke-width="0.7"/><line x1="1708.92" y1="1277.59" x2="1735.06" y2="1304.67" stroke="#767c84" stroke-width="0.7"/><line x1="1614.1" y1="1333.85" x2="1742.36" y2="1300.34" stroke="#767c84" stroke-width="0.7"/><line x1="1718.31" y1="1277.2" x2="1744.21" y2="1302.12" stroke="#767c84" stroke-width="0.7"/><line x1="1616.19" y1="1337.79" x2="1744.21" y2="1302.12" stroke="#767c84" stroke-width="0.7"/></g><line x1="1600.07" y1="1307.5" x2="1664.08" y2="1292.35" stroke="#101010" stroke-width="1.1"/><line x1="1646.97" y1="1272.32" x2="1683.13" y2="1317.76" stroke="#101010" stroke-width="1.1"/><text x="1359" y="794.4" font-size="16.5" fill="#dcdcdc" textLength="26.3" lengthAdjust="spacing">[+]</text><text x="1392.6" y="794.4" font-size="16.5" fill="#dcdcdc" textLength="101" lengthAdjust="spacingAndGlyphs">[Camera002 ]</text><text x="1501.7" y="794.4" font-size="16.5" fill="#dcdcdc" textLength="82.9" lengthAdjust="spacingAndGlyphs">[Standard ]</text><text x="1591.5" y="794.4" font-size="16.5" fill="#dcdcdc" textLength="133.4" lengthAdjust="spacingAndGlyphs">[Default Shading ]</text><path d="M1738 783 L1756.5 783 L1749.2 791.6 L1749.2 800 L1745.3 797.4 L1745.3 791.6 Z" fill="#5e5e5e"/><line x1="1781.5" y1="913.63" x2="1781.5" y2="992.47" stroke="#009000" stroke-width="1.2"/><line x1="1736.22" y1="971.05" x2="1807.78" y2="971.05" stroke="#009000" stroke-width="1.2"/><line x1="1736.22" y1="971.05" x2="1736.22" y2="1022.8" stroke="#0000c8" stroke-width="1.2"/><line x1="1807.78" y1="971.05" x2="1807.78" y2="1024.82" stroke="#c00000" stroke-width="1.2"/><line x1="1677.59" y1="1024.82" x2="1756.43" y2="1024.82" stroke="#0000c8" stroke-width="1.2"/><line x1="1756.43" y1="1024.82" x2="1839.31" y2="1024.82" stroke="#c00000" stroke-width="1.2"/><path d="M1781.5 875.23 L1773.9 912.83 L1789.1 912.83 Z" fill="#009000"/><path d="M1638.37 1024.82 L1678.8 1032.02 L1678.8 1017.62 Z" fill="#0000cc"/><path d="M1872.87 1024.82 L1837.9 1017.03 L1838.3 1034.22 Z" fill="#c40000"/><text x="1784.73" y="867.14" font-size="15" fill="#00a000" font-weight="bold" text-anchor="middle">y</text><text x="1633.93" y="1023.6" font-size="15" fill="#0000c8" font-weight="bold" text-anchor="middle">z</text><text x="1876.91" y="1025.22" font-size="15" fill="#c80000" font-weight="bold" text-anchor="middle">x</text><rect x="1771.39" y="1012.28" width="21.43" height="21.43" fill="none" stroke="#f5e500" stroke-width="1.3"/><ellipse cx="1689.32" cy="987.22" rx="12" ry="5.4" fill="none" stroke="#f5e500" stroke-width="1.2"/><path d="M1677.59 986.41 L1684.87 960.94 L1701.04 986.41" fill="none" stroke="#f5e500" stroke-width="1.2"/><path d="M1684.87 960.94 L1689.32 992.47" fill="none" stroke="#f5e500" stroke-width="1"/><path d="M1684.87 960.94 L1682.85 991.66" fill="none" stroke="#f5e500" stroke-width="1"/><path d="M1684.87 960.94 L1695.79 991.26" fill="none" stroke="#f5e500" stroke-width="1"/><line x1="1685.68" y1="970.24" x2="1692.96" y2="1009.45" stroke="#4aaae8" stroke-width="1"/><line x1="1751.58" y1="1081.42" x2="1815.05" y2="1086.68" stroke="#4aaae8" stroke-width="1"/><line x1="1717.21" y1="1078.19" x2="1724.09" y2="1079.4" stroke="#4aaae8" stroke-width="1"/><rect x="1808.18" y="1079.4" width="13.75" height="14.15" fill="none" stroke="#587cd8" stroke-width="1"/><line x1="1373.96" y1="1325.21" x2="1379.22" y2="1325.21" stroke="#009000" stroke-width="1.5"/><line x1="1379.22" y1="1301.76" x2="1379.22" y2="1325.21" stroke="#0000c8" stroke-width="1.5"/><line x1="1379.22" y1="1325.21" x2="1400.65" y2="1325.21" stroke="#c00000" stroke-width="1.5"/><text x="1383.26" y="1300.55" font-size="15" fill="#0000c8" font-weight="bold" text-anchor="middle">z</text><text x="1371.13" y="1324.41" font-size="15" fill="#00a000" font-weight="bold" text-anchor="middle">y</text><text x="1404.69" y="1325.21" font-size="15" fill="#c80000" font-weight="bold" text-anchor="middle">x</text></svg></div>
<div id="cmdpanel" class="p" style="left:2265px;top:178px;width:295px;height:1176px;"><svg width="295" height="1176" viewBox="2265 178 295 1176"><rect x="2265" y="178" width="295" height="1176" fill="#444444"/><line x1="2275" y1="190" x2="2558" y2="190" stroke="#dcdcdc" stroke-width="2" stroke-dasharray="2 2"/><line x1="2277" y1="194" x2="2556" y2="194" stroke="#dcdcdc" stroke-width="2" stroke-dasharray="2 2"/><rect x="2272.8" y="199.2" width="287.2" height="41.5" fill="#393939"/><rect x="2272.8" y="199.2" width="46.2" height="41.5" fill="#444444"/><rect x="2271.6" y="199.2" width="1.3" height="41.5" fill="#2e2e2e"/><line x1="2367.5" y1="205" x2="2367.5" y2="233" stroke="#4a4a4a" stroke-width="1.2"/><line x1="2415.4" y1="205" x2="2415.4" y2="233" stroke="#4a4a4a" stroke-width="1.2"/><line x1="2463.5" y1="205" x2="2463.5" y2="233" stroke="#4a4a4a" stroke-width="1.2"/><line x1="2511.6" y1="205" x2="2511.6" y2="233" stroke="#4a4a4a" stroke-width="1.2"/><path d="M2283.8 219.7 L2307.8 219.7 M2295.8 207.7 L2295.8 231.7" fill="none" stroke="#e2e2e2" stroke-width="3.3"/><rect x="2333.8" y="211" width="19.8" height="19.5" fill="none" stroke="#3c9ea0" stroke-width="1.3" stroke-dasharray="3 0"/><path d="M2337 229 Q2338.5 215 2352 212.5" fill="none" stroke="#9a9a9a" stroke-width="2.4"/><rect x="2331.9" y="209.1" width="3.8" height="3.8" fill="#444" stroke="#3c9ea0" stroke-width="1.2"/><rect x="2351.7" y="209.1" width="3.8" height="3.8" fill="#444" stroke="#3c9ea0" stroke-width="1.2"/><rect x="2331.9" y="228.6" width="3.8" height="3.8" fill="#444" stroke="#3c9ea0" stroke-width="1.2"/><rect x="2351.7" y="228.6" width="3.8" height="3.8" fill="#444" stroke="#3c9ea0" stroke-width="1.2"/><rect x="2384" y="209.5" width="16" height="6.2" fill="#9a9a9a"/><path d="M2392 216 L2392 223 M2384.5 228 L2384.5 222.5 L2399.5 222.5 L2399.5 228" fill="none" stroke="#3c9ea0" stroke-width="1.5"/><rect x="2381.8" y="227.5" width="5.6" height="5.4" fill="#3c9ea0"/><rect x="2396.7" y="227.5" width="5.6" height="5.4" fill="#3c9ea0"/><circle cx="2437" cy="220.5" r="9.2" fill="none" stroke="#3c9ea0" stroke-width="1.1"/><circle cx="2439.5" cy="220.5" r="9.2" fill="none" stroke="#3c9ea0" stroke-width="1.1"/><circle cx="2443.5" cy="220.5" r="9.8" fill="#9a9a9a"/><rect x="2476" y="210" width="24" height="14.5" fill="#9a9a9a"/><rect x="2486" y="224.5" width="4" height="4" fill="#9a9a9a"/><rect x="2481.8" y="228.6" width="12.6" height="2.4" fill="#9a9a9a"/><g transform="translate(2535.9 220.5) rotate(-45)"><path d="M-2.6 -3 L-2.6 12.5 Q-2.6 15 0 15 Q2.6 15 2.6 12.5 L2.6 -3 A6.3 6.3 0 0 0 3.4 -14 L3.4 -8.2 L0 -6.4 L-3.4 -8.2 L-3.4 -14 A6.3 6.3 0 0 0 -2.6 -3 Z" fill="#9a9a9a"/></g><circle cx="2292.8" cy="265" r="9.2" fill="#d8d8d8"/><circle cx="2328.8" cy="263.2" r="8.8" fill="#d8d8d8" stroke="#444" stroke-width="1"/><rect x="2326" y="262.2" width="12.4" height="12" fill="#d8d8d8" stroke="#444" stroke-width="1.1"/><circle cx="2328.8" cy="263.2" r="8.3" fill="none" stroke="#444" stroke-width="1"/><g transform="translate(-141.9 -15.7) scale(1.06)"><path d="M2359.5 267.1 A7.8 7.8 0 1 1 2370.5 267.1 Q2368.6 269.2 2368.4 271.4 L2361.6 271.4 Q2361.4 269.2 2359.5 267.1 Z" fill="#d8d8d8"/><rect x="2361.6" y="272.5" width="6.8" height="1.5" fill="#d8d8d8"/><rect x="2362.4" y="274.9" width="5.2" height="1.5" rx="0.7" fill="#d8d8d8"/></g><rect x="2384.1" y="247.8" width="34" height="34.1" rx="5" fill="#5f8dc8"/><g stroke="#3c4a5c" stroke-width="1"><rect x="2391" y="257.25" width="14.8" height="15.5" rx="2.2" fill="#d8d8d8"/><path d="M2407.2 261.4 L2411.3 258.2 L2411.3 271.8 L2407.2 268.6 Z" fill="#d8d8d8"/></g><path d="M2427 254.5 L2427 275 L2447 275 Z M2431.2 264.5 L2431.2 271 L2437.6 271 Z" fill="#d2d2d2" fill-rule="evenodd"/><line x1="2427" y1="258" x2="2429.5" y2="258" stroke="#444" stroke-width="0.9"/><line x1="2427" y1="261.4" x2="2429.5" y2="261.4" stroke="#444" stroke-width="0.9"/><line x1="2427" y1="264.8" x2="2429.5" y2="264.8" stroke="#444" stroke-width="0.9"/><line x1="2427" y1="268.2" x2="2429.5" y2="268.2" stroke="#444" stroke-width="0.9"/><line x1="2427" y1="271.6" x2="2429.5" y2="271.6" stroke="#444" stroke-width="0.9"/><path d="M2462.5 258.6 q5 4.6 11 0.8 q6 -4.4 11 -0.8" fill="none" stroke="#d2d2d2" stroke-width="2.2"/><path d="M2462.5 265.2 q5 4.6 11 0.8 q6 -4.4 11 -0.8" fill="none" stroke="#d2d2d2" stroke-width="2.2"/><path d="M2462.5 271.8 q5 4.6 11 0.8 q6 -4.4 11 -0.8" fill="none" stroke="#d2d2d2" stroke-width="2.2"/><path d="M2508.22 257.7 L2508.22 259.5 L2506.82 259.49 L2506.08 261.03 L2506.96 262.12 L2505.56 263.24 L2504.68 262.14 L2503.02 262.52 L2502.71 263.89 L2500.96 263.49 L2501.28 262.12 L2499.95 261.06 L2498.68 261.67 L2497.9 260.06 L2499.17 259.45 L2499.17 257.75 L2497.9 257.14 L2498.68 255.53 L2499.95 256.14 L2501.28 255.08 L2500.96 253.71 L2502.71 253.31 L2503.02 254.68 L2504.68 255.06 L2505.56 253.96 L2506.96 255.08 L2506.08 256.17 L2506.82 257.71 Z M2500.8 258.6 a2.2 2.2 0 1 0 4.4 0 a2.2 2.2 0 1 0 -4.4 0 Z" fill="#d2d2d2" fill-rule="evenodd"/><path d="M2519.5 268.42 L2519.5 270.78 L2517.64 270.78 L2517 272.33 L2518.32 273.64 L2516.64 275.32 L2515.33 274 L2513.78 274.64 L2513.78 276.5 L2511.42 276.5 L2511.42 274.64 L2509.87 274 L2508.56 275.32 L2506.88 273.64 L2508.2 272.33 L2507.56 270.78 L2505.7 270.78 L2505.7 268.42 L2507.56 268.42 L2508.2 266.87 L2506.88 265.56 L2508.56 263.88 L2509.87 265.2 L2511.42 264.56 L2511.42 262.7 L2513.78 262.7 L2513.78 264.56 L2515.33 265.2 L2516.64 263.88 L2518.32 265.56 L2517 266.87 L2517.64 268.42 Z M2509.6 269.6 a3 3 0 1 0 6 0 a3 3 0 1 0 -6 0 Z" fill="#d2d2d2" fill-rule="evenodd"/><rect x="2275.9" y="290" width="280.3" height="30" fill="#666666"/><text x="2284.3" y="311.8" font-size="17" fill="#e2e2e2" textLength="62.7" lengthAdjust="spacingAndGlyphs">Standard</text><path d="M2536.4 300.8 L2546.2 300.8 L2541.3 308 Z" fill="#e4e4e4"/><rect x="2546.7" y="328" width="10.3" height="1020" rx="5" fill="#3b3b3b"/><rect x="2275.9" y="328" width="266.2" height="144.6" rx="3.5" fill="#515151"/><path d="M2285 338.7 L2295 338.7 L2290 345.9 Z" fill="#bdbdbd"/><text x="2305.3" y="348.4" font-size="17" fill="#ffffff" textLength="97.5" lengthAdjust="spacingAndGlyphs" font-weight="bold">Object Type</text><line x1="2521.6" y1="337" x2="2531.6" y2="337" stroke="#858585" stroke-width="1" stroke-dasharray="1 1.25"/><line x1="2521.6" y1="339.4" x2="2531.6" y2="339.4" stroke="#858585" stroke-width="1" stroke-dasharray="1 1.25"/><line x1="2521.6" y1="341.8" x2="2531.6" y2="341.8" stroke="#858585" stroke-width="1" stroke-dasharray="1 1.25"/><line x1="2521.6" y1="344.2" x2="2531.6" y2="344.2" stroke="#858585" stroke-width="1" stroke-dasharray="1 1.25"/><line x1="2521.6" y1="346.6" x2="2531.6" y2="346.6" stroke="#858585" stroke-width="1" stroke-dasharray="1 1.25"/><rect x="2363.2" y="366.9" width="19.2" height="18.4" fill="#4c4c4c" stroke="#5c5c5c" stroke-width="1"/><text x="2389.8" y="383" font-size="17" fill="#8c8c8c" textLength="62.7" lengthAdjust="spacingAndGlyphs">AutoGrid</text><rect x="2283.8" y="398.1" width="122.1" height="29.5" rx="4" fill="#666666"/><text x="2317.1" y="419.8" font-size="17" fill="#e6e6e6" textLength="55.5" lengthAdjust="spacingAndGlyphs">Physical</text><rect x="2412.8" y="398.1" width="121.6" height="29.5" rx="4" fill="#666666"/><text x="2450.2" y="419.8" font-size="17" fill="#e6e6e6" textLength="45.8" lengthAdjust="spacingAndGlyphs">Target</text><rect x="2283.8" y="435" width="122.1" height="29.5" rx="4" fill="#666666"/><text x="2329.9" y="457" font-size="17" fill="#e6e6e6" textLength="29.9" lengthAdjust="spacingAndGlyphs">Free</text><rect x="2275.9" y="478.7" width="266.2" height="70.7" rx="3.5" fill="#515151"/><path d="M2285 489.3 L2295 489.3 L2290 496.5 Z" fill="#bdbdbd"/><text x="2305.3" y="500" font-size="17" fill="#ffffff" textLength="130" lengthAdjust="spacingAndGlyphs" font-weight="bold">Name and Color</text><line x1="2521.6" y1="488" x2="2531.6" y2="488" stroke="#858585" stroke-width="1" stroke-dasharray="1 1.25"/><line x1="2521.6" y1="490.4" x2="2531.6" y2="490.4" stroke="#858585" stroke-width="1" stroke-dasharray="1 1.25"/><line x1="2521.6" y1="492.8" x2="2531.6" y2="492.8" stroke="#858585" stroke-width="1" stroke-dasharray="1 1.25"/><line x1="2521.6" y1="495.2" x2="2531.6" y2="495.2" stroke="#858585" stroke-width="1" stroke-dasharray="1 1.25"/><line x1="2521.6" y1="497.6" x2="2531.6" y2="497.6" stroke="#858585" stroke-width="1" stroke-dasharray="1 1.25"/><rect x="2283.8" y="512.2" width="213.5" height="29.5" fill="#666666"/><text x="2292.5" y="533.2" font-size="17" fill="#ececec" textLength="64.8" lengthAdjust="spacingAndGlyphs">Omni001</text><rect x="2504.4" y="512.2" width="29.5" height="29.5" fill="#fff600" stroke="#111" stroke-width="1.2"/></svg></div>
<div id="timeslider" class="p" style="left:0px;top:1353px;width:2560px;height:40px;"><svg width="2560" height="40" viewBox="0 1353 2560 40"><rect x="0" y="1353" width="2560" height="40" fill="#444444"/><line x1="5" y1="1364" x2="5" y2="1393" stroke="#dcdcdc" stroke-width="2" stroke-dasharray="2 2"/><line x1="9" y1="1366" x2="9" y2="1393" stroke="#dcdcdc" stroke-width="2" stroke-dasharray="2 2"/><rect x="14" y="1360.6" width="21.7" height="24" rx="4" fill="#666666"/><rect x="38" y="1360.6" width="184.8" height="24" rx="4" fill="#666666"/><rect x="225.2" y="1360.6" width="21.7" height="24" rx="4" fill="#666666"/><text x="20" y="1379.5" font-size="17" fill="#e4e4e4" textLength="10" lengthAdjust="spacingAndGlyphs">&lt;</text><text x="231" y="1379.5" font-size="17" fill="#e4e4e4" textLength="10" lengthAdjust="spacingAndGlyphs">&gt;</text><text x="103.9" y="1378.9" font-size="17" fill="#d6d6d6" textLength="52.1" lengthAdjust="spacingAndGlyphs">0 / 250</text><rect x="13" y="1391.6" width="2547" height="1.6" fill="#1e1e1e"/></svg></div>
<div id="trackbar" class="p" style="left:0px;top:1393px;width:2560px;height:54px;"><svg width="2560" height="54" viewBox="0 1393 2560 54"><rect x="0" y="1393" width="2560" height="54" fill="#444444"/><line x1="5" y1="1392" x2="5" y2="1444" stroke="#dcdcdc" stroke-width="2" stroke-dasharray="2 2"/><line x1="9" y1="1394" x2="9" y2="1442" stroke="#dcdcdc" stroke-width="2" stroke-dasharray="2 2"/><rect x="33.5" y="1404.2" width="5.6" height="1.8" fill="#e0e0e0"/><rect x="33.5" y="1407.2" width="5.6" height="1.8" fill="#e0e0e0"/><rect x="33.5" y="1410.2" width="5.6" height="1.8" fill="#e0e0e0"/><rect x="33.5" y="1413.2" width="5.6" height="1.8" fill="#e0e0e0"/><rect x="33.5" y="1416.2" width="5.6" height="1.8" fill="#e0e0e0"/><path d="M42 1412 Q45.5 1398 49 1411 Q52.5 1424 55.8 1411.5" fill="none" stroke="#45c1c4" stroke-width="1.8"/><rect x="88" y="1393.2" width="2396.8" height="53" fill="#2a2a2a"/><rect x="88" y="1427.6" width="2396.8" height="1" fill="#3c3c3c"/><rect x="86.8" y="1394" width="11.2" height="34.2" fill="#85792a"/><path d="M92.6 1393.4 V1411 M92.6 1424.6 V1429.4 M102.15 1393.4 V1408.6 M111.7 1393.4 V1408.6 M121.26 1393.4 V1408.6 M130.81 1393.4 V1408.6 M140.36 1393.4 V1408.6 M149.91 1393.4 V1408.6 M159.46 1393.4 V1408.6 M169.02 1393.4 V1408.6 M178.57 1393.4 V1408.6 M188.12 1393.4 V1411 M188.12 1424.6 V1429.4 M197.67 1393.4 V1408.6 M207.22 1393.4 V1408.6 M216.78 1393.4 V1408.6 M226.33 1393.4 V1408.6 M235.88 1393.4 V1408.6 M245.43 1393.4 V1408.6 M254.98 1393.4 V1408.6 M264.54 1393.4 V1408.6 M274.09 1393.4 V1408.6 M283.64 1393.4 V1411 M283.64 1424.6 V1429.4 M293.19 1393.4 V1408.6 M302.74 1393.4 V1408.6 M312.3 1393.4 V1408.6 M321.85 1393.4 V1408.6 M331.4 1393.4 V1408.6 M340.95 1393.4 V1408.6 M350.5 1393.4 V1408.6 M360.06 1393.4 V1408.6 M369.61 1393.4 V1408.6 M379.16 1393.4 V1411 M379.16 1424.6 V1429.4 M388.71 1393.4 V1408.6 M398.26 1393.4 V1408.6 M407.82 1393.4 V1408.6 M417.37 1393.4 V1408.6 M426.92 1393.4 V1408.6 M436.47 1393.4 V1408.6 M446.02 1393.4 V1408.6 M455.58 1393.4 V1408.6 M465.13 1393.4 V1408.6 M474.68 1393.4 V1411 M474.68 1424.6 V1429.4 M484.23 1393.4 V1408.6 M493.78 1393.4 V1408.6 M503.34 1393.4 V1408.6 M512.89 1393.4 V1408.6 M522.44 1393.4 V1408.6 M531.99 1393.4 V1408.6 M541.54 1393.4 V1408.6 M551.1 1393.4 V1408.6 M560.65 1393.4 V1408.6 M570.2 1393.4 V1411 M570.2 1424.6 V1429.4 M579.75 1393.4 V1408.6 M589.3 1393.4 V1408.6 M598.86 1393.4 V1408.6 M608.41 1393.4 V1408.6 M617.96 1393.4 V1408.6 M627.51 1393.4 V1408.6 M637.06 1393.4 V1408.6 M646.62 1393.4 V1408.6 M656.17 1393.4 V1408.6 M665.72 1393.4 V1411 M665.72 1424.6 V1429.4 M675.27 1393.4 V1408.6 M684.82 1393.4 V1408.6 M694.38 1393.4 V1408.6 M703.93 1393.4 V1408.6 M713.48 1393.4 V1408.6 M723.03 1393.4 V1408.6 M732.58 1393.4 V1408.6 M742.14 1393.4 V1408.6 M751.69 1393.4 V1408.6 M761.24 1393.4 V1411 M761.24 1424.6 V1429.4 M770.79 1393.4 V1408.6 M780.34 1393.4 V1408.6 M789.9 1393.4 V1408.6 M799.45 1393.4 V1408.6 M809 1393.4 V1408.6 M818.55 1393.4 V1408.6 M828.1 1393.4 V1408.6 M837.66 1393.4 V1408.6 M847.21 1393.4 V1408.6 M856.76 1393.4 V1411 M856.76 1424.6 V1429.4 M866.31 1393.4 V1408.6 M875.86 1393.4 V1408.6 M885.42 1393.4 V1408.6 M894.97 1393.4 V1408.6 M904.52 1393.4 V1408.6 M914.07 1393.4 V1408.6 M923.62 1393.4 V1408.6 M933.18 1393.4 V1408.6 M942.73 1393.4 V1408.6 M952.28 1393.4 V1411 M952.28 1424.6 V1429.4 M961.83 1393.4 V1408.6 M971.38 1393.4 V1408.6 M980.94 1393.4 V1408.6 M990.49 1393.4 V1408.6 M1000.04 1393.4 V1408.6 M1009.59 1393.4 V1408.6 M1019.14 1393.4 V1408.6 M1028.7 1393.4 V1408.6 M1038.25 1393.4 V1408.6 M1047.8 1393.4 V1411 M1047.8 1424.6 V1429.4 M1057.35 1393.4 V1408.6 M1066.9 1393.4 V1408.6 M1076.46 1393.4 V1408.6 M1086.01 1393.4 V1408.6 M1095.56 1393.4 V1408.6 M1105.11 1393.4 V1408.6 M1114.66 1393.4 V1408.6 M1124.22 1393.4 V1408.6 M1133.77 1393.4 V1408.6 M1143.32 1393.4 V1411 M1143.32 1424.6 V1429.4 M1152.87 1393.4 V1408.6 M1162.42 1393.4 V1408.6 M1171.98 1393.4 V1408.6 M1181.53 1393.4 V1408.6 M1191.08 1393.4 V1408.6 M1200.63 1393.4 V1408.6 M1210.18 1393.4 V1408.6 M1219.74 1393.4 V1408.6 M1229.29 1393.4 V1408.6 M1238.84 1393.4 V1411 M1238.84 1424.6 V1429.4 M1248.39 1393.4 V1408.6 M1257.94 1393.4 V1408.6 M1267.5 1393.4 V1408.6 M1277.05 1393.4 V1408.6 M1286.6 1393.4 V1408.6 M1296.15 1393.4 V1408.6 M1305.7 1393.4 V1408.6 M1315.26 1393.4 V1408.6 M1324.81 1393.4 V1408.6 M1334.36 1393.4 V1411 M1334.36 1424.6 V1429.4 M1343.91 1393.4 V1408.6 M1353.46 1393.4 V1408.6 M1363.02 1393.4 V1408.6 M1372.57 1393.4 V1408.6 M1382.12 1393.4 V1408.6 M1391.67 1393.4 V1408.6 M1401.22 1393.4 V1408.6 M1410.78 1393.4 V1408.6 M1420.33 1393.4 V1408.6 M1429.88 1393.4 V1411 M1429.88 1424.6 V1429.4 M1439.43 1393.4 V1408.6 M1448.98 1393.4 V1408.6 M1458.54 1393.4 V1408.6 M1468.09 1393.4 V1408.6 M1477.64 1393.4 V1408.6 M1487.19 1393.4 V1408.6 M1496.74 1393.4 V1408.6 M1506.3 1393.4 V1408.6 M1515.85 1393.4 V1408.6 M1525.4 1393.4 V1411 M1525.4 1424.6 V1429.4 M1534.95 1393.4 V1408.6 M1544.5 1393.4 V1408.6 M1554.06 1393.4 V1408.6 M1563.61 1393.4 V1408.6 M1573.16 1393.4 V1408.6 M1582.71 1393.4 V1408.6 M1592.26 1393.4 V1408.6 M1601.82 1393.4 V1408.6 M1611.37 1393.4 V1408.6 M1620.92 1393.4 V1411 M1620.92 1424.6 V1429.4 M1630.47 1393.4 V1408.6 M1640.02 1393.4 V1408.6 M1649.58 1393.4 V1408.6 M1659.13 1393.4 V1408.6 M1668.68 1393.4 V1408.6 M1678.23 1393.4 V1408.6 M1687.78 1393.4 V1408.6 M1697.34 1393.4 V1408.6 M1706.89 1393.4 V1408.6 M1716.44 1393.4 V1411 M1716.44 1424.6 V1429.4 M1725.99 1393.4 V1408.6 M1735.54 1393.4 V1408.6 M1745.1 1393.4 V1408.6 M1754.65 1393.4 V1408.6 M1764.2 1393.4 V1408.6 M1773.75 1393.4 V1408.6 M1783.3 1393.4 V1408.6 M1792.86 1393.4 V1408.6 M1802.41 1393.4 V1408.6 M1811.96 1393.4 V1411 M1811.96 1424.6 V1429.4 M1821.51 1393.4 V1408.6 M1831.06 1393.4 V1408.6 M1840.62 1393.4 V1408.6 M1850.17 1393.4 V1408.6 M1859.72 1393.4 V1408.6 M1869.27 1393.4 V1408.6 M1878.82 1393.4 V1408.6 M1888.38 1393.4 V1408.6 M1897.93 1393.4 V1408.6 M1907.48 1393.4 V1411 M1907.48 1424.6 V1429.4 M1917.03 1393.4 V1408.6 M1926.58 1393.4 V1408.6 M1936.14 1393.4 V1408.6 M1945.69 1393.4 V1408.6 M1955.24 1393.4 V1408.6 M1964.79 1393.4 V1408.6 M1974.34 1393.4 V1408.6 M1983.9 1393.4 V1408.6 M1993.45 1393.4 V1408.6 M2003 1393.4 V1411 M2003 1424.6 V1429.4 M2012.55 1393.4 V1408.6 M2022.1 1393.4 V1408.6 M2031.66 1393.4 V1408.6 M2041.21 1393.4 V1408.6 M2050.76 1393.4 V1408.6 M2060.31 1393.4 V1408.6 M2069.86 1393.4 V1408.6 M2079.42 1393.4 V1408.6 M2088.97 1393.4 V1408.6 M2098.52 1393.4 V1411 M2098.52 1424.6 V1429.4 M2108.07 1393.4 V1408.6 M2117.62 1393.4 V1408.6 M2127.18 1393.4 V1408.6 M2136.73 1393.4 V1408.6 M2146.28 1393.4 V1408.6 M2155.83 1393.4 V1408.6 M2165.38 1393.4 V1408.6 M2174.94 1393.4 V1408.6 M2184.49 1393.4 V1408.6 M2194.04 1393.4 V1411 M2194.04 1424.6 V1429.4 M2203.59 1393.4 V1408.6 M2213.14 1393.4 V1408.6 M2222.7 1393.4 V1408.6 M2232.25 1393.4 V1408.6 M2241.8 1393.4 V1408.6 M2251.35 1393.4 V1408.6 M2260.9 1393.4 V1408.6 M2270.46 1393.4 V1408.6 M2280.01 1393.4 V1408.6 M2289.56 1393.4 V1411 M2289.56 1424.6 V1429.4 M2299.11 1393.4 V1408.6 M2308.66 1393.4 V1408.6 M2318.22 1393.4 V1408.6 M2327.77 1393.4 V1408.6 M2337.32 1393.4 V1408.6 M2346.87 1393.4 V1408.6 M2356.42 1393.4 V1408.6 M2365.98 1393.4 V1408.6 M2375.53 1393.4 V1408.6 M2385.08 1393.4 V1411 M2385.08 1424.6 V1429.4 M2394.63 1393.4 V1408.6 M2404.18 1393.4 V1408.6 M2413.74 1393.4 V1408.6 M2423.29 1393.4 V1408.6 M2432.84 1393.4 V1408.6 M2442.39 1393.4 V1408.6 M2451.94 1393.4 V1408.6 M2461.5 1393.4 V1408.6 M2471.05 1393.4 V1408.6 M2480.6 1393.4 V1411 M2480.6 1424.6 V1429.4" fill="none" stroke="#7c7c7c" stroke-width="1"/><text x="92.6" y="1425" font-size="16" fill="#d9cf5c" text-anchor="middle">0</text><text x="188.12" y="1425" font-size="16" fill="#cdcdcd" text-anchor="middle">10</text><text x="283.64" y="1425" font-size="16" fill="#cdcdcd" text-anchor="middle">20</text><text x="379.16" y="1425" font-size="16" fill="#cdcdcd" text-anchor="middle">30</text><text x="474.68" y="1425" font-size="16" fill="#cdcdcd" text-anchor="middle">40</text><text x="570.2" y="1425" font-size="16" fill="#cdcdcd" text-anchor="middle">50</text><text x="665.72" y="1425" font-size="16" fill="#cdcdcd" text-anchor="middle">60</text><text x="761.24" y="1425" font-size="16" fill="#cdcdcd" text-anchor="middle">70</text><text x="856.76" y="1425" font-size="16" fill="#cdcdcd" text-anchor="middle">80</text><text x="952.28" y="1425" font-size="16" fill="#cdcdcd" text-anchor="middle">90</text><text x="1047.8" y="1425" font-size="16" fill="#cdcdcd" text-anchor="middle">100</text><text x="1143.32" y="1425" font-size="16" fill="#cdcdcd" text-anchor="middle">110</text><text x="1238.84" y="1425" font-size="16" fill="#cdcdcd" text-anchor="middle">120</text><text x="1334.36" y="1425" font-size="16" fill="#cdcdcd" text-anchor="middle">130</text><text x="1429.88" y="1425" font-size="16" fill="#cdcdcd" text-anchor="middle">140</text><text x="1525.4" y="1425" font-size="16" fill="#cdcdcd" text-anchor="middle">150</text><text x="1620.92" y="1425" font-size="16" fill="#cdcdcd" text-anchor="middle">160</text><text x="1716.44" y="1425" font-size="16" fill="#cdcdcd" text-anchor="middle">170</text><text x="1811.96" y="1425" font-size="16" fill="#cdcdcd" text-anchor="middle">180</text><text x="1907.48" y="1425" font-size="16" fill="#cdcdcd" text-anchor="middle">190</text><text x="2003" y="1425" font-size="16" fill="#cdcdcd" text-anchor="middle">200</text><text x="2098.52" y="1425" font-size="16" fill="#cdcdcd" text-anchor="middle">210</text><text x="2194.04" y="1425" font-size="16" fill="#cdcdcd" text-anchor="middle">220</text><text x="2289.56" y="1425" font-size="16" fill="#cdcdcd" text-anchor="middle">230</text><text x="2385.08" y="1425" font-size="16" fill="#cdcdcd" text-anchor="middle">240</text><text x="2480.6" y="1425" font-size="16" fill="#cdcdcd" text-anchor="middle">250</text></svg></div>
<div id="statusbar" class="p" style="left:0px;top:1447px;width:2560px;height:81px;"><svg width="2560" height="81" viewBox="0 1447 2560 81"><rect x="0" y="1447" width="2560" height="81" fill="#444444"/><rect x="4.5" y="1452.5" width="148.5" height="71.5" fill="#bdbdbd"/><rect x="6" y="1454" width="145.8" height="32.5" fill="#dcc4c4"/><rect x="6" y="1490.3" width="145.8" height="32.4" fill="#ffffff"/><rect x="4.5" y="1486.5" width="148.5" height="3.8" fill="#9a9a9a"/><rect x="6" y="1487.6" width="145.8" height="1.4" fill="#e8e8e8"/><text x="10.6" y="1506.5" font-size="17.8" fill="#000000" textLength="136.7" lengthAdjust="spacingAndGlyphs" class="mono">Array modifier</text><rect x="156" y="1451" width="4.5" height="75" fill="#3a3a3a" stroke="#2a2a2a" stroke-width="1"/><text x="167" y="1477.9" font-size="17" fill="#f2f2f2" textLength="111" lengthAdjust="spacingAndGlyphs">1 Light Selected</text><text x="166.5" y="1514.2" font-size="17" fill="#f2f2f2" textLength="293" lengthAdjust="spacingAndGlyphs">Click and drag to select and move objects</text><path d="M1232.4 1466 V1460.5 H1238 M1253.5 1460.5 H1259 V1466 M1232.4 1479 V1484.5 H1238 M1253.5 1484.5 H1259 V1479" fill="none" stroke="#d8d8d8" stroke-width="1.5"/><rect x="1241" y="1463.5" width="9.5" height="8.2" fill="#45c1c4" stroke="#333" stroke-width="0.7"/><path d="M1239.5 1472.5 L1252 1472.5 L1256 1480 L1235.5 1480 Z" fill="#d8d8d8"/><path d="M1260 1480.5 L1260 1486.5 L1254 1486.5 Z" fill="#d8d8d8"/><rect x="1275.4" y="1468.4" width="16.6" height="13.6" rx="1.8" fill="#d8d8d8"/><path d="M1279.1 1468.6 L1279.1 1465 A4.6 4.6 0 0 1 1288.3 1465 L1288.3 1468.6" fill="none" stroke="#d8d8d8" stroke-width="2.4"/><circle cx="1283.7" cy="1473.6" r="1.7" fill="#444"/><rect x="1282.9" y="1473.6" width="1.6" height="4.4" fill="#444"/><rect x="1314.2" y="1462" width="19.6" height="19" fill="none" stroke="#d8d8d8" stroke-width="1.6"/><circle cx="1324" cy="1471.5" r="3.6" fill="none" stroke="#d8d8d8" stroke-width="1.8"/><path d="M1324 1462 V1467 M1324 1476 V1481 M1314 1471.5 H1319.5 M1328.5 1471.5 H1334" fill="none" stroke="#d8d8d8" stroke-width="1.8"/><text x="1347" y="1477.6" font-size="17" fill="#f0f0f0" textLength="14.3" lengthAdjust="spacingAndGlyphs">X:</text><rect x="1365.5" y="1458" width="102.5" height="25.8" fill="#666666"/><text x="1369.3" y="1477.6" font-size="17" fill="#d6d6d6" textLength="58" lengthAdjust="spacingAndGlyphs">324,583</text><path d="M1456.5 1469 L1463.5 1469 L1460 1463 Z" fill="#d0d0d0"/><path d="M1456.5 1473 L1463.5 1473 L1460 1479 Z" fill="#d0d0d0"/><text x="1471.6" y="1477.6" font-size="17" fill="#f0f0f0" textLength="14.3" lengthAdjust="spacingAndGlyphs">Y:</text><rect x="1491.6" y="1458" width="102.5" height="25.8" fill="#666666"/><text x="1495.4" y="1477.6" font-size="17" fill="#d6d6d6" textLength="58.5" lengthAdjust="spacingAndGlyphs">301,898</text><path d="M1582.6 1469 L1589.6 1469 L1586.1 1463 Z" fill="#d0d0d0"/><path d="M1582.6 1473 L1589.6 1473 L1586.1 1479 Z" fill="#d0d0d0"/><text x="1597.7" y="1477.6" font-size="17" fill="#f0f0f0" textLength="14.3" lengthAdjust="spacingAndGlyphs">Z:</text><rect x="1616.8" y="1458" width="102.5" height="25.8" fill="#666666"/><text x="1620.6" y="1477.6" font-size="17" fill="#d6d6d6" textLength="40.8" lengthAdjust="spacingAndGlyphs">299,0</text><path d="M1707.8 1469 L1714.8 1469 L1711.3 1463 Z" fill="#d0d0d0"/><path d="M1707.8 1473 L1714.8 1473 L1711.3 1479 Z" fill="#d0d0d0"/><text x="1725.2" y="1477.6" font-size="17" fill="#f0f0f0" textLength="84.1" lengthAdjust="spacingAndGlyphs">Grid = 10,0</text><line x1="1494.7" y1="1496.5" x2="1494.7" y2="1520" stroke="#1e1e1e" stroke-width="1.5"/><rect x="1504" y="1492.8" width="30" height="31" rx="5" fill="#666666"/><path d="M1519 1499 Q1523.5 1501.6 1527.6 1501.6 L1527.6 1508 Q1527.6 1515 1519 1519 Q1510.4 1515 1510.4 1508 L1510.4 1501.6 Q1514.5 1501.6 1519 1499 Z" fill="#444" stroke="#d8d8d8" stroke-width="1.5"/><path d="M1519 1500.5 Q1515 1502.6 1511.6 1502.8 L1511.6 1508.6 L1519 1508.6 Z M1519 1508.6 L1526.4 1508.6 Q1526 1514 1519 1517.6 Z" fill="#d8d8d8"/><text x="1542" y="1514.8" font-size="17" fill="#f0f0f0" textLength="61" lengthAdjust="spacingAndGlyphs">Enabled:</text><circle cx="1617.4" cy="1508.6" r="6.8" fill="#3fd13f"/><rect x="1632" y="1492.8" width="29.6" height="31" rx="5" fill="#666666"/><circle cx="1646.7" cy="1508.3" r="10.7" fill="#f4f4f4"/><text x="1646.7" y="1514.6" font-size="16.5" fill="#333" font-weight="bold" text-anchor="middle">0</text><line x1="1669.5" y1="1496.5" x2="1669.5" y2="1520" stroke="#1e1e1e" stroke-width="1.5"/><path d="M1693.2 1500 L1702 1504.3 L1702 1514 L1693.2 1518.6 L1684.4 1514 L1684.4 1504.3 Z M1684.4 1504.3 L1693.2 1508.8 L1702 1504.3 M1693.2 1508.8 V1518.6" fill="none" stroke="#d8d8d8" stroke-width="1.3" stroke-linejoin="round"/><text x="1716.5" y="1514.8" font-size="17" fill="#f0f0f0" textLength="99.9" lengthAdjust="spacingAndGlyphs">Add Time Tag</text><rect x="1890.4" y="1461" width="3.3" height="16" fill="#d8d8d8"/><path d="M1894.5 1468.8 L1903 1462.5 L1903 1475.2 Z" fill="#d8d8d8"/><path d="M1904 1468.8 L1913.5 1462.5 L1913.5 1475.2 Z" fill="#d8d8d8"/><line x1="1921.4" y1="1457.5" x2="1921.4" y2="1480.5" stroke="#1e1e1e" stroke-width="1.5"/><path d="M1929 1468.8 L1938 1462.5 L1938 1475.2 Z" fill="#d8d8d8"/><rect x="1940" y="1461" width="4.2" height="16" fill="#d8d8d8"/><rect x="1946.7" y="1461" width="4.2" height="16" fill="#d8d8d8"/><path d="M1969.5 1462.3 L1969.5 1475.3 L1979.6 1468.8 Z" fill="#d8d8d8"/><path d="M1989.5 1478 L1989.5 1484 L1983.5 1484 Z" fill="#d8d8d8"/><rect x="1996.5" y="1461" width="4.2" height="16" fill="#d8d8d8"/><rect x="2003.2" y="1461" width="4.2" height="16" fill="#d8d8d8"/><path d="M2019 1468.8 L2009.7 1462.5 L2009.7 1475.2 Z" fill="#d8d8d8"/><line x1="2027.5" y1="1457.5" x2="2027.5" y2="1480.5" stroke="#1e1e1e" stroke-width="1.5"/><path d="M2044 1468.8 L2034.8 1462.5 L2034.8 1475.2 Z" fill="#d8d8d8"/><path d="M2053.8 1468.8 L2044.8 1462.5 L2044.8 1475.2 Z" fill="#d8d8d8"/><rect x="2054.3" y="1461" width="3.3" height="16" fill="#d8d8d8"/><path d="M1890.6 1502 L1900 1496 L1900 1508 Z" fill="#d8d8d8"/><path d="M1913.4 1502 L1904 1496 L1904 1508 Z" fill="#d8d8d8"/><line x1="1921.4" y1="1490.5" x2="1921.4" y2="1514" stroke="#1e1e1e" stroke-width="1.5"/><rect x="1924.2" y="1490" width="102.4" height="24.2" fill="#666666"/><text x="1927.5" y="1508.5" font-size="17" fill="#d6d6d6" textLength="8.5" lengthAdjust="spacingAndGlyphs">0</text><path d="M2015 1500.2 L2022 1500.2 L2018.5 1494.2 Z" fill="#d0d0d0"/><path d="M2015 1504.2 L2022 1504.2 L2018.5 1510.2 Z" fill="#d0d0d0"/><line x1="2030.3" y1="1490.5" x2="2030.3" y2="1514" stroke="#1e1e1e" stroke-width="1.5"/><circle cx="2046.2" cy="1498.6" r="8" fill="#d8d8d8"/><path d="M2045.6 1493.5 V1499.6 H2050" fill="none" stroke="#444" stroke-width="1.7"/><path d="M2060.91 1506.22 L2060.91 1508.38 L2059.21 1508.38 L2058.62 1509.8 L2059.83 1510.99 L2058.29 1512.53 L2057.1 1511.32 L2055.68 1511.91 L2055.68 1513.61 L2053.52 1513.61 L2053.52 1511.91 L2052.1 1511.32 L2050.91 1512.53 L2049.37 1510.99 L2050.58 1509.8 L2049.99 1508.38 L2048.29 1508.38 L2048.29 1506.22 L2049.99 1506.22 L2050.58 1504.8 L2049.37 1503.61 L2050.91 1502.07 L2052.1 1503.28 L2053.52 1502.69 L2053.52 1500.99 L2055.68 1500.99 L2055.68 1502.69 L2057.1 1503.28 L2058.29 1502.07 L2059.83 1503.61 L2058.62 1504.8 L2059.21 1506.22 Z M2051.9 1507.3 a2.7 2.7 0 1 0 5.4 0 a2.7 2.7 0 1 0 -5.4 0 Z" fill="#fbb020" fill-rule="evenodd"/><rect x="2080" y="1454.3" width="63.7" height="66.7" rx="6" fill="#666666"/><path d="M2106.5 1466.5 H2115.5 V1483.5 H2129.5 V1492.5 H2115.5 V1504 H2106.5 V1492.5 H2092 V1483.5 H2106.5 Z" fill="#e6e6e6" stroke="#444" stroke-width="0.8"/><g transform="translate(2115.5 1500.5) rotate(-40)"><circle cx="0" cy="0" r="4.8" fill="none" stroke="#444" stroke-width="4.6"/><path d="M4.8 0 H19 M13.5 0 V4.8 M17.8 0 V4.8" fill="none" stroke="#444" stroke-width="4.6"/><circle cx="0" cy="0" r="4.8" fill="none" stroke="#45c1c4" stroke-width="3"/><path d="M4.8 0 H19 M13.5 0 V4.6 M17.8 0 V4.6" fill="none" stroke="#45c1c4" stroke-width="3"/></g><rect x="2149" y="1454.3" width="69.9" height="30.4" rx="5" fill="#666666"/><text x="2167.6" y="1476" font-size="17" fill="#e6e6e6" textLength="33" lengthAdjust="spacingAndGlyphs">Auto</text><rect x="2149" y="1487.2" width="69.9" height="30.4" rx="5" fill="#666666"/><text x="2163.1" y="1509.2" font-size="17" fill="#e6e6e6" textLength="40.3" lengthAdjust="spacingAndGlyphs">Set K.</text><rect x="2223.9" y="1454.3" width="170.9" height="24.5" fill="#666666"/><text x="2232" y="1472.6" font-size="17" fill="#e6e6e6" textLength="57.8" lengthAdjust="spacingAndGlyphs">Selected</text><path d="M2375 1463.4 L2385.8 1463.4 L2380.4 1470.4 Z" fill="#e4e4e4"/><path d="M2229.5 1514.5 Q2236 1512 2237 1497 L2245.5 1497 Q2246.5 1512 2253 1514.5" fill="none" stroke="#45c1c4" stroke-width="1.6"/><rect x="2239.2" y="1492.7" width="4.6" height="4.6" fill="#444" stroke="#d8d8d8" stroke-width="1.2"/><circle cx="2230.6" cy="1495" r="1.6" fill="#d8d8d8"/><circle cx="2252.2" cy="1495" r="1.6" fill="#d8d8d8"/><line x1="2232" y1="1495" x2="2239" y2="1495" stroke="#d8d8d8" stroke-width="0.9" stroke-dasharray="1 1"/><line x1="2244" y1="1495" x2="2251" y2="1495" stroke="#d8d8d8" stroke-width="0.9" stroke-dasharray="1 1"/><path d="M2256 1513 L2256 1519 L2250 1519 Z" fill="#d8d8d8"/><rect x="2261" y="1488" width="132.9" height="30.5" rx="5" fill="#666666"/><text x="2299" y="1509.2" font-size="17" fill="#e6e6e6" textLength="56.4" lengthAdjust="spacingAndGlyphs">Filters...</text><circle cx="2428.3" cy="1467.2" r="6.4" fill="none" stroke="#d8d8d8" stroke-width="2.5"/><line x1="2423.7" y1="1471.8" x2="2416.2" y2="1479.3" stroke="#d8d8d8" stroke-width="3.3"/><rect x="2456" y="1458.5" width="7.2" height="7.2" fill="#45c1c4"/><rect x="2464.6" y="1458.5" width="7.2" height="7.2" fill="#45c1c4"/><rect x="2464.6" y="1467" width="7.2" height="7.2" fill="#45c1c4"/><circle cx="2457.8" cy="1469.9" r="4.6" fill="none" stroke="#d8d8d8" stroke-width="1.8"/><line x1="2453.2" y1="1474.5" x2="2445.7" y2="1482" stroke="#d8d8d8" stroke-width="2.6"/><path d="M2484.2 1464.5 V1459.6 H2489 M2499.5 1459.6 H2504.4 V1464.5 M2484.2 1475.5 V1480.4 H2489 M2499.5 1480.4 H2504.4 V1475.5" fill="none" stroke="#d8d8d8" stroke-width="1.4"/><path d="M2494.3 1462.4 L2501.52 1466.2 L2494.3 1470 L2487.08 1466.2 Z" fill="#6fd6d8"/><path d="M2487.08 1466.2 L2494.3 1470 L2494.3 1477.6 L2487.08 1473.8 Z" fill="#3aa9ac"/><path d="M2501.52 1466.2 L2494.3 1470 L2494.3 1477.6 L2501.52 1473.8 Z" fill="#45c1c4"/><path d="M2509.5 1479 L2509.5 1485 L2503.5 1485 Z" fill="#d8d8d8"/><path d="M2518.5 1474 L2524 1471 L2529.5 1474 L2524 1477 Z" fill="#d8d8d8"/><path d="M2525 1478.5 L2530.5 1475.5 L2536 1478.5 L2530.5 1481.5 Z" fill="#d8d8d8"/><path d="M2532.3 1459.4 L2538.38 1462.6 L2532.3 1465.8 L2526.22 1462.6 Z" fill="#6fd6d8"/><path d="M2526.22 1462.6 L2532.3 1465.8 L2532.3 1472.2 L2526.22 1469 Z" fill="#3aa9ac"/><path d="M2538.38 1462.6 L2532.3 1465.8 L2532.3 1472.2 L2538.38 1469 Z" fill="#45c1c4"/><path d="M2543 1479 L2543 1485 L2537 1485 Z" fill="#d8d8d8"/><rect x="2416" y="1491.5" width="21" height="14.5" fill="none" stroke="#d8d8d8" stroke-width="1.5" stroke-dasharray="4 2"/><circle cx="2424.1" cy="1505.4" r="4.4" fill="none" stroke="#45c1c4" stroke-width="1.7"/><line x1="2419.5" y1="1510" x2="2412" y2="1517.5" stroke="#45c1c4" stroke-width="2.5"/><path d="M2452.5 1512.5 Q2448 1506 2446.2 1502.5 Q2445.4 1500.4 2447.4 1500 Q2449 1499.8 2450.6 1502.6 L2451.6 1504 L2451.6 1494.5 Q2451.6 1492.8 2453.2 1492.8 Q2454.7 1492.8 2454.7 1494.5 L2454.7 1492.6 Q2454.7 1491 2456.3 1491 Q2457.9 1491 2457.9 1492.6 L2457.9 1493.8 Q2457.9 1492.2 2459.5 1492.2 Q2461.1 1492.2 2461.1 1493.8 L2461.1 1496 Q2461.1 1494.6 2462.6 1494.6 Q2464.2 1494.6 2464.2 1496.2 L2464.2 1506 Q2464.2 1510 2462 1512.5 Z" fill="#d8d8d8"/><path d="M2454.7 1494.5 V1501 M2457.9 1493.8 V1501 M2461.1 1496 V1501" fill="none" stroke="#444" stroke-width="0.7"/><path d="M2473 1511.5 L2473 1517.5 L2467 1517.5 Z" fill="#d8d8d8"/><circle cx="2494" cy="1502" r="8.6" fill="#d8d8d8"/><path d="M2494 1502 L2494 1493.4 A8.6 8.6 0 0 0 2485.4 1502 Z" fill="#45c1c4" stroke="#444" stroke-width="0.8"/><ellipse cx="2494" cy="1502.5" rx="14.5" ry="4.6" fill="none" stroke="#444" stroke-width="3" transform="rotate(-24 2494 1502.5)"/><ellipse cx="2494" cy="1502.5" rx="14.5" ry="4.6" fill="none" stroke="#d8d8d8" stroke-width="1.7" transform="rotate(-24 2494 1502.5)"/><path d="M2485.6 1500 A8.6 8.6 0 0 1 2502.4 1500 L2502.4 1498 L2485.6 1498 Z" fill="none"/><path d="M2509.5 1511.5 L2509.5 1517.5 L2503.5 1517.5 Z" fill="#d8d8d8"/><rect x="2518.6" y="1492.3" width="19.6" height="19.6" fill="none" stroke="#d8d8d8" stroke-width="1.8"/><rect x="2518.6" y="1503" width="9" height="9" fill="#d8d8d8"/><path d="M2526 1504.5 L2535.5 1495 M2529.5 1494.2 H2536.4 V1501" fill="none" stroke="#d8d8d8" stroke-width="2.2"/></svg></div>
</body></html>
